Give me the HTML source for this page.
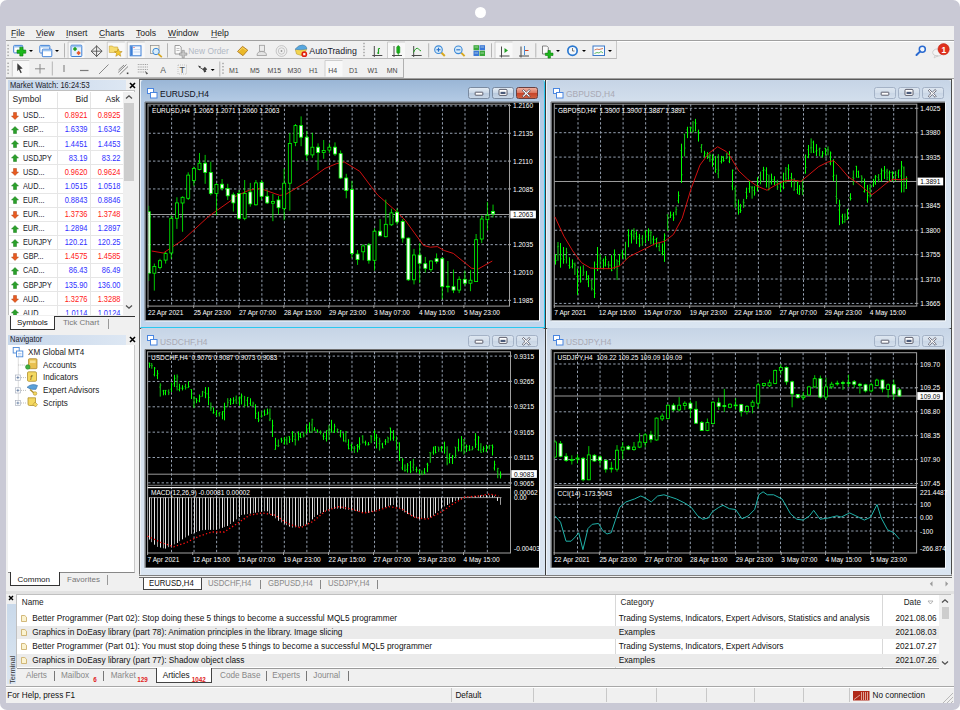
<!DOCTYPE html><html><head><meta charset="utf-8"><style>html,body{margin:0;padding:0;}body{width:960px;height:710px;position:relative;overflow:hidden;background:#fff;font-family:"Liberation Sans", sans-serif;}svg text{font-family:"Liberation Sans",sans-serif;}</style></head><body><div style="position:absolute;left:0;top:0;width:960px;height:710px;border-radius:7px;background:#c9c9d5;"></div><div style="position:absolute;left:474.9px;top:7.1px;width:11.3px;height:11.3px;border-radius:6px;background:#fff;"></div><div style="position:absolute;left:6px;top:26px;width:948px;height:677px;background:#f0f0f0;"></div><div style="position:absolute;left:11px;top:27.5px;font-size:8.6px;line-height:10.32px;color:#1a1a1a;white-space:nowrap;"><span style="text-decoration:underline;text-decoration-color:#888">F</span>ile</div><div style="position:absolute;left:36px;top:27.5px;font-size:8.6px;line-height:10.32px;color:#1a1a1a;white-space:nowrap;"><span style="text-decoration:underline;text-decoration-color:#888">V</span>iew</div><div style="position:absolute;left:66px;top:27.5px;font-size:8.6px;line-height:10.32px;color:#1a1a1a;white-space:nowrap;"><span style="text-decoration:underline;text-decoration-color:#888">I</span>nsert</div><div style="position:absolute;left:99px;top:27.5px;font-size:8.6px;line-height:10.32px;color:#1a1a1a;white-space:nowrap;"><span style="text-decoration:underline;text-decoration-color:#888">C</span>harts</div><div style="position:absolute;left:136px;top:27.5px;font-size:8.6px;line-height:10.32px;color:#1a1a1a;white-space:nowrap;"><span style="text-decoration:underline;text-decoration-color:#888">T</span>ools</div><div style="position:absolute;left:168px;top:27.5px;font-size:8.6px;line-height:10.32px;color:#1a1a1a;white-space:nowrap;"><span style="text-decoration:underline;text-decoration-color:#888">W</span>indow</div><div style="position:absolute;left:211px;top:27.5px;font-size:8.6px;line-height:10.32px;color:#1a1a1a;white-space:nowrap;"><span style="text-decoration:underline;text-decoration-color:#888">H</span>elp</div><div style="position:absolute;left:6px;top:39.5px;width:948px;height:1px;background:#a0a0a0;"></div><div style="position:absolute;left:6px;top:40.5px;width:948px;height:1px;background:#fff;"></div><div style="position:absolute;left:6px;top:41px;width:611px;height:17.5px;background:#f0f0f0;border-bottom:1px solid #b8b8b8;border-right:1px solid #c8c8c8;box-sizing:border-box;"></div><div style="position:absolute;left:6px;top:59px;width:398px;height:18.5px;background:#f0f0f0;border-bottom:1px solid #b8b8b8;border-right:1px solid #b0b0b0;box-sizing:border-box;"></div><div style="position:absolute;left:6px;top:77.5px;width:948px;height:1px;background:#a0a0a0;"></div><div style="position:absolute;left:8px;top:80px;width:118px;height:10.5px;background:linear-gradient(to right,#c6d6ea,#dde7f3);"></div><div style="position:absolute;left:10px;top:79.6px;font-size:8.4px;line-height:10.08px;color:#1a1a2a;white-space:nowrap;transform:scaleX(0.9);transform-origin:0 0;">Market Watch: 16:24:53</div><svg style="position:absolute;left:128.5px;top:82.3px" width="7" height="7" viewBox="0 0 7 7"><path d="M1 1L6 6M6 1L1 6" stroke="#000" stroke-width="1.6"/></svg><div style="position:absolute;left:8px;top:90px;width:127px;height:226px;background:#fff;border:1px solid #c0c0c0;box-sizing:border-box;"></div><div style="position:absolute;left:9px;top:90.5px;width:114px;height:18.3px;background:#fff;border-bottom:1px solid #dcdcdc;box-sizing:border-box;"></div><div style="position:absolute;left:57px;top:92px;width:1px;height:16px;background:#e4e4e4;"></div><div style="position:absolute;left:90px;top:92px;width:1px;height:16px;background:#e4e4e4;"></div><div style="position:absolute;left:12.5px;top:94px;font-size:8.6px;line-height:10.32px;color:#222;white-space:nowrap;">Symbol</div><div style="position:absolute;left:75.5px;top:94px;font-size:8.6px;line-height:10.32px;color:#222;white-space:nowrap;">Bid</div><div style="position:absolute;left:105.5px;top:94px;font-size:8.6px;line-height:10.32px;color:#222;white-space:nowrap;">Ask</div><div style="position:absolute;left:123px;top:92px;width:12px;height:224px;background:#f0f0f0;"></div><div style="position:absolute;left:124px;top:103px;width:10px;height:78px;background:#cdcdcd;"></div><svg style="position:absolute;left:124px;top:94px" width="10" height="6" viewBox="0 0 10 6"><path d="M2 4.5L5 1.8L8 4.5" fill="none" stroke="#505050" stroke-width="1.3"/></svg><svg style="position:absolute;left:124px;top:304px" width="10" height="6" viewBox="0 0 10 6"><path d="M2 1.5L5 4.2L8 1.5" fill="none" stroke="#505050" stroke-width="1.3"/></svg><div style="position:absolute;left:9px;top:122px;width:114px;height:1px;background:#e6e6e6;"></div><div style="position:absolute;left:57px;top:108.8px;width:1px;height:14px;background:#e6e6e6;"></div><div style="position:absolute;left:90px;top:108.8px;width:1px;height:14px;background:#e6e6e6;"></div><svg style="position:absolute;left:11px;top:111.8px" width="8" height="8" viewBox="0 0 8 8"><path d="M4 7.5 L7.5 4 L5.5 4 L5.5 0.5 L2.5 0.5 L2.5 4 L0.5 4Z" fill="#e85a20" stroke="#b04010" stroke-width="0.5"/></svg><div style="position:absolute;left:22.8px;top:110.3px;font-size:8.8px;line-height:10.56px;color:#1a1a2a;white-space:nowrap;transform:scaleX(0.83);transform-origin:0 0;">USD...</div><div style="position:absolute;left:54.3px;top:110.3px;font-size:8.8px;line-height:10.56px;color:#ff2020;white-space:nowrap;"><div style="width:33.5px;text-align:right;transform:scaleX(0.85);transform-origin:100% 0;">0.8921</div></div><div style="position:absolute;left:87.3px;top:110.3px;font-size:8.8px;line-height:10.56px;color:#ff2020;white-space:nowrap;"><div style="width:33.5px;text-align:right;transform:scaleX(0.85);transform-origin:100% 0;">0.8925</div></div><div style="position:absolute;left:9px;top:136.1px;width:114px;height:1px;background:#e6e6e6;"></div><div style="position:absolute;left:57px;top:122.9px;width:1px;height:14px;background:#e6e6e6;"></div><div style="position:absolute;left:90px;top:122.9px;width:1px;height:14px;background:#e6e6e6;"></div><svg style="position:absolute;left:11px;top:125.9px" width="8" height="8" viewBox="0 0 8 8"><path d="M4 0.5 L7.5 4 L5.5 4 L5.5 7.5 L2.5 7.5 L2.5 4 L0.5 4Z" fill="#2aa02a" stroke="#1a7a1a" stroke-width="0.5"/></svg><div style="position:absolute;left:22.8px;top:124.4px;font-size:8.8px;line-height:10.56px;color:#1a1a2a;white-space:nowrap;transform:scaleX(0.83);transform-origin:0 0;">GBP...</div><div style="position:absolute;left:54.3px;top:124.4px;font-size:8.8px;line-height:10.56px;color:#3030ff;white-space:nowrap;"><div style="width:33.5px;text-align:right;transform:scaleX(0.85);transform-origin:100% 0;">1.6339</div></div><div style="position:absolute;left:87.3px;top:124.4px;font-size:8.8px;line-height:10.56px;color:#3030ff;white-space:nowrap;"><div style="width:33.5px;text-align:right;transform:scaleX(0.85);transform-origin:100% 0;">1.6342</div></div><div style="position:absolute;left:9px;top:150.2px;width:114px;height:1px;background:#e6e6e6;"></div><div style="position:absolute;left:57px;top:137px;width:1px;height:14px;background:#e6e6e6;"></div><div style="position:absolute;left:90px;top:137px;width:1px;height:14px;background:#e6e6e6;"></div><svg style="position:absolute;left:11px;top:140px" width="8" height="8" viewBox="0 0 8 8"><path d="M4 0.5 L7.5 4 L5.5 4 L5.5 7.5 L2.5 7.5 L2.5 4 L0.5 4Z" fill="#2aa02a" stroke="#1a7a1a" stroke-width="0.5"/></svg><div style="position:absolute;left:22.8px;top:138.5px;font-size:8.8px;line-height:10.56px;color:#1a1a2a;white-space:nowrap;transform:scaleX(0.83);transform-origin:0 0;">EUR...</div><div style="position:absolute;left:54.3px;top:138.5px;font-size:8.8px;line-height:10.56px;color:#3030ff;white-space:nowrap;"><div style="width:33.5px;text-align:right;transform:scaleX(0.85);transform-origin:100% 0;">1.4451</div></div><div style="position:absolute;left:87.3px;top:138.5px;font-size:8.8px;line-height:10.56px;color:#3030ff;white-space:nowrap;"><div style="width:33.5px;text-align:right;transform:scaleX(0.85);transform-origin:100% 0;">1.4453</div></div><div style="position:absolute;left:9px;top:164.3px;width:114px;height:1px;background:#e6e6e6;"></div><div style="position:absolute;left:57px;top:151.1px;width:1px;height:14px;background:#e6e6e6;"></div><div style="position:absolute;left:90px;top:151.1px;width:1px;height:14px;background:#e6e6e6;"></div><svg style="position:absolute;left:11px;top:154.1px" width="8" height="8" viewBox="0 0 8 8"><path d="M4 0.5 L7.5 4 L5.5 4 L5.5 7.5 L2.5 7.5 L2.5 4 L0.5 4Z" fill="#2aa02a" stroke="#1a7a1a" stroke-width="0.5"/></svg><div style="position:absolute;left:22.8px;top:152.6px;font-size:8.8px;line-height:10.56px;color:#1a1a2a;white-space:nowrap;transform:scaleX(0.83);transform-origin:0 0;">USDJPY</div><div style="position:absolute;left:54.3px;top:152.6px;font-size:8.8px;line-height:10.56px;color:#3030ff;white-space:nowrap;"><div style="width:33.5px;text-align:right;transform:scaleX(0.85);transform-origin:100% 0;">83.19</div></div><div style="position:absolute;left:87.3px;top:152.6px;font-size:8.8px;line-height:10.56px;color:#3030ff;white-space:nowrap;"><div style="width:33.5px;text-align:right;transform:scaleX(0.85);transform-origin:100% 0;">83.22</div></div><div style="position:absolute;left:9px;top:178.4px;width:114px;height:1px;background:#e6e6e6;"></div><div style="position:absolute;left:57px;top:165.2px;width:1px;height:14px;background:#e6e6e6;"></div><div style="position:absolute;left:90px;top:165.2px;width:1px;height:14px;background:#e6e6e6;"></div><svg style="position:absolute;left:11px;top:168.2px" width="8" height="8" viewBox="0 0 8 8"><path d="M4 7.5 L7.5 4 L5.5 4 L5.5 0.5 L2.5 0.5 L2.5 4 L0.5 4Z" fill="#e85a20" stroke="#b04010" stroke-width="0.5"/></svg><div style="position:absolute;left:22.8px;top:166.7px;font-size:8.8px;line-height:10.56px;color:#1a1a2a;white-space:nowrap;transform:scaleX(0.83);transform-origin:0 0;">USD...</div><div style="position:absolute;left:54.3px;top:166.7px;font-size:8.8px;line-height:10.56px;color:#ff2020;white-space:nowrap;"><div style="width:33.5px;text-align:right;transform:scaleX(0.85);transform-origin:100% 0;">0.9620</div></div><div style="position:absolute;left:87.3px;top:166.7px;font-size:8.8px;line-height:10.56px;color:#ff2020;white-space:nowrap;"><div style="width:33.5px;text-align:right;transform:scaleX(0.85);transform-origin:100% 0;">0.9624</div></div><div style="position:absolute;left:9px;top:192.5px;width:114px;height:1px;background:#e6e6e6;"></div><div style="position:absolute;left:57px;top:179.3px;width:1px;height:14px;background:#e6e6e6;"></div><div style="position:absolute;left:90px;top:179.3px;width:1px;height:14px;background:#e6e6e6;"></div><svg style="position:absolute;left:11px;top:182.3px" width="8" height="8" viewBox="0 0 8 8"><path d="M4 0.5 L7.5 4 L5.5 4 L5.5 7.5 L2.5 7.5 L2.5 4 L0.5 4Z" fill="#2aa02a" stroke="#1a7a1a" stroke-width="0.5"/></svg><div style="position:absolute;left:22.8px;top:180.8px;font-size:8.8px;line-height:10.56px;color:#1a1a2a;white-space:nowrap;transform:scaleX(0.83);transform-origin:0 0;">AUD...</div><div style="position:absolute;left:54.3px;top:180.8px;font-size:8.8px;line-height:10.56px;color:#3030ff;white-space:nowrap;"><div style="width:33.5px;text-align:right;transform:scaleX(0.85);transform-origin:100% 0;">1.0515</div></div><div style="position:absolute;left:87.3px;top:180.8px;font-size:8.8px;line-height:10.56px;color:#3030ff;white-space:nowrap;"><div style="width:33.5px;text-align:right;transform:scaleX(0.85);transform-origin:100% 0;">1.0518</div></div><div style="position:absolute;left:9px;top:206.6px;width:114px;height:1px;background:#e6e6e6;"></div><div style="position:absolute;left:57px;top:193.4px;width:1px;height:14px;background:#e6e6e6;"></div><div style="position:absolute;left:90px;top:193.4px;width:1px;height:14px;background:#e6e6e6;"></div><svg style="position:absolute;left:11px;top:196.4px" width="8" height="8" viewBox="0 0 8 8"><path d="M4 0.5 L7.5 4 L5.5 4 L5.5 7.5 L2.5 7.5 L2.5 4 L0.5 4Z" fill="#2aa02a" stroke="#1a7a1a" stroke-width="0.5"/></svg><div style="position:absolute;left:22.8px;top:194.9px;font-size:8.8px;line-height:10.56px;color:#1a1a2a;white-space:nowrap;transform:scaleX(0.83);transform-origin:0 0;">EUR...</div><div style="position:absolute;left:54.3px;top:194.9px;font-size:8.8px;line-height:10.56px;color:#3030ff;white-space:nowrap;"><div style="width:33.5px;text-align:right;transform:scaleX(0.85);transform-origin:100% 0;">0.8843</div></div><div style="position:absolute;left:87.3px;top:194.9px;font-size:8.8px;line-height:10.56px;color:#3030ff;white-space:nowrap;"><div style="width:33.5px;text-align:right;transform:scaleX(0.85);transform-origin:100% 0;">0.8846</div></div><div style="position:absolute;left:9px;top:220.7px;width:114px;height:1px;background:#e6e6e6;"></div><div style="position:absolute;left:57px;top:207.5px;width:1px;height:14px;background:#e6e6e6;"></div><div style="position:absolute;left:90px;top:207.5px;width:1px;height:14px;background:#e6e6e6;"></div><svg style="position:absolute;left:11px;top:210.5px" width="8" height="8" viewBox="0 0 8 8"><path d="M4 7.5 L7.5 4 L5.5 4 L5.5 0.5 L2.5 0.5 L2.5 4 L0.5 4Z" fill="#e85a20" stroke="#b04010" stroke-width="0.5"/></svg><div style="position:absolute;left:22.8px;top:209px;font-size:8.8px;line-height:10.56px;color:#1a1a2a;white-space:nowrap;transform:scaleX(0.83);transform-origin:0 0;">EUR...</div><div style="position:absolute;left:54.3px;top:209px;font-size:8.8px;line-height:10.56px;color:#ff2020;white-space:nowrap;"><div style="width:33.5px;text-align:right;transform:scaleX(0.85);transform-origin:100% 0;">1.3736</div></div><div style="position:absolute;left:87.3px;top:209px;font-size:8.8px;line-height:10.56px;color:#ff2020;white-space:nowrap;"><div style="width:33.5px;text-align:right;transform:scaleX(0.85);transform-origin:100% 0;">1.3748</div></div><div style="position:absolute;left:9px;top:234.8px;width:114px;height:1px;background:#e6e6e6;"></div><div style="position:absolute;left:57px;top:221.6px;width:1px;height:14px;background:#e6e6e6;"></div><div style="position:absolute;left:90px;top:221.6px;width:1px;height:14px;background:#e6e6e6;"></div><svg style="position:absolute;left:11px;top:224.6px" width="8" height="8" viewBox="0 0 8 8"><path d="M4 0.5 L7.5 4 L5.5 4 L5.5 7.5 L2.5 7.5 L2.5 4 L0.5 4Z" fill="#2aa02a" stroke="#1a7a1a" stroke-width="0.5"/></svg><div style="position:absolute;left:22.8px;top:223.1px;font-size:8.8px;line-height:10.56px;color:#1a1a2a;white-space:nowrap;transform:scaleX(0.83);transform-origin:0 0;">EUR...</div><div style="position:absolute;left:54.3px;top:223.1px;font-size:8.8px;line-height:10.56px;color:#3030ff;white-space:nowrap;"><div style="width:33.5px;text-align:right;transform:scaleX(0.85);transform-origin:100% 0;">1.2894</div></div><div style="position:absolute;left:87.3px;top:223.1px;font-size:8.8px;line-height:10.56px;color:#3030ff;white-space:nowrap;"><div style="width:33.5px;text-align:right;transform:scaleX(0.85);transform-origin:100% 0;">1.2897</div></div><div style="position:absolute;left:9px;top:248.9px;width:114px;height:1px;background:#e6e6e6;"></div><div style="position:absolute;left:57px;top:235.7px;width:1px;height:14px;background:#e6e6e6;"></div><div style="position:absolute;left:90px;top:235.7px;width:1px;height:14px;background:#e6e6e6;"></div><svg style="position:absolute;left:11px;top:238.7px" width="8" height="8" viewBox="0 0 8 8"><path d="M4 0.5 L7.5 4 L5.5 4 L5.5 7.5 L2.5 7.5 L2.5 4 L0.5 4Z" fill="#2aa02a" stroke="#1a7a1a" stroke-width="0.5"/></svg><div style="position:absolute;left:22.8px;top:237.2px;font-size:8.8px;line-height:10.56px;color:#1a1a2a;white-space:nowrap;transform:scaleX(0.83);transform-origin:0 0;">EURJPY</div><div style="position:absolute;left:54.3px;top:237.2px;font-size:8.8px;line-height:10.56px;color:#3030ff;white-space:nowrap;"><div style="width:33.5px;text-align:right;transform:scaleX(0.85);transform-origin:100% 0;">120.21</div></div><div style="position:absolute;left:87.3px;top:237.2px;font-size:8.8px;line-height:10.56px;color:#3030ff;white-space:nowrap;"><div style="width:33.5px;text-align:right;transform:scaleX(0.85);transform-origin:100% 0;">120.25</div></div><div style="position:absolute;left:9px;top:263px;width:114px;height:1px;background:#e6e6e6;"></div><div style="position:absolute;left:57px;top:249.8px;width:1px;height:14px;background:#e6e6e6;"></div><div style="position:absolute;left:90px;top:249.8px;width:1px;height:14px;background:#e6e6e6;"></div><svg style="position:absolute;left:11px;top:252.8px" width="8" height="8" viewBox="0 0 8 8"><path d="M4 7.5 L7.5 4 L5.5 4 L5.5 0.5 L2.5 0.5 L2.5 4 L0.5 4Z" fill="#e85a20" stroke="#b04010" stroke-width="0.5"/></svg><div style="position:absolute;left:22.8px;top:251.3px;font-size:8.8px;line-height:10.56px;color:#1a1a2a;white-space:nowrap;transform:scaleX(0.83);transform-origin:0 0;">GBP...</div><div style="position:absolute;left:54.3px;top:251.3px;font-size:8.8px;line-height:10.56px;color:#ff2020;white-space:nowrap;"><div style="width:33.5px;text-align:right;transform:scaleX(0.85);transform-origin:100% 0;">1.4575</div></div><div style="position:absolute;left:87.3px;top:251.3px;font-size:8.8px;line-height:10.56px;color:#ff2020;white-space:nowrap;"><div style="width:33.5px;text-align:right;transform:scaleX(0.85);transform-origin:100% 0;">1.4585</div></div><div style="position:absolute;left:9px;top:277.1px;width:114px;height:1px;background:#e6e6e6;"></div><div style="position:absolute;left:57px;top:263.9px;width:1px;height:14px;background:#e6e6e6;"></div><div style="position:absolute;left:90px;top:263.9px;width:1px;height:14px;background:#e6e6e6;"></div><svg style="position:absolute;left:11px;top:266.9px" width="8" height="8" viewBox="0 0 8 8"><path d="M4 0.5 L7.5 4 L5.5 4 L5.5 7.5 L2.5 7.5 L2.5 4 L0.5 4Z" fill="#2aa02a" stroke="#1a7a1a" stroke-width="0.5"/></svg><div style="position:absolute;left:22.8px;top:265.4px;font-size:8.8px;line-height:10.56px;color:#1a1a2a;white-space:nowrap;transform:scaleX(0.83);transform-origin:0 0;">CAD...</div><div style="position:absolute;left:54.3px;top:265.4px;font-size:8.8px;line-height:10.56px;color:#3030ff;white-space:nowrap;"><div style="width:33.5px;text-align:right;transform:scaleX(0.85);transform-origin:100% 0;">86.43</div></div><div style="position:absolute;left:87.3px;top:265.4px;font-size:8.8px;line-height:10.56px;color:#3030ff;white-space:nowrap;"><div style="width:33.5px;text-align:right;transform:scaleX(0.85);transform-origin:100% 0;">86.49</div></div><div style="position:absolute;left:9px;top:291.2px;width:114px;height:1px;background:#e6e6e6;"></div><div style="position:absolute;left:57px;top:278px;width:1px;height:14px;background:#e6e6e6;"></div><div style="position:absolute;left:90px;top:278px;width:1px;height:14px;background:#e6e6e6;"></div><svg style="position:absolute;left:11px;top:281px" width="8" height="8" viewBox="0 0 8 8"><path d="M4 0.5 L7.5 4 L5.5 4 L5.5 7.5 L2.5 7.5 L2.5 4 L0.5 4Z" fill="#2aa02a" stroke="#1a7a1a" stroke-width="0.5"/></svg><div style="position:absolute;left:22.8px;top:279.5px;font-size:8.8px;line-height:10.56px;color:#1a1a2a;white-space:nowrap;transform:scaleX(0.83);transform-origin:0 0;">GBPJPY</div><div style="position:absolute;left:54.3px;top:279.5px;font-size:8.8px;line-height:10.56px;color:#3030ff;white-space:nowrap;"><div style="width:33.5px;text-align:right;transform:scaleX(0.85);transform-origin:100% 0;">135.90</div></div><div style="position:absolute;left:87.3px;top:279.5px;font-size:8.8px;line-height:10.56px;color:#3030ff;white-space:nowrap;"><div style="width:33.5px;text-align:right;transform:scaleX(0.85);transform-origin:100% 0;">136.00</div></div><div style="position:absolute;left:9px;top:305.3px;width:114px;height:1px;background:#e6e6e6;"></div><div style="position:absolute;left:57px;top:292.1px;width:1px;height:14px;background:#e6e6e6;"></div><div style="position:absolute;left:90px;top:292.1px;width:1px;height:14px;background:#e6e6e6;"></div><svg style="position:absolute;left:11px;top:295.1px" width="8" height="8" viewBox="0 0 8 8"><path d="M4 7.5 L7.5 4 L5.5 4 L5.5 0.5 L2.5 0.5 L2.5 4 L0.5 4Z" fill="#e85a20" stroke="#b04010" stroke-width="0.5"/></svg><div style="position:absolute;left:22.8px;top:293.6px;font-size:8.8px;line-height:10.56px;color:#1a1a2a;white-space:nowrap;transform:scaleX(0.83);transform-origin:0 0;">AUD...</div><div style="position:absolute;left:54.3px;top:293.6px;font-size:8.8px;line-height:10.56px;color:#ff2020;white-space:nowrap;"><div style="width:33.5px;text-align:right;transform:scaleX(0.85);transform-origin:100% 0;">1.3276</div></div><div style="position:absolute;left:87.3px;top:293.6px;font-size:8.8px;line-height:10.56px;color:#ff2020;white-space:nowrap;"><div style="width:33.5px;text-align:right;transform:scaleX(0.85);transform-origin:100% 0;">1.3288</div></div><div style="position:absolute;left:9px;top:319.4px;width:114px;height:1px;background:#e6e6e6;"></div><div style="position:absolute;left:57px;top:306.2px;width:1px;height:14px;background:#e6e6e6;"></div><div style="position:absolute;left:90px;top:306.2px;width:1px;height:14px;background:#e6e6e6;"></div><svg style="position:absolute;left:11px;top:309.2px" width="8" height="8" viewBox="0 0 8 8"><path d="M4 0.5 L7.5 4 L5.5 4 L5.5 7.5 L2.5 7.5 L2.5 4 L0.5 4Z" fill="#2aa02a" stroke="#1a7a1a" stroke-width="0.5"/></svg><div style="position:absolute;left:22.8px;top:307.7px;font-size:8.8px;line-height:10.56px;color:#1a1a2a;white-space:nowrap;transform:scaleX(0.83);transform-origin:0 0;">AUD...</div><div style="position:absolute;left:54.3px;top:307.7px;font-size:8.8px;line-height:10.56px;color:#3030ff;white-space:nowrap;"><div style="width:33.5px;text-align:right;transform:scaleX(0.85);transform-origin:100% 0;">1.0114</div></div><div style="position:absolute;left:87.3px;top:307.7px;font-size:8.8px;line-height:10.56px;color:#3030ff;white-space:nowrap;"><div style="width:33.5px;text-align:right;transform:scaleX(0.85);transform-origin:100% 0;">1.0124</div></div><div style="position:absolute;left:8px;top:315px;width:127px;height:15px;background:#f0f0f0;"></div><div style="position:absolute;left:10px;top:315.5px;width:45px;height:14px;background:#fff;border:1px solid #333;border-top:none;box-sizing:border-box;"></div><div style="position:absolute;left:55px;top:315.5px;width:80px;height:1px;background:#333;"></div><div style="position:absolute;left:17px;top:318px;font-size:8px;line-height:9.6px;color:#111;white-space:nowrap;">Symbols</div><div style="position:absolute;left:63px;top:318px;font-size:8px;line-height:9.6px;color:#777;white-space:nowrap;">Tick Chart</div><div style="position:absolute;left:108px;top:319px;width:1px;height:10px;background:#999;"></div><div style="position:absolute;left:8px;top:335px;width:118px;height:9.5px;background:linear-gradient(to right,#c6d6ea,#dde7f3);"></div><div style="position:absolute;left:10px;top:333.8px;font-size:8.4px;line-height:10.08px;color:#1a1a2a;white-space:nowrap;transform:scaleX(0.9);transform-origin:0 0;">Navigator</div><svg style="position:absolute;left:128.5px;top:336px" width="7" height="7" viewBox="0 0 7 7"><path d="M1 1L6 6M6 1L1 6" stroke="#000" stroke-width="1.6"/></svg><div style="position:absolute;left:8px;top:344.5px;width:127px;height:228px;background:#fff;border-right:1px solid #c8c8c8;border-bottom:1px solid #888;box-sizing:border-box;"></div><div style="position:absolute;left:27.5px;top:346.8px;font-size:8.8px;line-height:10.56px;color:#222;white-space:nowrap;transform:scaleX(0.92);transform-origin:0 0;">XM Global MT4</div><div style="position:absolute;left:42.5px;top:359.6px;font-size:8.8px;line-height:10.56px;color:#222;white-space:nowrap;transform:scaleX(0.92);transform-origin:0 0;">Accounts</div><div style="position:absolute;left:42.5px;top:372.3px;font-size:8.8px;line-height:10.56px;color:#222;white-space:nowrap;transform:scaleX(0.92);transform-origin:0 0;">Indicators</div><div style="position:absolute;left:42.5px;top:385.1px;font-size:8.8px;line-height:10.56px;color:#222;white-space:nowrap;transform:scaleX(0.92);transform-origin:0 0;">Expert Advisors</div><div style="position:absolute;left:42.5px;top:397.8px;font-size:8.8px;line-height:10.56px;color:#222;white-space:nowrap;transform:scaleX(0.92);transform-origin:0 0;">Scripts</div><div style="position:absolute;left:8px;top:572.5px;width:127px;height:14px;background:#f0f0f0;"></div><div style="position:absolute;left:10px;top:572px;width:50px;height:14px;background:#fff;border:1px solid #333;border-top:none;box-sizing:border-box;"></div><div style="position:absolute;left:17.5px;top:574.5px;font-size:8px;line-height:9.6px;color:#222;white-space:nowrap;">Common</div><div style="position:absolute;left:67px;top:574.5px;font-size:8px;line-height:9.6px;color:#777;white-space:nowrap;">Favorites</div><div style="position:absolute;left:107px;top:575px;width:1px;height:10px;background:#999;"></div><div style="position:absolute;left:139px;top:78.5px;width:1px;height:497px;background:#6a6a6a;"></div><div style="position:absolute;left:139px;top:78.8px;width:813px;height:1.2px;background:#5a5a5a;"></div><div style="position:absolute;left:951px;top:79px;width:1.2px;height:496px;background:#4a4a4a;"></div><div style="position:absolute;left:952.2px;top:79px;width:1.8px;height:496px;background:#f4f4f4;"></div><div style="position:absolute;left:139px;top:574px;width:813px;height:1.6px;background:linear-gradient(#b0b0b0,#707070);"></div><div style="position:absolute;left:545.2px;top:80px;width:1px;height:495px;background:#3a3a3a;"></div><div style="position:absolute;left:140px;top:327.5px;width:812px;height:1px;background:#3a3a3a;"></div><div style="position:absolute;left:140px;top:80px;width:405.2px;height:247.5px;background:linear-gradient(#9ab6d6 0px,#b2c9e3 20px,#c0d5ec 100%);border-right:1.2px solid #2ac8f0;border-bottom:1.4px solid #2ac8f0;border-left:1px solid #e8f0f8;box-sizing:border-box;border-radius:3px 3px 0 0;"></div><div style="position:absolute;left:160px;top:89px;font-size:9.2px;line-height:11.04px;color:#101020;white-space:nowrap;transform:scaleX(0.92);transform-origin:0 0;">EURUSD,H4</div><svg style="position:absolute;left:147px;top:87.5px" width="11" height="11" viewBox="0 0 11 11"><rect x="0.5" y="0.5" width="6" height="5" fill="#fff" stroke="#4a86e0"/><rect x="3.5" y="4.5" width="6.5" height="5.5" fill="#fff" stroke="#4a86e0"/></svg><div style="position:absolute;left:467.7px;top:87.4px;width:22.8px;height:12px;background:linear-gradient(#e4ecf4,#ccd9e8 45%,#b9cade 55%,#c8d6e6);border:1px solid #7a8aa0;border-radius:2.5px;box-sizing:border-box;"></div><div style="position:absolute;left:491.7px;top:87.4px;width:22.8px;height:12px;background:linear-gradient(#e4ecf4,#ccd9e8 45%,#b9cade 55%,#c8d6e6);border:1px solid #7a8aa0;border-radius:2.5px;box-sizing:border-box;"></div><div style="position:absolute;left:515.7px;top:87.4px;width:22.8px;height:12px;background:linear-gradient(#f0b0a0,#dc7a64 45%,#c8452a 55%,#d06040);border:1px solid #6a4040;border-radius:2.5px;box-sizing:border-box;"></div><svg style="position:absolute;left:467.7px;top:87.4px" width="72" height="12" viewBox="0 0 72 12"><rect x="7.2" y="5.2" width="7.6" height="3" rx="0.4" fill="#fff" stroke="#3a3a4a" stroke-width="0.8"/><rect x="31" y="2.4" width="8" height="6" rx="1" fill="#fff" stroke="#3a3a4a" stroke-width="0.8"/><rect x="32.5" y="4.8" width="5" height="2.2" fill="#4a5a7a"/><path d="M55.5 2.5L58.3 5.2L61.1 2.5L62.3 3.7L59.5 6.4L62.3 9.1L61.1 10.3L58.3 7.6L55.5 10.3L54.3 9.1L57.1 6.4L54.3 3.7Z" fill="#fff" stroke="#3a3a4a" stroke-width="0.7"/></svg><div style="position:absolute;left:546.2px;top:80px;width:404.8px;height:247.5px;background:linear-gradient(#c6d4e6 0px,#d2deec 20px,#dae5f1 100%);border-left:1px solid #eef3f8;box-sizing:border-box;border-radius:3px 3px 0 0;"></div><div style="position:absolute;left:566.2px;top:89px;font-size:9.2px;line-height:11.04px;color:#a9a9b4;white-space:nowrap;transform:scaleX(0.92);transform-origin:0 0;">GBPUSD,H4</div><svg style="position:absolute;left:553.2px;top:87.5px" width="11" height="11" viewBox="0 0 11 11"><rect x="0.5" y="0.5" width="6" height="5" fill="#fff" stroke="#4a86e0"/><rect x="3.5" y="4.5" width="6.5" height="5.5" fill="#fff" stroke="#4a86e0"/></svg><div style="position:absolute;left:873.5px;top:87.4px;width:22.8px;height:12px;background:linear-gradient(#dde6f0,#d2ddea 50%,#cad7e6 55%,#d4dfec);border:1px solid #a4b2c6;border-radius:2.5px;box-sizing:border-box;"></div><div style="position:absolute;left:897.5px;top:87.4px;width:22.8px;height:12px;background:linear-gradient(#dde6f0,#d2ddea 50%,#cad7e6 55%,#d4dfec);border:1px solid #a4b2c6;border-radius:2.5px;box-sizing:border-box;"></div><div style="position:absolute;left:921.5px;top:87.4px;width:22.8px;height:12px;background:linear-gradient(#dde6f0,#d2ddea 50%,#cad7e6 55%,#d4dfec);border:1px solid #a4b2c6;border-radius:2.5px;box-sizing:border-box;"></div><svg style="position:absolute;left:873.5px;top:87.4px" width="72" height="12" viewBox="0 0 72 12"><rect x="7.2" y="5.2" width="7.6" height="3" rx="0.4" fill="#fff" stroke="#3a3a4a" stroke-width="0.8"/><rect x="31" y="2.4" width="8" height="6" rx="1" fill="#fff" stroke="#3a3a4a" stroke-width="0.8"/><rect x="32.5" y="4.8" width="5" height="2.2" fill="#4a5a7a"/><path d="M55.5 2.5L58.3 5.2L61.1 2.5L62.3 3.7L59.5 6.4L62.3 9.1L61.1 10.3L58.3 7.6L55.5 10.3L54.3 9.1L57.1 6.4L54.3 3.7Z" fill="#fff" stroke="#3a3a4a" stroke-width="0.7"/></svg><div style="position:absolute;left:140px;top:327.6px;width:405.2px;height:247px;background:linear-gradient(#c6d4e6 0px,#d2deec 20px,#dae5f1 100%);border-left:1px solid #eef3f8;box-sizing:border-box;border-radius:3px 3px 0 0;"></div><div style="position:absolute;left:160px;top:336.6px;font-size:9.2px;line-height:11.04px;color:#a9a9b4;white-space:nowrap;transform:scaleX(0.92);transform-origin:0 0;">USDCHF,H4</div><svg style="position:absolute;left:147px;top:335.1px" width="11" height="11" viewBox="0 0 11 11"><rect x="0.5" y="0.5" width="6" height="5" fill="#fff" stroke="#4a86e0"/><rect x="3.5" y="4.5" width="6.5" height="5.5" fill="#fff" stroke="#4a86e0"/></svg><div style="position:absolute;left:467.7px;top:335px;width:22.8px;height:12px;background:linear-gradient(#dde6f0,#d2ddea 50%,#cad7e6 55%,#d4dfec);border:1px solid #a4b2c6;border-radius:2.5px;box-sizing:border-box;"></div><div style="position:absolute;left:491.7px;top:335px;width:22.8px;height:12px;background:linear-gradient(#dde6f0,#d2ddea 50%,#cad7e6 55%,#d4dfec);border:1px solid #a4b2c6;border-radius:2.5px;box-sizing:border-box;"></div><div style="position:absolute;left:515.7px;top:335px;width:22.8px;height:12px;background:linear-gradient(#dde6f0,#d2ddea 50%,#cad7e6 55%,#d4dfec);border:1px solid #a4b2c6;border-radius:2.5px;box-sizing:border-box;"></div><svg style="position:absolute;left:467.7px;top:335px" width="72" height="12" viewBox="0 0 72 12"><rect x="7.2" y="5.2" width="7.6" height="3" rx="0.4" fill="#fff" stroke="#3a3a4a" stroke-width="0.8"/><rect x="31" y="2.4" width="8" height="6" rx="1" fill="#fff" stroke="#3a3a4a" stroke-width="0.8"/><rect x="32.5" y="4.8" width="5" height="2.2" fill="#4a5a7a"/><path d="M55.5 2.5L58.3 5.2L61.1 2.5L62.3 3.7L59.5 6.4L62.3 9.1L61.1 10.3L58.3 7.6L55.5 10.3L54.3 9.1L57.1 6.4L54.3 3.7Z" fill="#fff" stroke="#3a3a4a" stroke-width="0.7"/></svg><div style="position:absolute;left:546.2px;top:327.6px;width:404.8px;height:247px;background:linear-gradient(#c6d4e6 0px,#d2deec 20px,#dae5f1 100%);border-left:1px solid #eef3f8;box-sizing:border-box;border-radius:3px 3px 0 0;"></div><div style="position:absolute;left:566.2px;top:336.6px;font-size:9.2px;line-height:11.04px;color:#a9a9b4;white-space:nowrap;transform:scaleX(0.92);transform-origin:0 0;">USDJPY,H4</div><svg style="position:absolute;left:553.2px;top:335.1px" width="11" height="11" viewBox="0 0 11 11"><rect x="0.5" y="0.5" width="6" height="5" fill="#fff" stroke="#4a86e0"/><rect x="3.5" y="4.5" width="6.5" height="5.5" fill="#fff" stroke="#4a86e0"/></svg><div style="position:absolute;left:873.5px;top:335px;width:22.8px;height:12px;background:linear-gradient(#dde6f0,#d2ddea 50%,#cad7e6 55%,#d4dfec);border:1px solid #a4b2c6;border-radius:2.5px;box-sizing:border-box;"></div><div style="position:absolute;left:897.5px;top:335px;width:22.8px;height:12px;background:linear-gradient(#dde6f0,#d2ddea 50%,#cad7e6 55%,#d4dfec);border:1px solid #a4b2c6;border-radius:2.5px;box-sizing:border-box;"></div><div style="position:absolute;left:921.5px;top:335px;width:22.8px;height:12px;background:linear-gradient(#dde6f0,#d2ddea 50%,#cad7e6 55%,#d4dfec);border:1px solid #a4b2c6;border-radius:2.5px;box-sizing:border-box;"></div><svg style="position:absolute;left:873.5px;top:335px" width="72" height="12" viewBox="0 0 72 12"><rect x="7.2" y="5.2" width="7.6" height="3" rx="0.4" fill="#fff" stroke="#3a3a4a" stroke-width="0.8"/><rect x="31" y="2.4" width="8" height="6" rx="1" fill="#fff" stroke="#3a3a4a" stroke-width="0.8"/><rect x="32.5" y="4.8" width="5" height="2.2" fill="#4a5a7a"/><path d="M55.5 2.5L58.3 5.2L61.1 2.5L62.3 3.7L59.5 6.4L62.3 9.1L61.1 10.3L58.3 7.6L55.5 10.3L54.3 9.1L57.1 6.4L54.3 3.7Z" fill="#fff" stroke="#3a3a4a" stroke-width="0.7"/></svg><svg style="position:absolute;left:0;top:0" width="960" height="80" viewBox="0 0 960 80"><rect x="7.3" y="44.7" width="1.6" height="1.4" fill="#a8a8a8"/><rect x="7.3" y="48.05" width="1.6" height="1.4" fill="#a8a8a8"/><rect x="7.3" y="51.4" width="1.6" height="1.4" fill="#a8a8a8"/><rect x="7.3" y="54.75" width="1.6" height="1.4" fill="#a8a8a8"/><rect x="13.7" y="45.4" width="9" height="7.5" fill="#fff" stroke="#3d7fd6" stroke-width="1" rx="0.8"/><rect x="14.2" y="45.9" width="8" height="1.6" fill="#9cc4f0"/><path d="M19.8 47.2H23V50H25.8V53.2H23V56H19.8V53.2H17V50H19.8Z" fill="#1cb81c" stroke="#0a7a0a" stroke-width="0.6"/><path d="M29 50 H33 L31 52Z" fill="#000"/><rect x="39.8" y="45.4" width="10" height="7.6" fill="#fff" stroke="#3d7fd6" stroke-width="1" rx="0.8"/><rect x="40.3" y="45.9" width="9" height="1.6" fill="#9cc4f0"/><rect x="42.3" y="49.2" width="9.5" height="7.5" fill="#fff" stroke="#3d7fd6" stroke-width="1" rx="0.8"/><rect x="42.8" y="49.7" width="8.5" height="1.6" fill="#9cc4f0"/><path d="M55 50 H59 L57 52Z" fill="#000"/><line x1="64.5" y1="43.3" x2="64.5" y2="57.5" stroke="#b4b4b4" stroke-width="1"/><rect x="68.1" y="42" width="16.4" height="16" fill="#f8f8f8"/><path d="M68.1 58 V42 H84.5" fill="none" stroke="#c4c4c4" stroke-width="0.8"/><rect x="71" y="45.2" width="10.8" height="11.3" fill="#e8f2fc" stroke="#3d7fd6" stroke-width="1" rx="0.8"/><rect x="71.5" y="45.7" width="9.8" height="1.6" fill="#9cc4f0"/><path d="M75 46.8 L77.2 49 L75 51.2 L72.8 49Z" fill="#22a022"/><path d="M78.6 50.8 L80.8 53 L78.6 55.2 L76.4 53Z" fill="#e85a2a"/><path d="M96.6 46 L102 51.2 L96.6 56.4 L91.2 51.2Z" fill="none" stroke="#555" stroke-width="1"/><path d="M96.6 45.5V57M91 51.2H102.3" stroke="#555" stroke-width="0.9"/><rect x="107.3" y="42" width="17.5" height="16" fill="#f8f8f8"/><path d="M107.3 58 V42 H124.8" fill="none" stroke="#c4c4c4" stroke-width="0.8"/><path d="M109.3 46 H112.5 L113.5 47 H117.7 V52.5 H109.3Z" fill="#f6dc70" stroke="#c8a030" stroke-width="0.6"/><path d="M118.3 48.8 L119.4 51.4 L122.2 51.6 L120 53.4 L120.8 56.3 L118.3 54.7 L115.8 56.3 L116.6 53.4 L114.4 51.6 L117.2 51.4Z" fill="#f2c830" stroke="#b08010" stroke-width="0.5"/><rect x="127.3" y="42" width="17.5" height="16" fill="#f8f8f8"/><path d="M127.3 58 V42 H144.8" fill="none" stroke="#c4c4c4" stroke-width="0.8"/><rect x="130.2" y="45.8" width="10.8" height="10" fill="#f4f8ff" stroke="#3d7fd6" stroke-width="1"/><rect x="130.5" y="46.2" width="2.2" height="9.3" fill="#3d7fd6"/><path d="M133.5 49.5H140.5M133.5 52H140.5" stroke="#a8c8ec" stroke-width="0.6"/><rect x="133.5" y="47" width="1" height="1" fill="#e04040"/><rect x="150.5" y="45.5" width="8.5" height="8" fill="#f8f4e8" stroke="#888" stroke-width="0.7"/><circle cx="156" cy="51.5" r="3.2" fill="#d8ecfa" stroke="#3d8ad8" stroke-width="1"/><path d="M158.2 53.8 L161.8 57.2" stroke="#d8a820" stroke-width="1.6"/><line x1="167.5" y1="43.3" x2="167.5" y2="57.5" stroke="#b4b4b4" stroke-width="1"/><path d="M175 45.5H179.6L181.2 47.1V54H175Z" fill="#fafafa" stroke="#888" stroke-width="0.8"/><path d="M176.5 48.5H179.5M176.5 50.5H179.5" stroke="#999" stroke-width="0.6"/><path d="M182.1 50.4H184.3V53H186.9V55.2H184.3V57.8H182.1V55.2H179.5V53H182.1Z" fill="#c8c8c8" stroke="#8a8a8a" stroke-width="0.6"/><text x="188.3" y="53.8" fill="#b0b8c4" font-size="8.4">New Order</text><path d="M237.5 51.5 L242.5 46.3 L247.8 50.2 L243 55.7Z" fill="#eab828" stroke="#a8701a" stroke-width="0.8"/><path d="M238.5 51.5 L242.6 47.8 L246.3 50.4" fill="none" stroke="#ffe890" stroke-width="0.6"/><path d="M257 55.5 Q257 51.5 261.5 51.5 Q266.5 51.5 266.5 55.5Z" fill="#e4e4e4" stroke="#9c9c9c" stroke-width="0.8"/><rect x="259.5" y="45.3" width="5" height="6" fill="#ececec" stroke="#9c9c9c" stroke-width="0.8"/><circle cx="281.5" cy="51" r="5.4" fill="#efefef" stroke="#c0c0c0" stroke-width="0.9"/><circle cx="281.5" cy="51" r="3.2" fill="none" stroke="#bdbdbd" stroke-width="0.8"/><circle cx="281.5" cy="51" r="0.9" fill="#999"/><path d="M295.3 49.5 Q298.5 45 302.5 45.2 Q306.5 45.6 306.7 49.2 L303 56 L296.5 54Z" fill="#f2d450" stroke="#b09020" stroke-width="0.5"/><path d="M295 49.3 Q298.8 44.8 302.6 45 Q306.8 45.4 306.8 49 Q301 50.5 295 49.3Z" fill="#58a8e0" stroke="#3a78b8" stroke-width="0.5"/><circle cx="304.3" cy="54.2" r="2.9" fill="#e02010"/><rect x="303.2" y="53.1" width="2.2" height="2.2" fill="#fff"/><text x="309.3" y="54" fill="#1a1a2a" font-size="8.8">AutoTrading</text><rect x="363.2" y="42.8" width="1.6" height="1.4" fill="#a8a8a8"/><rect x="363.2" y="45.8" width="1.6" height="1.4" fill="#a8a8a8"/><rect x="363.2" y="48.8" width="1.6" height="1.4" fill="#a8a8a8"/><rect x="363.2" y="51.8" width="1.6" height="1.4" fill="#a8a8a8"/><rect x="363.2" y="54.8" width="1.6" height="1.4" fill="#a8a8a8"/><path d="M374.3 46V57M372.3 55.5H382.3" stroke="#4a4a4a" stroke-width="1" fill="none"/><path d="M378.5 48.5V54M377 53H378.5M378.5 48.5H380" stroke="#22a022" stroke-width="1.2"/><rect x="387.5" y="42" width="17.5" height="16" fill="#f8f8f8"/><path d="M387.5 58 V42 H405" fill="none" stroke="#c4c4c4" stroke-width="0.8"/><path d="M394 46V57M392 55.5H402" stroke="#4a4a4a" stroke-width="1" fill="none"/><rect x="396.8" y="46.3" width="3" height="7" rx="1" fill="#22c022" stroke="#0a8a0a" stroke-width="0.6"/><path d="M398.3 45V56" stroke="#0a8a0a" stroke-width="0.6"/><path d="M413.7 46V57M411.7 55.5H421.7" stroke="#4a4a4a" stroke-width="1" fill="none"/><path d="M413.5 52.5 Q416 46.5 418.5 49 Q420 50.5 421 51" stroke="#22a022" stroke-width="1" fill="none"/><line x1="428.7" y1="43.3" x2="428.7" y2="57.5" stroke="#b4b4b4" stroke-width="1"/><path d="M441.3 52.5 L444.8 56" stroke="#d8a820" stroke-width="2"/><circle cx="438.5" cy="49.7" r="3.8" fill="#d6eaf8" stroke="#3d8ad8" stroke-width="1.1"/><path d="M436.5 49.7H440.5" stroke="#2a70c8" stroke-width="1.1"/><path d="M438.5 47.7V51.7" stroke="#2a70c8" stroke-width="1.1"/><path d="M461.1 52.6 L464.6 56.1" stroke="#d8a820" stroke-width="2"/><circle cx="458.3" cy="49.8" r="3.8" fill="#d6eaf8" stroke="#3d8ad8" stroke-width="1.1"/><path d="M456.3 49.8H460.3" stroke="#2a70c8" stroke-width="1.1"/><rect x="473.5" y="45.2" width="5.5" height="5" fill="#3aa83a"/><rect x="479.5" y="45.2" width="5.5" height="5" fill="#3a78d8"/><rect x="473.5" y="50.7" width="5.5" height="5.3" fill="#3a78d8"/><rect x="479.5" y="50.7" width="5.5" height="5.3" fill="#3aa83a"/><path d="M474.5 47H478M480.5 47H484M474.5 53H478M480.5 53H484" stroke="#e8f4e8" stroke-width="0.6"/><line x1="491.5" y1="43.3" x2="491.5" y2="57.5" stroke="#b4b4b4" stroke-width="1"/><rect x="495" y="42" width="17.5" height="16" fill="#f8f8f8"/><path d="M495 58 V42 H512.5" fill="none" stroke="#c4c4c4" stroke-width="0.8"/><path d="M501.5 46.5V57.5M499.5 56H509.5" stroke="#4a4a4a" stroke-width="1" fill="none"/><path d="M504.5 48 L508 50.5 L504.5 53Z" fill="#22a022"/><path d="M521 46.5V57.5M519 56H529" stroke="#4a4a4a" stroke-width="1" fill="none"/><path d="M524.5 46V55" stroke="#4a90d8" stroke-width="1"/><path d="M525 50.5 L528.5 50.5" stroke="#d04020" stroke-width="1"/><line x1="535.8" y1="43.3" x2="535.8" y2="57.5" stroke="#b4b4b4" stroke-width="1"/><path d="M542.5 46H546.8L548.3 47.5V54H542.5Z" fill="#fafafa" stroke="#666" stroke-width="0.8"/><path d="M548 50.5H550.4V53.1H553V55.5H550.4V58.1H548V55.5H545.4V53.1H548Z" fill="#1cb81c" stroke="#0a7a0a" stroke-width="0.6"/><path d="M556 50 H560 L558 52Z" fill="#000"/><circle cx="572.5" cy="50.7" r="5.5" fill="#2a78d0"/><circle cx="572.5" cy="50.7" r="3.8" fill="#f4f8fc"/><path d="M572.5 48V51H574.5" stroke="#555" stroke-width="0.8" fill="none"/><path d="M582 50 H586 L584 52Z" fill="#000"/><rect x="593" y="46" width="11.5" height="9.5" fill="#f8fbff" stroke="#3a78c8" stroke-width="1"/><path d="M594.5 50L597 49L599 49.5L603 48.5" stroke="#c04010" stroke-width="0.7" fill="none"/><path d="M594.5 53.5L597 52.5L599 53L601 51.5L603 53" stroke="#22a022" stroke-width="0.7" fill="none"/><path d="M608 50 H612 L610 52Z" fill="#000"/><rect x="7.3" y="62.6" width="1.6" height="1.4" fill="#a8a8a8"/><rect x="7.3" y="65.95" width="1.6" height="1.4" fill="#a8a8a8"/><rect x="7.3" y="69.3" width="1.6" height="1.4" fill="#a8a8a8"/><rect x="7.3" y="72.65" width="1.6" height="1.4" fill="#a8a8a8"/><rect x="12.3" y="60.5" width="17" height="16" fill="#f8f8f8"/><path d="M12.3 76.5 V60.5 H29.3" fill="none" stroke="#c4c4c4" stroke-width="0.8"/><path d="M17.3 63.3 L22.7 68.6 L20 68.9 L21.8 72.5 L20.6 73.2 L18.8 69.6 L17.3 71.3Z" fill="#3a3a3a"/><path d="M40 64V73.5M35 68.8H45" stroke="#8a8a8a" stroke-width="1"/><line x1="52.3" y1="61.5" x2="52.3" y2="75.5" stroke="#b4b4b4" stroke-width="1"/><path d="M64 65V72" stroke="#8a8a8a" stroke-width="1.2"/><path d="M80 70.5H88.5" stroke="#7a7a7a" stroke-width="1.2"/><path d="M99 74L108.5 64.5" stroke="#8a8a8a" stroke-width="1"/><path d="M118.2 72.5L126.5 64.5M119.7 74.5L128 66.5M118.5 70L124 65" stroke="#6a6a6a" stroke-width="0.8"/><rect x="126.8" y="72.5" width="1.6" height="1.6" fill="#444"/><path d="M137.8 64.5H148.5M137.8 67H148.5M137.8 69.5H148.5M137.8 72H146" stroke="#7a7a7a" stroke-width="0.7" stroke-dasharray="1 0.8"/><path d="M145.5 71.5L147.8 73.5L146 74" stroke="#555" stroke-width="0.6" fill="#555"/><text x="160.2" y="72.8" fill="#5a5a5a" font-size="8.6">A</text><rect x="178" y="65" width="8.5" height="9" fill="none" stroke="#9a9a9a" stroke-width="0.5" stroke-dasharray="1 1"/><text x="179.6" y="72.8" fill="#4a4a4a" font-size="8.8" font-family="Liberation Serif">T</text><path d="M198 65.5L201 66.5L199.5 68ZM203.5 69.5L206.5 71.5L204 72.5Z" fill="#333"/><path d="M200 67.5L205.5 71" stroke="#444" stroke-width="0.9"/><path d="M204.8 66.8 L207.2 69.2 L204.8 71.6 L202.4 69.2Z" fill="#444"/><path d="M210.7 68.9 H214.7 L212.7 70.9Z" fill="#000"/><line x1="219.8" y1="61.5" x2="219.8" y2="76.5" stroke="#b4b4b4" stroke-width="1"/><rect x="222.2" y="62.8" width="1.6" height="1.4" fill="#a8a8a8"/><rect x="222.2" y="66" width="1.6" height="1.4" fill="#a8a8a8"/><rect x="222.2" y="69.2" width="1.6" height="1.4" fill="#a8a8a8"/><rect x="222.2" y="72.4" width="1.6" height="1.4" fill="#a8a8a8"/><text x="229" y="73.2" fill="#4a4a4a" font-size="7" >M1</text><text x="250" y="73.2" fill="#4a4a4a" font-size="7" >M5</text><text x="267.5" y="73.2" fill="#4a4a4a" font-size="7" >M15</text><text x="287.5" y="73.2" fill="#4a4a4a" font-size="7" >M30</text><text x="309" y="73.2" fill="#4a4a4a" font-size="7" >H1</text><rect x="325" y="60.5" width="17.5" height="16" fill="#f8f8f8"/><path d="M325 76.5 V60.5 H342.5" fill="none" stroke="#c4c4c4" stroke-width="0.8"/><text x="328.2" y="73.2" fill="#4a4a4a" font-size="7" >H4</text><text x="349" y="73.2" fill="#4a4a4a" font-size="7" >D1</text><text x="367.5" y="73.2" fill="#4a4a4a" font-size="7" >W1</text><text x="386.7" y="73.2" fill="#4a4a4a" font-size="7" >MN</text><circle cx="922.3" cy="49.3" r="3" fill="#f4f8fc" stroke="#2a6ad0" stroke-width="1.5"/><path d="M920.2 51.4L916.5 55" stroke="#2a6ad0" stroke-width="2" stroke-linecap="round"/><ellipse cx="937.5" cy="52.5" rx="4.8" ry="3.6" fill="#f4f4f4" stroke="#c4c4c4" stroke-width="0.8"/><path d="M935 55.5L934 58L938 55.8Z" fill="#e8e8e8" stroke="#c4c4c4" stroke-width="0.6"/><circle cx="943.6" cy="49.2" r="5.6" fill="#e0301c" stroke="#c02010" stroke-width="0.6"/><text x="941.6" y="52.5" fill="#fff" font-size="8.5" font-weight="bold">1</text></svg><svg style="position:absolute;left:0;top:0" width="140" height="420" viewBox="0 0 140 420"><path d="M18.3 357.5V403M18.3 365H25M21 377.6H26M21 390.4H26M21 403H26" stroke="#a0a0a0" stroke-width="0.7" stroke-dasharray="1 1" fill="none"/><rect x="15.3" y="375" width="5.2" height="5.2" fill="#fff" stroke="#a0a8b8" stroke-width="0.6"/><path d="M16.4 377.6H19.4M17.9 376.1V379.1" stroke="#3a5a8a" stroke-width="0.6"/><rect x="15.3" y="387.8" width="5.2" height="5.2" fill="#fff" stroke="#a0a8b8" stroke-width="0.6"/><path d="M16.4 390.4H19.4M17.9 388.9V391.9" stroke="#3a5a8a" stroke-width="0.6"/><rect x="15.3" y="400.4" width="5.2" height="5.2" fill="#fff" stroke="#a0a8b8" stroke-width="0.6"/><path d="M16.4 403H19.4M17.9 401.5V404.5" stroke="#3a5a8a" stroke-width="0.6"/><rect x="13.2" y="347.5" width="6" height="5.5" fill="#fff" stroke="#4a88d8" stroke-width="0.9"/><rect x="16.5" y="351" width="6.3" height="5.8" fill="#fff" stroke="#4a88d8" stroke-width="0.9"/><path d="M18 353.5H21.5M18 355H21.5" stroke="#8ab4e8" stroke-width="0.6"/><rect x="28.5" y="358.7" width="8.5" height="10" rx="1" fill="#e8c050" stroke="#a88020" stroke-width="0.7"/><path d="M30 360.5H35.5V363H30Z" fill="#f8e090"/><circle cx="27.8" cy="367" r="2.3" fill="#40b040" stroke="#207a20" stroke-width="0.5"/><rect x="27.5" y="371.8" width="9" height="9.5" rx="1.2" fill="#f4d860" stroke="#b09030" stroke-width="0.8"/><text x="30" y="379.6" fill="#7a5a10" font-size="7.5" font-style="italic" font-family="Liberation Serif">f</text><path d="M27 387.3 Q31.5 383 37.5 385.5 L36 389.3 Q31 390.3 27 387.3Z" fill="#5aa0d8" stroke="#3a70a8" stroke-width="0.6"/><path d="M30 389.5 L34 393" stroke="#b09030" stroke-width="1.6"/><circle cx="35" cy="393.5" r="1.8" fill="#f4d860" stroke="#b09030" stroke-width="0.6"/><path d="M28 397.8H35.5V405.5H29.5Q28 405.5 28 404Z" fill="#f4d860" stroke="#b09030" stroke-width="0.8"/><path d="M33 404.5L35.5 407L37.5 404.5L35 402Z" fill="#f4d860" stroke="#b09030" stroke-width="0.6"/></svg><svg style="position:absolute;left:0;top:0" width="960" height="710" viewBox="0 0 960 710"><defs><clipPath id="c1"><rect x="148.5" y="104" width="361" height="202"/></clipPath><clipPath id="c3"><rect x="148" y="351" width="362" height="202"/></clipPath><clipPath id="c4"><rect x="554.7" y="352" width="362" height="201"/></clipPath></defs><rect x="145.5" y="102.5" width="393.5" height="218" fill="#000"/><path d="M145 320.5V102H539" fill="none" stroke="#707070" stroke-width="1"/><path d="M145.5 321H539.5V102.5" fill="none" stroke="#f4f8fc" stroke-width="1"/><line x1="171.6" y1="104.2" x2="171.6" y2="306.1" stroke="#95a0b0" stroke-width="1" stroke-dasharray="2.4 2.1"/><line x1="194.17" y1="104.2" x2="194.17" y2="306.1" stroke="#95a0b0" stroke-width="1" stroke-dasharray="2.4 2.1"/><line x1="216.74" y1="104.2" x2="216.74" y2="306.1" stroke="#95a0b0" stroke-width="1" stroke-dasharray="2.4 2.1"/><line x1="239.31" y1="104.2" x2="239.31" y2="306.1" stroke="#95a0b0" stroke-width="1" stroke-dasharray="2.4 2.1"/><line x1="261.88" y1="104.2" x2="261.88" y2="306.1" stroke="#95a0b0" stroke-width="1" stroke-dasharray="2.4 2.1"/><line x1="284.45" y1="104.2" x2="284.45" y2="306.1" stroke="#95a0b0" stroke-width="1" stroke-dasharray="2.4 2.1"/><line x1="307.02" y1="104.2" x2="307.02" y2="306.1" stroke="#95a0b0" stroke-width="1" stroke-dasharray="2.4 2.1"/><line x1="329.59" y1="104.2" x2="329.59" y2="306.1" stroke="#95a0b0" stroke-width="1" stroke-dasharray="2.4 2.1"/><line x1="352.16" y1="104.2" x2="352.16" y2="306.1" stroke="#95a0b0" stroke-width="1" stroke-dasharray="2.4 2.1"/><line x1="374.73" y1="104.2" x2="374.73" y2="306.1" stroke="#95a0b0" stroke-width="1" stroke-dasharray="2.4 2.1"/><line x1="397.3" y1="104.2" x2="397.3" y2="306.1" stroke="#95a0b0" stroke-width="1" stroke-dasharray="2.4 2.1"/><line x1="419.87" y1="104.2" x2="419.87" y2="306.1" stroke="#95a0b0" stroke-width="1" stroke-dasharray="2.4 2.1"/><line x1="442.44" y1="104.2" x2="442.44" y2="306.1" stroke="#95a0b0" stroke-width="1" stroke-dasharray="2.4 2.1"/><line x1="465.01" y1="104.2" x2="465.01" y2="306.1" stroke="#95a0b0" stroke-width="1" stroke-dasharray="2.4 2.1"/><line x1="487.58" y1="104.2" x2="487.58" y2="306.1" stroke="#95a0b0" stroke-width="1" stroke-dasharray="2.4 2.1"/><line x1="148.5" y1="105.9" x2="509.5" y2="105.9" stroke="#95a0b0" stroke-width="1" stroke-dasharray="2.4 2.1"/><line x1="148.5" y1="133.25" x2="509.5" y2="133.25" stroke="#95a0b0" stroke-width="1" stroke-dasharray="2.4 2.1"/><line x1="148.5" y1="161.1" x2="509.5" y2="161.1" stroke="#95a0b0" stroke-width="1" stroke-dasharray="2.4 2.1"/><line x1="148.5" y1="188.95" x2="509.5" y2="188.95" stroke="#95a0b0" stroke-width="1" stroke-dasharray="2.4 2.1"/><line x1="148.5" y1="216.8" x2="509.5" y2="216.8" stroke="#95a0b0" stroke-width="1" stroke-dasharray="2.4 2.1"/><line x1="148.5" y1="244.65" x2="509.5" y2="244.65" stroke="#95a0b0" stroke-width="1" stroke-dasharray="2.4 2.1"/><line x1="148.5" y1="272.5" x2="509.5" y2="272.5" stroke="#95a0b0" stroke-width="1" stroke-dasharray="2.4 2.1"/><line x1="148.5" y1="300.35" x2="509.5" y2="300.35" stroke="#95a0b0" stroke-width="1" stroke-dasharray="2.4 2.1"/><rect x="148" y="104.2" width="361.5" height="201.9" fill="none" stroke="#a0a0a0" stroke-width="1"/><line x1="148" y1="214.5" x2="509.5" y2="214.5" stroke="#9a9a9a" stroke-width="1"/><polyline points="151.7,251 163.3,253 183.5,239.5 208.6,216.4 231.7,200 233.6,197.3 249,190.2 260.6,188.6 279.9,195.4 285.7,194.4 305,182.9 325,168.4 336.6,163.6 344.3,162 359.7,171.3 371.2,186.7 377.7,195 396,211 405.2,220.2 423.5,245.4 430.4,247.2 437.3,246.6 444.2,250.5 453.3,253.4 471.7,268.3 478.5,268.8 492.3,261" fill="none" stroke="#d01010" stroke-width="1"/><g clip-path="url(#c1)"><line x1="148.7" y1="205.8" x2="148.7" y2="281" stroke="#00ff00" stroke-width="0.8"/><rect x="147.2" y="211.6" width="3" height="61.6" fill="#fff" stroke="#00ff00" stroke-width="0.8"/><line x1="154.34" y1="263.6" x2="154.34" y2="290.6" stroke="#00ff00" stroke-width="0.8"/><rect x="152.84" y="266.5" width="3" height="6.7" fill="#000" stroke="#00ff00" stroke-width="0.8"/><line x1="159.99" y1="258.8" x2="159.99" y2="269.4" stroke="#00ff00" stroke-width="0.8"/><rect x="158.49" y="260.7" width="3" height="6.7" fill="#000" stroke="#00ff00" stroke-width="0.8"/><line x1="165.63" y1="252" x2="165.63" y2="263.6" stroke="#00ff00" stroke-width="0.8"/><rect x="164.13" y="253.6" width="3" height="6.5" fill="#000" stroke="#00ff00" stroke-width="0.8"/><line x1="171.28" y1="215.4" x2="171.28" y2="258.8" stroke="#00ff00" stroke-width="0.8"/><rect x="169.78" y="218.3" width="3" height="34.7" fill="#000" stroke="#00ff00" stroke-width="0.8"/><line x1="176.92" y1="197.3" x2="176.92" y2="228.9" stroke="#00ff00" stroke-width="0.8"/><rect x="175.42" y="202.9" width="3" height="15.4" fill="#000" stroke="#00ff00" stroke-width="0.8"/><line x1="182.57" y1="196.3" x2="182.57" y2="231.8" stroke="#00ff00" stroke-width="0.8"/><rect x="181.07" y="197.3" width="3" height="5.7" fill="#000" stroke="#00ff00" stroke-width="0.8"/><line x1="188.21" y1="172.3" x2="188.21" y2="200" stroke="#00ff00" stroke-width="0.8"/><rect x="186.71" y="175.1" width="3" height="23.2" fill="#000" stroke="#00ff00" stroke-width="0.8"/><line x1="193.86" y1="166.5" x2="193.86" y2="185.7" stroke="#00ff00" stroke-width="0.8"/><rect x="192.36" y="168.4" width="3" height="12.1" fill="#000" stroke="#00ff00" stroke-width="0.8"/><line x1="199.5" y1="153" x2="199.5" y2="170.3" stroke="#00ff00" stroke-width="0.8"/><rect x="198" y="163.2" width="3" height="6.2" fill="#000" stroke="#00ff00" stroke-width="0.8"/><line x1="205.15" y1="154.9" x2="205.15" y2="183.8" stroke="#00ff00" stroke-width="0.8"/><rect x="203.65" y="163.2" width="3" height="9.2" fill="#fff" stroke="#00ff00" stroke-width="0.8"/><line x1="210.79" y1="161.7" x2="210.79" y2="195.4" stroke="#00ff00" stroke-width="0.8"/><rect x="209.29" y="172.4" width="3" height="21" fill="#fff" stroke="#00ff00" stroke-width="0.8"/><line x1="216.44" y1="182.9" x2="216.44" y2="215.4" stroke="#00ff00" stroke-width="0.8"/><rect x="214.94" y="184.4" width="3" height="9" fill="#000" stroke="#00ff00" stroke-width="0.8"/><line x1="222.08" y1="179" x2="222.08" y2="190.6" stroke="#00ff00" stroke-width="0.8"/><rect x="220.58" y="184.2" width="3" height="4" fill="#fff" stroke="#00ff00" stroke-width="0.8"/><line x1="227.73" y1="183.8" x2="227.73" y2="200" stroke="#00ff00" stroke-width="0.8"/><rect x="226.23" y="188.6" width="3" height="7.2" fill="#fff" stroke="#00ff00" stroke-width="0.8"/><line x1="233.38" y1="192.5" x2="233.38" y2="211.6" stroke="#00ff00" stroke-width="0.8"/><rect x="231.88" y="194.8" width="3" height="8.1" fill="#fff" stroke="#00ff00" stroke-width="0.8"/><line x1="239.02" y1="190" x2="239.02" y2="219.5" stroke="#00ff00" stroke-width="0.8"/><rect x="237.52" y="193.5" width="3" height="24.8" fill="#fff" stroke="#00ff00" stroke-width="0.8"/><line x1="244.66" y1="180" x2="244.66" y2="220.2" stroke="#00ff00" stroke-width="0.8"/><rect x="243.16" y="193.4" width="3" height="24.9" fill="#000" stroke="#00ff00" stroke-width="0.8"/><line x1="250.31" y1="182.9" x2="250.31" y2="206.7" stroke="#00ff00" stroke-width="0.8"/><rect x="248.81" y="192" width="3" height="11.9" fill="#fff" stroke="#00ff00" stroke-width="0.8"/><line x1="255.95" y1="180" x2="255.95" y2="205.5" stroke="#00ff00" stroke-width="0.8"/><rect x="254.45" y="182.9" width="3" height="21.9" fill="#000" stroke="#00ff00" stroke-width="0.8"/><line x1="261.6" y1="180" x2="261.6" y2="200" stroke="#00ff00" stroke-width="0.8"/><rect x="260.1" y="182.5" width="3" height="13.8" fill="#fff" stroke="#00ff00" stroke-width="0.8"/><line x1="267.25" y1="190.6" x2="267.25" y2="204" stroke="#00ff00" stroke-width="0.8"/><rect x="265.75" y="196.3" width="3" height="6.6" fill="#fff" stroke="#00ff00" stroke-width="0.8"/><line x1="272.89" y1="194" x2="272.89" y2="221.2" stroke="#00ff00" stroke-width="0.8"/><rect x="271.39" y="201.5" width="3" height="1.7" fill="#000" stroke="#00ff00" stroke-width="0.8"/><line x1="278.53" y1="196" x2="278.53" y2="214.5" stroke="#00ff00" stroke-width="0.8"/><rect x="277.03" y="200" width="3" height="7.7" fill="#fff" stroke="#00ff00" stroke-width="0.8"/><line x1="284.18" y1="168.4" x2="284.18" y2="220.2" stroke="#00ff00" stroke-width="0.8"/><rect x="282.68" y="183.2" width="3" height="25.5" fill="#000" stroke="#00ff00" stroke-width="0.8"/><line x1="289.82" y1="133" x2="289.82" y2="210.6" stroke="#00ff00" stroke-width="0.8"/><rect x="288.32" y="143.4" width="3" height="39.8" fill="#000" stroke="#00ff00" stroke-width="0.8"/><line x1="295.47" y1="124" x2="295.47" y2="146.2" stroke="#00ff00" stroke-width="0.8"/><rect x="293.97" y="125.6" width="3" height="16.8" fill="#000" stroke="#00ff00" stroke-width="0.8"/><line x1="301.12" y1="116.4" x2="301.12" y2="146.2" stroke="#00ff00" stroke-width="0.8"/><rect x="299.62" y="125.6" width="3" height="11.6" fill="#fff" stroke="#00ff00" stroke-width="0.8"/><line x1="306.76" y1="130.8" x2="306.76" y2="160.7" stroke="#00ff00" stroke-width="0.8"/><rect x="305.26" y="137.2" width="3" height="17.7" fill="#fff" stroke="#00ff00" stroke-width="0.8"/><line x1="312.4" y1="132.8" x2="312.4" y2="157.8" stroke="#00ff00" stroke-width="0.8"/><rect x="310.9" y="147.2" width="3" height="7.7" fill="#000" stroke="#00ff00" stroke-width="0.8"/><line x1="318.05" y1="143.4" x2="318.05" y2="170.3" stroke="#00ff00" stroke-width="0.8"/><rect x="316.55" y="147.2" width="3" height="5.4" fill="#fff" stroke="#00ff00" stroke-width="0.8"/><line x1="323.69" y1="140" x2="323.69" y2="158.8" stroke="#00ff00" stroke-width="0.8"/><rect x="322.19" y="150.5" width="3" height="1.9" fill="#000" stroke="#00ff00" stroke-width="0.8"/><line x1="329.34" y1="143.4" x2="329.34" y2="153" stroke="#00ff00" stroke-width="0.8"/><rect x="327.84" y="147.2" width="3" height="2.9" fill="#000" stroke="#00ff00" stroke-width="0.8"/><line x1="334.99" y1="142.4" x2="334.99" y2="155.9" stroke="#00ff00" stroke-width="0.8"/><rect x="333.49" y="147.2" width="3" height="6.8" fill="#fff" stroke="#00ff00" stroke-width="0.8"/><line x1="340.63" y1="150.5" x2="340.63" y2="179" stroke="#00ff00" stroke-width="0.8"/><rect x="339.13" y="153.6" width="3" height="24.4" fill="#fff" stroke="#00ff00" stroke-width="0.8"/><line x1="346.27" y1="173.8" x2="346.27" y2="198.3" stroke="#00ff00" stroke-width="0.8"/><rect x="344.77" y="178" width="3" height="12.6" fill="#fff" stroke="#00ff00" stroke-width="0.8"/><line x1="351.92" y1="180.9" x2="351.92" y2="258" stroke="#00ff00" stroke-width="0.8"/><rect x="350.42" y="189.6" width="3" height="63.8" fill="#fff" stroke="#00ff00" stroke-width="0.8"/><line x1="357.56" y1="250" x2="357.56" y2="264.9" stroke="#00ff00" stroke-width="0.8"/><rect x="356.06" y="254.1" width="3" height="5.5" fill="#fff" stroke="#00ff00" stroke-width="0.8"/><line x1="363.21" y1="244.3" x2="363.21" y2="260.3" stroke="#00ff00" stroke-width="0.8"/><rect x="361.71" y="245.9" width="3" height="5.9" fill="#000" stroke="#00ff00" stroke-width="0.8"/><line x1="368.85" y1="243.1" x2="368.85" y2="263.7" stroke="#00ff00" stroke-width="0.8"/><rect x="367.35" y="245" width="3" height="15.3" fill="#fff" stroke="#00ff00" stroke-width="0.8"/><line x1="374.5" y1="228.2" x2="374.5" y2="270.6" stroke="#00ff00" stroke-width="0.8"/><rect x="373" y="231.2" width="3" height="29.1" fill="#000" stroke="#00ff00" stroke-width="0.8"/><line x1="380.14" y1="219" x2="380.14" y2="236.2" stroke="#00ff00" stroke-width="0.8"/><rect x="378.64" y="231.2" width="3" height="4.6" fill="#fff" stroke="#00ff00" stroke-width="0.8"/><line x1="385.79" y1="199.6" x2="385.79" y2="237.4" stroke="#00ff00" stroke-width="0.8"/><rect x="384.29" y="224.3" width="3" height="12.4" fill="#000" stroke="#00ff00" stroke-width="0.8"/><line x1="391.43" y1="208.7" x2="391.43" y2="225.9" stroke="#00ff00" stroke-width="0.8"/><rect x="389.93" y="212.9" width="3" height="11.9" fill="#000" stroke="#00ff00" stroke-width="0.8"/><line x1="397.08" y1="208.7" x2="397.08" y2="224.8" stroke="#00ff00" stroke-width="0.8"/><rect x="395.58" y="212.2" width="3" height="9.8" fill="#fff" stroke="#00ff00" stroke-width="0.8"/><line x1="402.72" y1="219" x2="402.72" y2="242.7" stroke="#00ff00" stroke-width="0.8"/><rect x="401.22" y="221.4" width="3" height="16.7" fill="#fff" stroke="#00ff00" stroke-width="0.8"/><line x1="408.37" y1="237.4" x2="408.37" y2="280.9" stroke="#00ff00" stroke-width="0.8"/><rect x="406.87" y="238.1" width="3" height="41.7" fill="#fff" stroke="#00ff00" stroke-width="0.8"/><line x1="414.01" y1="248.9" x2="414.01" y2="284.4" stroke="#00ff00" stroke-width="0.8"/><rect x="412.51" y="255" width="3" height="24.8" fill="#000" stroke="#00ff00" stroke-width="0.8"/><line x1="419.66" y1="243.1" x2="419.66" y2="283.2" stroke="#00ff00" stroke-width="0.8"/><rect x="418.16" y="255" width="3" height="8.3" fill="#fff" stroke="#00ff00" stroke-width="0.8"/><line x1="425.3" y1="256.9" x2="425.3" y2="272.5" stroke="#00ff00" stroke-width="0.8"/><rect x="423.8" y="263.7" width="3" height="4.6" fill="#fff" stroke="#00ff00" stroke-width="0.8"/><line x1="430.95" y1="260.3" x2="430.95" y2="271.8" stroke="#00ff00" stroke-width="0.8"/><rect x="429.45" y="261" width="3" height="8.5" fill="#000" stroke="#00ff00" stroke-width="0.8"/><line x1="436.59" y1="253.4" x2="436.59" y2="263.7" stroke="#00ff00" stroke-width="0.8"/><rect x="435.09" y="258.7" width="3" height="2.8" fill="#fff" stroke="#00ff00" stroke-width="0.8"/><line x1="442.24" y1="256.9" x2="442.24" y2="299.3" stroke="#00ff00" stroke-width="0.8"/><rect x="440.74" y="258.7" width="3" height="28" fill="#fff" stroke="#00ff00" stroke-width="0.8"/><line x1="447.88" y1="261" x2="447.88" y2="292.4" stroke="#00ff00" stroke-width="0.8"/><rect x="446.38" y="286.2" width="3" height="0.8" fill="#000" stroke="#00ff00" stroke-width="0.8"/><line x1="453.53" y1="269.5" x2="453.53" y2="293.1" stroke="#00ff00" stroke-width="0.8"/><rect x="452.03" y="286.7" width="3" height="3.4" fill="#fff" stroke="#00ff00" stroke-width="0.8"/><line x1="459.17" y1="276.3" x2="459.17" y2="293.1" stroke="#00ff00" stroke-width="0.8"/><rect x="457.67" y="279.3" width="3" height="10.8" fill="#000" stroke="#00ff00" stroke-width="0.8"/><line x1="464.82" y1="270.6" x2="464.82" y2="285.5" stroke="#00ff00" stroke-width="0.8"/><rect x="463.32" y="279.3" width="3" height="3.9" fill="#fff" stroke="#00ff00" stroke-width="0.8"/><line x1="470.46" y1="270.2" x2="470.46" y2="291.2" stroke="#00ff00" stroke-width="0.8"/><rect x="468.96" y="280.2" width="3" height="3" fill="#000" stroke="#00ff00" stroke-width="0.8"/><line x1="476.11" y1="234" x2="476.11" y2="282" stroke="#00ff00" stroke-width="0.8"/><rect x="474.61" y="239.7" width="3" height="41.9" fill="#000" stroke="#00ff00" stroke-width="0.8"/><line x1="481.75" y1="215.6" x2="481.75" y2="243.1" stroke="#00ff00" stroke-width="0.8"/><rect x="480.25" y="219" width="3" height="20" fill="#000" stroke="#00ff00" stroke-width="0.8"/><line x1="487.4" y1="201.9" x2="487.4" y2="230.5" stroke="#00ff00" stroke-width="0.8"/><rect x="485.9" y="215.2" width="3" height="4.5" fill="#000" stroke="#00ff00" stroke-width="0.8"/><line x1="493.04" y1="204.6" x2="493.04" y2="217.5" stroke="#00ff00" stroke-width="0.8"/><rect x="491.54" y="211.5" width="3" height="2.3" fill="#fff" stroke="#00ff00" stroke-width="0.8"/></g><line x1="508" y1="105.4" x2="511" y2="105.4" stroke="#a0a0a0" stroke-width="1"/><text transform="translate(513 108) scale(0.9 1)" fill="#fff" font-size="7.3" text-anchor="start" >1.2160</text><line x1="508" y1="133.25" x2="511" y2="133.25" stroke="#a0a0a0" stroke-width="1"/><text transform="translate(513 135.85) scale(0.9 1)" fill="#fff" font-size="7.3" text-anchor="start" >1.2135</text><line x1="508" y1="161.1" x2="511" y2="161.1" stroke="#a0a0a0" stroke-width="1"/><text transform="translate(513 163.7) scale(0.9 1)" fill="#fff" font-size="7.3" text-anchor="start" >1.2110</text><line x1="508" y1="188.95" x2="511" y2="188.95" stroke="#a0a0a0" stroke-width="1"/><text transform="translate(513 191.55) scale(0.9 1)" fill="#fff" font-size="7.3" text-anchor="start" >1.2085</text><line x1="508" y1="244.65" x2="511" y2="244.65" stroke="#a0a0a0" stroke-width="1"/><text transform="translate(513 247.25) scale(0.9 1)" fill="#fff" font-size="7.3" text-anchor="start" >1.2035</text><line x1="508" y1="272.5" x2="511" y2="272.5" stroke="#a0a0a0" stroke-width="1"/><text transform="translate(513 275.1) scale(0.9 1)" fill="#fff" font-size="7.3" text-anchor="start" >1.2010</text><line x1="508" y1="300.35" x2="511" y2="300.35" stroke="#a0a0a0" stroke-width="1"/><text transform="translate(513 302.95) scale(0.9 1)" fill="#fff" font-size="7.3" text-anchor="start" >1.1985</text><rect x="510.3" y="210.6" width="25.6" height="7.8" fill="#fff"/><text transform="translate(513 217.1) scale(0.9 1)" fill="#000" font-size="7.3" text-anchor="start" >1.2063</text><line x1="148" y1="305.1" x2="148" y2="308.1" stroke="#a0a0a0" stroke-width="1"/><text transform="translate(148 314.7) scale(0.9 1)" fill="#fff" font-size="7.3" text-anchor="start" >22 Apr 2021</text><line x1="193.7" y1="305.1" x2="193.7" y2="308.1" stroke="#a0a0a0" stroke-width="1"/><text transform="translate(193.7 314.7) scale(0.9 1)" fill="#fff" font-size="7.3" text-anchor="start" >25 Apr 23:00</text><line x1="238.9" y1="305.1" x2="238.9" y2="308.1" stroke="#a0a0a0" stroke-width="1"/><text transform="translate(238.9 314.7) scale(0.9 1)" fill="#fff" font-size="7.3" text-anchor="start" >27 Apr 07:00</text><line x1="283.9" y1="305.1" x2="283.9" y2="308.1" stroke="#a0a0a0" stroke-width="1"/><text transform="translate(283.9 314.7) scale(0.9 1)" fill="#fff" font-size="7.3" text-anchor="start" >28 Apr 15:00</text><line x1="328.9" y1="305.1" x2="328.9" y2="308.1" stroke="#a0a0a0" stroke-width="1"/><text transform="translate(328.9 314.7) scale(0.9 1)" fill="#fff" font-size="7.3" text-anchor="start" >29 Apr 23:00</text><line x1="373.9" y1="305.1" x2="373.9" y2="308.1" stroke="#a0a0a0" stroke-width="1"/><text transform="translate(373.9 314.7) scale(0.9 1)" fill="#fff" font-size="7.3" text-anchor="start" >3 May 07:00</text><line x1="418.9" y1="305.1" x2="418.9" y2="308.1" stroke="#a0a0a0" stroke-width="1"/><text transform="translate(418.9 314.7) scale(0.9 1)" fill="#fff" font-size="7.3" text-anchor="start" >4 May 15:00</text><line x1="463.9" y1="305.1" x2="463.9" y2="308.1" stroke="#a0a0a0" stroke-width="1"/><text transform="translate(463.9 314.7) scale(0.9 1)" fill="#fff" font-size="7.3" text-anchor="start" >5 May 23:00</text><text transform="translate(152 113) scale(0.9 1)" fill="#fff" font-size="7.3" text-anchor="start" >EURUSD,H4&#160;&#160;1.2065 1.2071 1.2060 1.2063</text><rect x="551.5" y="102.5" width="393.5" height="218" fill="#000"/><path d="M551 320.5V102H945" fill="none" stroke="#707070" stroke-width="1"/><path d="M551.5 321H945.5V102.5" fill="none" stroke="#f4f8fc" stroke-width="1"/><line x1="578" y1="104.2" x2="578" y2="306.1" stroke="#95a0b0" stroke-width="1" stroke-dasharray="2.4 2.1"/><line x1="600.55" y1="104.2" x2="600.55" y2="306.1" stroke="#95a0b0" stroke-width="1" stroke-dasharray="2.4 2.1"/><line x1="623.1" y1="104.2" x2="623.1" y2="306.1" stroke="#95a0b0" stroke-width="1" stroke-dasharray="2.4 2.1"/><line x1="645.65" y1="104.2" x2="645.65" y2="306.1" stroke="#95a0b0" stroke-width="1" stroke-dasharray="2.4 2.1"/><line x1="668.2" y1="104.2" x2="668.2" y2="306.1" stroke="#95a0b0" stroke-width="1" stroke-dasharray="2.4 2.1"/><line x1="690.75" y1="104.2" x2="690.75" y2="306.1" stroke="#95a0b0" stroke-width="1" stroke-dasharray="2.4 2.1"/><line x1="713.3" y1="104.2" x2="713.3" y2="306.1" stroke="#95a0b0" stroke-width="1" stroke-dasharray="2.4 2.1"/><line x1="735.85" y1="104.2" x2="735.85" y2="306.1" stroke="#95a0b0" stroke-width="1" stroke-dasharray="2.4 2.1"/><line x1="758.4" y1="104.2" x2="758.4" y2="306.1" stroke="#95a0b0" stroke-width="1" stroke-dasharray="2.4 2.1"/><line x1="780.95" y1="104.2" x2="780.95" y2="306.1" stroke="#95a0b0" stroke-width="1" stroke-dasharray="2.4 2.1"/><line x1="803.5" y1="104.2" x2="803.5" y2="306.1" stroke="#95a0b0" stroke-width="1" stroke-dasharray="2.4 2.1"/><line x1="826.05" y1="104.2" x2="826.05" y2="306.1" stroke="#95a0b0" stroke-width="1" stroke-dasharray="2.4 2.1"/><line x1="848.6" y1="104.2" x2="848.6" y2="306.1" stroke="#95a0b0" stroke-width="1" stroke-dasharray="2.4 2.1"/><line x1="871.15" y1="104.2" x2="871.15" y2="306.1" stroke="#95a0b0" stroke-width="1" stroke-dasharray="2.4 2.1"/><line x1="893.7" y1="104.2" x2="893.7" y2="306.1" stroke="#95a0b0" stroke-width="1" stroke-dasharray="2.4 2.1"/><line x1="554.8" y1="108.3" x2="916.8" y2="108.3" stroke="#95a0b0" stroke-width="1" stroke-dasharray="2.4 2.1"/><line x1="554.8" y1="132.69" x2="916.8" y2="132.69" stroke="#95a0b0" stroke-width="1" stroke-dasharray="2.4 2.1"/><line x1="554.8" y1="157.08" x2="916.8" y2="157.08" stroke="#95a0b0" stroke-width="1" stroke-dasharray="2.4 2.1"/><line x1="554.8" y1="181.47" x2="916.8" y2="181.47" stroke="#95a0b0" stroke-width="1" stroke-dasharray="2.4 2.1"/><line x1="554.8" y1="205.86" x2="916.8" y2="205.86" stroke="#95a0b0" stroke-width="1" stroke-dasharray="2.4 2.1"/><line x1="554.8" y1="230.25" x2="916.8" y2="230.25" stroke="#95a0b0" stroke-width="1" stroke-dasharray="2.4 2.1"/><line x1="554.8" y1="254.64" x2="916.8" y2="254.64" stroke="#95a0b0" stroke-width="1" stroke-dasharray="2.4 2.1"/><line x1="554.8" y1="279.03" x2="916.8" y2="279.03" stroke="#95a0b0" stroke-width="1" stroke-dasharray="2.4 2.1"/><line x1="554.8" y1="303.42" x2="916.8" y2="303.42" stroke="#95a0b0" stroke-width="1" stroke-dasharray="2.4 2.1"/><rect x="554.3" y="104.2" width="362.5" height="201.9" fill="none" stroke="#a0a0a0" stroke-width="1"/><line x1="554.3" y1="181.5" x2="916.8" y2="181.5" stroke="#9a9a9a" stroke-width="1"/><line x1="555.5" y1="254.05" x2="555.5" y2="264.58" stroke="#00ff00" stroke-width="1.0"/><line x1="554.4" y1="260.41" x2="555.5" y2="260.41" stroke="#00ff00" stroke-width="0.7"/><line x1="555.5" y1="260.64" x2="556.6" y2="260.64" stroke="#00ff00" stroke-width="0.7"/><line x1="558.01" y1="241.96" x2="558.01" y2="260.81" stroke="#10d010" stroke-width="1.0"/><line x1="556.91" y1="246.85" x2="558.01" y2="246.85" stroke="#10d010" stroke-width="0.7"/><line x1="558.01" y1="246.38" x2="559.11" y2="246.38" stroke="#10d010" stroke-width="0.7"/><line x1="560.5" y1="243.06" x2="560.5" y2="267.69" stroke="#00ff00" stroke-width="1.0"/><line x1="559.4" y1="254.79" x2="560.5" y2="254.79" stroke="#00ff00" stroke-width="0.7"/><line x1="560.5" y1="258.8" x2="561.6" y2="258.8" stroke="#00ff00" stroke-width="0.7"/><line x1="563.5" y1="247.01" x2="563.5" y2="263.74" stroke="#00ff00" stroke-width="1.0"/><line x1="562.4" y1="255.76" x2="563.5" y2="255.76" stroke="#00ff00" stroke-width="0.7"/><line x1="563.5" y1="259.41" x2="564.6" y2="259.41" stroke="#00ff00" stroke-width="0.7"/><line x1="566.45" y1="247.85" x2="566.45" y2="263.51" stroke="#10d010" stroke-width="1.0"/><line x1="565.35" y1="257.11" x2="566.45" y2="257.11" stroke="#10d010" stroke-width="0.7"/><line x1="566.45" y1="252.57" x2="567.55" y2="252.57" stroke="#10d010" stroke-width="0.7"/><line x1="569.5" y1="257.24" x2="569.5" y2="268.77" stroke="#00ff00" stroke-width="1.0"/><line x1="568.4" y1="265.53" x2="569.5" y2="265.53" stroke="#00ff00" stroke-width="0.7"/><line x1="569.5" y1="267.37" x2="570.6" y2="267.37" stroke="#00ff00" stroke-width="0.7"/><line x1="572.5" y1="259.4" x2="572.5" y2="268.42" stroke="#00ff00" stroke-width="1.0"/><line x1="571.4" y1="266.62" x2="572.5" y2="266.62" stroke="#00ff00" stroke-width="0.7"/><line x1="572.5" y1="263.41" x2="573.6" y2="263.41" stroke="#00ff00" stroke-width="0.7"/><line x1="574.89" y1="262.57" x2="574.89" y2="274.94" stroke="#10d010" stroke-width="1.0"/><line x1="573.79" y1="264.25" x2="574.89" y2="264.25" stroke="#10d010" stroke-width="0.7"/><line x1="574.89" y1="265.25" x2="575.99" y2="265.25" stroke="#10d010" stroke-width="0.7"/><line x1="577.5" y1="268.52" x2="577.5" y2="294.85" stroke="#00ff00" stroke-width="1.0"/><line x1="576.4" y1="276.45" x2="577.5" y2="276.45" stroke="#00ff00" stroke-width="0.7"/><line x1="577.5" y1="281.88" x2="578.6" y2="281.88" stroke="#00ff00" stroke-width="0.7"/><line x1="580.5" y1="266.39" x2="580.5" y2="282.66" stroke="#00ff00" stroke-width="1.0"/><line x1="579.4" y1="275.89" x2="580.5" y2="275.89" stroke="#00ff00" stroke-width="0.7"/><line x1="580.5" y1="281.1" x2="581.6" y2="281.1" stroke="#00ff00" stroke-width="0.7"/><line x1="583.33" y1="265.22" x2="583.33" y2="275.57" stroke="#10d010" stroke-width="1.0"/><line x1="582.23" y1="275.48" x2="583.33" y2="275.48" stroke="#10d010" stroke-width="0.7"/><line x1="583.33" y1="272.17" x2="584.43" y2="272.17" stroke="#10d010" stroke-width="0.7"/><line x1="586.5" y1="270.9" x2="586.5" y2="280.23" stroke="#00ff00" stroke-width="1.0"/><line x1="585.4" y1="279.34" x2="586.5" y2="279.34" stroke="#00ff00" stroke-width="0.7"/><line x1="586.5" y1="276.21" x2="587.6" y2="276.21" stroke="#00ff00" stroke-width="0.7"/><line x1="588.5" y1="275.2" x2="588.5" y2="287.14" stroke="#00ff00" stroke-width="1.0"/><line x1="587.4" y1="282.05" x2="588.5" y2="282.05" stroke="#00ff00" stroke-width="0.7"/><line x1="588.5" y1="278.6" x2="589.6" y2="278.6" stroke="#00ff00" stroke-width="0.7"/><line x1="591.76" y1="279.55" x2="591.76" y2="290.52" stroke="#10d010" stroke-width="1.0"/><line x1="590.66" y1="280.52" x2="591.76" y2="280.52" stroke="#10d010" stroke-width="0.7"/><line x1="591.76" y1="288.33" x2="592.86" y2="288.33" stroke="#10d010" stroke-width="0.7"/><line x1="594.5" y1="261.54" x2="594.5" y2="298.05" stroke="#00ff00" stroke-width="1.0"/><line x1="593.4" y1="289.61" x2="594.5" y2="289.61" stroke="#00ff00" stroke-width="0.7"/><line x1="594.5" y1="293.4" x2="595.6" y2="293.4" stroke="#00ff00" stroke-width="0.7"/><line x1="597.5" y1="246.99" x2="597.5" y2="271.02" stroke="#00ff00" stroke-width="1.0"/><line x1="596.4" y1="264.25" x2="597.5" y2="264.25" stroke="#00ff00" stroke-width="0.7"/><line x1="597.5" y1="254.94" x2="598.6" y2="254.94" stroke="#00ff00" stroke-width="0.7"/><line x1="600.2" y1="254.18" x2="600.2" y2="268.7" stroke="#10d010" stroke-width="1.0"/><line x1="599.1" y1="268.68" x2="600.2" y2="268.68" stroke="#10d010" stroke-width="0.7"/><line x1="600.2" y1="258.67" x2="601.3" y2="258.67" stroke="#10d010" stroke-width="0.7"/><line x1="603.5" y1="258.54" x2="603.5" y2="269.31" stroke="#00ff00" stroke-width="1.0"/><line x1="602.4" y1="260.67" x2="603.5" y2="260.67" stroke="#00ff00" stroke-width="0.7"/><line x1="603.5" y1="262.93" x2="604.6" y2="262.93" stroke="#00ff00" stroke-width="0.7"/><line x1="605.5" y1="256.03" x2="605.5" y2="266.5" stroke="#00ff00" stroke-width="1.0"/><line x1="604.4" y1="265.12" x2="605.5" y2="265.12" stroke="#00ff00" stroke-width="0.7"/><line x1="605.5" y1="259.31" x2="606.6" y2="259.31" stroke="#00ff00" stroke-width="0.7"/><line x1="608.64" y1="261.09" x2="608.64" y2="268.89" stroke="#10d010" stroke-width="1.0"/><line x1="607.54" y1="264.68" x2="608.64" y2="264.68" stroke="#10d010" stroke-width="0.7"/><line x1="608.64" y1="265.15" x2="609.74" y2="265.15" stroke="#10d010" stroke-width="0.7"/><line x1="611.5" y1="255.16" x2="611.5" y2="271.22" stroke="#00ff00" stroke-width="1.0"/><line x1="610.4" y1="265.12" x2="611.5" y2="265.12" stroke="#00ff00" stroke-width="0.7"/><line x1="611.5" y1="270.27" x2="612.6" y2="270.27" stroke="#00ff00" stroke-width="0.7"/><line x1="614.5" y1="249.48" x2="614.5" y2="269.26" stroke="#00ff00" stroke-width="1.0"/><line x1="613.4" y1="254.18" x2="614.5" y2="254.18" stroke="#00ff00" stroke-width="0.7"/><line x1="614.5" y1="255.44" x2="615.6" y2="255.44" stroke="#00ff00" stroke-width="0.7"/><line x1="617.08" y1="259.76" x2="617.08" y2="280.05" stroke="#10d010" stroke-width="1.0"/><line x1="615.98" y1="259.99" x2="617.08" y2="259.99" stroke="#10d010" stroke-width="0.7"/><line x1="617.08" y1="268.18" x2="618.18" y2="268.18" stroke="#10d010" stroke-width="0.7"/><line x1="619.5" y1="254.3" x2="619.5" y2="265.57" stroke="#00ff00" stroke-width="1.0"/><line x1="618.4" y1="261.43" x2="619.5" y2="261.43" stroke="#00ff00" stroke-width="0.7"/><line x1="619.5" y1="254.98" x2="620.6" y2="254.98" stroke="#00ff00" stroke-width="0.7"/><line x1="622.5" y1="249.73" x2="622.5" y2="258.89" stroke="#00ff00" stroke-width="1.0"/><line x1="621.4" y1="252.96" x2="622.5" y2="252.96" stroke="#00ff00" stroke-width="0.7"/><line x1="622.5" y1="256.21" x2="623.6" y2="256.21" stroke="#00ff00" stroke-width="0.7"/><line x1="625.51" y1="241.75" x2="625.51" y2="259.58" stroke="#10d010" stroke-width="1.0"/><line x1="624.41" y1="253.8" x2="625.51" y2="253.8" stroke="#10d010" stroke-width="0.7"/><line x1="625.51" y1="258.92" x2="626.61" y2="258.92" stroke="#10d010" stroke-width="0.7"/><line x1="628.5" y1="229.32" x2="628.5" y2="247.22" stroke="#00ff00" stroke-width="1.0"/><line x1="627.4" y1="235.05" x2="628.5" y2="235.05" stroke="#00ff00" stroke-width="0.7"/><line x1="628.5" y1="235.83" x2="629.6" y2="235.83" stroke="#00ff00" stroke-width="0.7"/><line x1="631.5" y1="229.8" x2="631.5" y2="243.46" stroke="#00ff00" stroke-width="1.0"/><line x1="630.4" y1="233.91" x2="631.5" y2="233.91" stroke="#00ff00" stroke-width="0.7"/><line x1="631.5" y1="234.95" x2="632.6" y2="234.95" stroke="#00ff00" stroke-width="0.7"/><line x1="633.95" y1="228.19" x2="633.95" y2="239.62" stroke="#10d010" stroke-width="1.0"/><line x1="632.85" y1="236.59" x2="633.95" y2="236.59" stroke="#10d010" stroke-width="0.7"/><line x1="633.95" y1="231.73" x2="635.05" y2="231.73" stroke="#10d010" stroke-width="0.7"/><line x1="636.5" y1="231.24" x2="636.5" y2="243.95" stroke="#00ff00" stroke-width="1.0"/><line x1="635.4" y1="233.62" x2="636.5" y2="233.62" stroke="#00ff00" stroke-width="0.7"/><line x1="636.5" y1="236.77" x2="637.6" y2="236.77" stroke="#00ff00" stroke-width="0.7"/><line x1="639.5" y1="234.05" x2="639.5" y2="247.12" stroke="#00ff00" stroke-width="1.0"/><line x1="638.4" y1="238.42" x2="639.5" y2="238.42" stroke="#00ff00" stroke-width="0.7"/><line x1="639.5" y1="244.95" x2="640.6" y2="244.95" stroke="#00ff00" stroke-width="0.7"/><line x1="642.39" y1="235.05" x2="642.39" y2="245.83" stroke="#10d010" stroke-width="1.0"/><line x1="641.29" y1="238.68" x2="642.39" y2="238.68" stroke="#10d010" stroke-width="0.7"/><line x1="642.39" y1="242.06" x2="643.49" y2="242.06" stroke="#10d010" stroke-width="0.7"/><line x1="645.5" y1="230.34" x2="645.5" y2="242.97" stroke="#00ff00" stroke-width="1.0"/><line x1="644.4" y1="231.86" x2="645.5" y2="231.86" stroke="#00ff00" stroke-width="0.7"/><line x1="645.5" y1="237.03" x2="646.6" y2="237.03" stroke="#00ff00" stroke-width="0.7"/><line x1="648.5" y1="228.35" x2="648.5" y2="240.95" stroke="#00ff00" stroke-width="1.0"/><line x1="647.4" y1="230.67" x2="648.5" y2="230.67" stroke="#00ff00" stroke-width="0.7"/><line x1="648.5" y1="231.86" x2="649.6" y2="231.86" stroke="#00ff00" stroke-width="0.7"/><line x1="650.83" y1="230.71" x2="650.83" y2="244.25" stroke="#10d010" stroke-width="1.0"/><line x1="649.73" y1="235.39" x2="650.83" y2="235.39" stroke="#10d010" stroke-width="0.7"/><line x1="650.83" y1="232.47" x2="651.93" y2="232.47" stroke="#10d010" stroke-width="0.7"/><line x1="653.5" y1="235.83" x2="653.5" y2="245.29" stroke="#00ff00" stroke-width="1.0"/><line x1="652.4" y1="239.11" x2="653.5" y2="239.11" stroke="#00ff00" stroke-width="0.7"/><line x1="653.5" y1="239.77" x2="654.6" y2="239.77" stroke="#00ff00" stroke-width="0.7"/><line x1="656.5" y1="237.99" x2="656.5" y2="247.27" stroke="#00ff00" stroke-width="1.0"/><line x1="655.4" y1="239.44" x2="656.5" y2="239.44" stroke="#00ff00" stroke-width="0.7"/><line x1="656.5" y1="238.03" x2="657.6" y2="238.03" stroke="#00ff00" stroke-width="0.7"/><line x1="659.26" y1="242.77" x2="659.26" y2="251.17" stroke="#10d010" stroke-width="1.0"/><line x1="658.16" y1="246.42" x2="659.26" y2="246.42" stroke="#10d010" stroke-width="0.7"/><line x1="659.26" y1="250.75" x2="660.36" y2="250.75" stroke="#10d010" stroke-width="0.7"/><line x1="662.5" y1="243.56" x2="662.5" y2="255.39" stroke="#00ff00" stroke-width="1.0"/><line x1="661.4" y1="253.46" x2="662.5" y2="253.46" stroke="#00ff00" stroke-width="0.7"/><line x1="662.5" y1="251.4" x2="663.6" y2="251.4" stroke="#00ff00" stroke-width="0.7"/><line x1="664.5" y1="233.34" x2="664.5" y2="261.83" stroke="#00ff00" stroke-width="1.0"/><line x1="663.4" y1="239.82" x2="664.5" y2="239.82" stroke="#00ff00" stroke-width="0.7"/><line x1="664.5" y1="235.27" x2="665.6" y2="235.27" stroke="#00ff00" stroke-width="0.7"/><line x1="667.7" y1="214.24" x2="667.7" y2="230.86" stroke="#10d010" stroke-width="1.0"/><line x1="666.6" y1="214.99" x2="667.7" y2="214.99" stroke="#10d010" stroke-width="0.7"/><line x1="667.7" y1="229.26" x2="668.8" y2="229.26" stroke="#10d010" stroke-width="0.7"/><line x1="670.5" y1="211.57" x2="670.5" y2="218.04" stroke="#00ff00" stroke-width="1.0"/><line x1="669.4" y1="217.39" x2="670.5" y2="217.39" stroke="#00ff00" stroke-width="0.7"/><line x1="670.5" y1="215.3" x2="671.6" y2="215.3" stroke="#00ff00" stroke-width="0.7"/><line x1="673.5" y1="212.07" x2="673.5" y2="220.89" stroke="#00ff00" stroke-width="1.0"/><line x1="672.4" y1="214.71" x2="673.5" y2="214.71" stroke="#00ff00" stroke-width="0.7"/><line x1="673.5" y1="217.91" x2="674.6" y2="217.91" stroke="#00ff00" stroke-width="0.7"/><line x1="676.14" y1="206.64" x2="676.14" y2="215.29" stroke="#10d010" stroke-width="1.0"/><line x1="675.04" y1="211.93" x2="676.14" y2="211.93" stroke="#10d010" stroke-width="0.7"/><line x1="676.14" y1="209.59" x2="677.24" y2="209.59" stroke="#10d010" stroke-width="0.7"/><line x1="678.5" y1="191.36" x2="678.5" y2="203.37" stroke="#00ff00" stroke-width="1.0"/><line x1="677.4" y1="200.76" x2="678.5" y2="200.76" stroke="#00ff00" stroke-width="0.7"/><line x1="678.5" y1="195.59" x2="679.6" y2="195.59" stroke="#00ff00" stroke-width="0.7"/><line x1="681.5" y1="143.7" x2="681.5" y2="182.99" stroke="#00ff00" stroke-width="1.0"/><line x1="680.4" y1="150.43" x2="681.5" y2="150.43" stroke="#00ff00" stroke-width="0.7"/><line x1="681.5" y1="174.81" x2="682.6" y2="174.81" stroke="#00ff00" stroke-width="0.7"/><line x1="684.58" y1="133.93" x2="684.58" y2="156.44" stroke="#10d010" stroke-width="1.0"/><line x1="683.48" y1="134.1" x2="684.58" y2="134.1" stroke="#10d010" stroke-width="0.7"/><line x1="684.58" y1="148.08" x2="685.68" y2="148.08" stroke="#10d010" stroke-width="0.7"/><line x1="687.5" y1="126.77" x2="687.5" y2="138.11" stroke="#00ff00" stroke-width="1.0"/><line x1="686.4" y1="129.82" x2="687.5" y2="129.82" stroke="#00ff00" stroke-width="0.7"/><line x1="687.5" y1="132.75" x2="688.6" y2="132.75" stroke="#00ff00" stroke-width="0.7"/><line x1="690.5" y1="127.2" x2="690.5" y2="131.94" stroke="#00ff00" stroke-width="1.0"/><line x1="689.4" y1="127.21" x2="690.5" y2="127.21" stroke="#00ff00" stroke-width="0.7"/><line x1="690.5" y1="127.46" x2="691.6" y2="127.46" stroke="#00ff00" stroke-width="0.7"/><line x1="693.01" y1="120.98" x2="693.01" y2="132.35" stroke="#10d010" stroke-width="1.0"/><line x1="691.91" y1="132.06" x2="693.01" y2="132.06" stroke="#10d010" stroke-width="0.7"/><line x1="693.01" y1="130.69" x2="694.11" y2="130.69" stroke="#10d010" stroke-width="0.7"/><line x1="695.5" y1="118.87" x2="695.5" y2="131.38" stroke="#00ff00" stroke-width="1.0"/><line x1="694.4" y1="122.8" x2="695.5" y2="122.8" stroke="#00ff00" stroke-width="0.7"/><line x1="695.5" y1="123.26" x2="696.6" y2="123.26" stroke="#00ff00" stroke-width="0.7"/><line x1="698.5" y1="129.64" x2="698.5" y2="141.57" stroke="#00ff00" stroke-width="1.0"/><line x1="697.4" y1="131.92" x2="698.5" y2="131.92" stroke="#00ff00" stroke-width="0.7"/><line x1="698.5" y1="133.57" x2="699.6" y2="133.57" stroke="#00ff00" stroke-width="0.7"/><line x1="701.45" y1="144.12" x2="701.45" y2="152.8" stroke="#10d010" stroke-width="1.0"/><line x1="700.35" y1="147.42" x2="701.45" y2="147.42" stroke="#10d010" stroke-width="0.7"/><line x1="701.45" y1="144.81" x2="702.55" y2="144.81" stroke="#10d010" stroke-width="0.7"/><line x1="704.5" y1="150.79" x2="704.5" y2="157.3" stroke="#00ff00" stroke-width="1.0"/><line x1="703.4" y1="155.89" x2="704.5" y2="155.89" stroke="#00ff00" stroke-width="0.7"/><line x1="704.5" y1="153.27" x2="705.6" y2="153.27" stroke="#00ff00" stroke-width="0.7"/><line x1="707.5" y1="152.18" x2="707.5" y2="158.93" stroke="#00ff00" stroke-width="1.0"/><line x1="706.4" y1="154.69" x2="707.5" y2="154.69" stroke="#00ff00" stroke-width="0.7"/><line x1="707.5" y1="155.53" x2="708.6" y2="155.53" stroke="#00ff00" stroke-width="0.7"/><line x1="709.89" y1="153.34" x2="709.89" y2="161.88" stroke="#10d010" stroke-width="1.0"/><line x1="708.79" y1="157.28" x2="709.89" y2="157.28" stroke="#10d010" stroke-width="0.7"/><line x1="709.89" y1="155.44" x2="710.99" y2="155.44" stroke="#10d010" stroke-width="0.7"/><line x1="712.5" y1="154.4" x2="712.5" y2="166.76" stroke="#00ff00" stroke-width="1.0"/><line x1="711.4" y1="159.65" x2="712.5" y2="159.65" stroke="#00ff00" stroke-width="0.7"/><line x1="712.5" y1="159.66" x2="713.6" y2="159.66" stroke="#00ff00" stroke-width="0.7"/><line x1="715.5" y1="156.09" x2="715.5" y2="172.81" stroke="#00ff00" stroke-width="1.0"/><line x1="714.4" y1="171.1" x2="715.5" y2="171.1" stroke="#00ff00" stroke-width="0.7"/><line x1="715.5" y1="169.32" x2="716.6" y2="169.32" stroke="#00ff00" stroke-width="0.7"/><line x1="718.33" y1="154.24" x2="718.33" y2="178.22" stroke="#10d010" stroke-width="1.0"/><line x1="717.23" y1="173.74" x2="718.33" y2="173.74" stroke="#10d010" stroke-width="0.7"/><line x1="718.33" y1="170.12" x2="719.43" y2="170.12" stroke="#10d010" stroke-width="0.7"/><line x1="721.5" y1="155.87" x2="721.5" y2="163.48" stroke="#00ff00" stroke-width="1.0"/><line x1="720.4" y1="161.45" x2="721.5" y2="161.45" stroke="#00ff00" stroke-width="0.7"/><line x1="721.5" y1="160.16" x2="722.6" y2="160.16" stroke="#00ff00" stroke-width="0.7"/><line x1="723.5" y1="156.39" x2="723.5" y2="161.77" stroke="#00ff00" stroke-width="1.0"/><line x1="722.4" y1="157.16" x2="723.5" y2="157.16" stroke="#00ff00" stroke-width="0.7"/><line x1="723.5" y1="160.56" x2="724.6" y2="160.56" stroke="#00ff00" stroke-width="0.7"/><line x1="726.76" y1="153.03" x2="726.76" y2="159.22" stroke="#10d010" stroke-width="1.0"/><line x1="725.66" y1="158.48" x2="726.76" y2="158.48" stroke="#10d010" stroke-width="0.7"/><line x1="726.76" y1="154.14" x2="727.86" y2="154.14" stroke="#10d010" stroke-width="0.7"/><line x1="729.5" y1="150.92" x2="729.5" y2="163.15" stroke="#00ff00" stroke-width="1.0"/><line x1="728.4" y1="161.24" x2="729.5" y2="161.24" stroke="#00ff00" stroke-width="0.7"/><line x1="729.5" y1="159.16" x2="730.6" y2="159.16" stroke="#00ff00" stroke-width="0.7"/><line x1="732.5" y1="169.51" x2="732.5" y2="190.24" stroke="#00ff00" stroke-width="1.0"/><line x1="731.4" y1="186.07" x2="732.5" y2="186.07" stroke="#00ff00" stroke-width="0.7"/><line x1="732.5" y1="170.26" x2="733.6" y2="170.26" stroke="#00ff00" stroke-width="0.7"/><line x1="735.2" y1="186.35" x2="735.2" y2="207.71" stroke="#10d010" stroke-width="1.0"/><line x1="734.1" y1="188.63" x2="735.2" y2="188.63" stroke="#10d010" stroke-width="0.7"/><line x1="735.2" y1="202.35" x2="736.3" y2="202.35" stroke="#10d010" stroke-width="0.7"/><line x1="738.5" y1="199.48" x2="738.5" y2="214.61" stroke="#00ff00" stroke-width="1.0"/><line x1="737.4" y1="208.01" x2="738.5" y2="208.01" stroke="#00ff00" stroke-width="0.7"/><line x1="738.5" y1="212.01" x2="739.6" y2="212.01" stroke="#00ff00" stroke-width="0.7"/><line x1="740.5" y1="203.85" x2="740.5" y2="212.86" stroke="#00ff00" stroke-width="1.0"/><line x1="739.4" y1="209.4" x2="740.5" y2="209.4" stroke="#00ff00" stroke-width="0.7"/><line x1="740.5" y1="210.64" x2="741.6" y2="210.64" stroke="#00ff00" stroke-width="0.7"/><line x1="743.64" y1="198.88" x2="743.64" y2="207.92" stroke="#10d010" stroke-width="1.0"/><line x1="742.54" y1="202.04" x2="743.64" y2="202.04" stroke="#10d010" stroke-width="0.7"/><line x1="743.64" y1="202.66" x2="744.74" y2="202.66" stroke="#10d010" stroke-width="0.7"/><line x1="746.5" y1="187.65" x2="746.5" y2="199.11" stroke="#00ff00" stroke-width="1.0"/><line x1="745.4" y1="192.38" x2="746.5" y2="192.38" stroke="#00ff00" stroke-width="0.7"/><line x1="746.5" y1="196.21" x2="747.6" y2="196.21" stroke="#00ff00" stroke-width="0.7"/><line x1="749.5" y1="180.32" x2="749.5" y2="192.84" stroke="#00ff00" stroke-width="1.0"/><line x1="748.4" y1="188.76" x2="749.5" y2="188.76" stroke="#00ff00" stroke-width="0.7"/><line x1="749.5" y1="186.79" x2="750.6" y2="186.79" stroke="#00ff00" stroke-width="0.7"/><line x1="752.08" y1="186.07" x2="752.08" y2="198.65" stroke="#10d010" stroke-width="1.0"/><line x1="750.98" y1="187.95" x2="752.08" y2="187.95" stroke="#10d010" stroke-width="0.7"/><line x1="752.08" y1="187.27" x2="753.18" y2="187.27" stroke="#10d010" stroke-width="0.7"/><line x1="754.5" y1="186.16" x2="754.5" y2="195.61" stroke="#00ff00" stroke-width="1.0"/><line x1="753.4" y1="190.35" x2="754.5" y2="190.35" stroke="#00ff00" stroke-width="0.7"/><line x1="754.5" y1="192.95" x2="755.6" y2="192.95" stroke="#00ff00" stroke-width="0.7"/><line x1="757.5" y1="177.23" x2="757.5" y2="191.35" stroke="#00ff00" stroke-width="1.0"/><line x1="756.4" y1="185.5" x2="757.5" y2="185.5" stroke="#00ff00" stroke-width="0.7"/><line x1="757.5" y1="181.67" x2="758.6" y2="181.67" stroke="#00ff00" stroke-width="0.7"/><line x1="760.51" y1="171.64" x2="760.51" y2="184.35" stroke="#10d010" stroke-width="1.0"/><line x1="759.41" y1="175.4" x2="760.51" y2="175.4" stroke="#10d010" stroke-width="0.7"/><line x1="760.51" y1="180.61" x2="761.61" y2="180.61" stroke="#10d010" stroke-width="0.7"/><line x1="763.5" y1="166.81" x2="763.5" y2="180.49" stroke="#00ff00" stroke-width="1.0"/><line x1="762.4" y1="170.47" x2="763.5" y2="170.47" stroke="#00ff00" stroke-width="0.7"/><line x1="763.5" y1="169.79" x2="764.6" y2="169.79" stroke="#00ff00" stroke-width="0.7"/><line x1="766.5" y1="167.29" x2="766.5" y2="187.46" stroke="#00ff00" stroke-width="1.0"/><line x1="765.4" y1="170.77" x2="766.5" y2="170.77" stroke="#00ff00" stroke-width="0.7"/><line x1="766.5" y1="174.56" x2="767.6" y2="174.56" stroke="#00ff00" stroke-width="0.7"/><line x1="768.95" y1="174.58" x2="768.95" y2="190.14" stroke="#10d010" stroke-width="1.0"/><line x1="767.85" y1="190.01" x2="768.95" y2="190.01" stroke="#10d010" stroke-width="0.7"/><line x1="768.95" y1="182.04" x2="770.05" y2="182.04" stroke="#10d010" stroke-width="0.7"/><line x1="771.5" y1="173.61" x2="771.5" y2="184.61" stroke="#00ff00" stroke-width="1.0"/><line x1="770.4" y1="182.65" x2="771.5" y2="182.65" stroke="#00ff00" stroke-width="0.7"/><line x1="771.5" y1="179.74" x2="772.6" y2="179.74" stroke="#00ff00" stroke-width="0.7"/><line x1="774.5" y1="176.23" x2="774.5" y2="185.2" stroke="#00ff00" stroke-width="1.0"/><line x1="773.4" y1="179.82" x2="774.5" y2="179.82" stroke="#00ff00" stroke-width="0.7"/><line x1="774.5" y1="182.81" x2="775.6" y2="182.81" stroke="#00ff00" stroke-width="0.7"/><line x1="777.39" y1="179.86" x2="777.39" y2="189.89" stroke="#10d010" stroke-width="1.0"/><line x1="776.29" y1="182.22" x2="777.39" y2="182.22" stroke="#10d010" stroke-width="0.7"/><line x1="777.39" y1="187.06" x2="778.49" y2="187.06" stroke="#10d010" stroke-width="0.7"/><line x1="780.5" y1="181.89" x2="780.5" y2="192.04" stroke="#00ff00" stroke-width="1.0"/><line x1="779.4" y1="184.34" x2="780.5" y2="184.34" stroke="#00ff00" stroke-width="0.7"/><line x1="780.5" y1="183.81" x2="781.6" y2="183.81" stroke="#00ff00" stroke-width="0.7"/><line x1="783.5" y1="172.64" x2="783.5" y2="189.34" stroke="#00ff00" stroke-width="1.0"/><line x1="782.4" y1="186.98" x2="783.5" y2="186.98" stroke="#00ff00" stroke-width="0.7"/><line x1="783.5" y1="187.67" x2="784.6" y2="187.67" stroke="#00ff00" stroke-width="0.7"/><line x1="785.83" y1="167.05" x2="785.83" y2="183.22" stroke="#10d010" stroke-width="1.0"/><line x1="784.73" y1="173.9" x2="785.83" y2="173.9" stroke="#10d010" stroke-width="0.7"/><line x1="785.83" y1="178.84" x2="786.93" y2="178.84" stroke="#10d010" stroke-width="0.7"/><line x1="788.5" y1="164.3" x2="788.5" y2="179.67" stroke="#00ff00" stroke-width="1.0"/><line x1="787.4" y1="168.78" x2="788.5" y2="168.78" stroke="#00ff00" stroke-width="0.7"/><line x1="788.5" y1="169.78" x2="789.6" y2="169.78" stroke="#00ff00" stroke-width="0.7"/><line x1="791.5" y1="172.85" x2="791.5" y2="187.37" stroke="#00ff00" stroke-width="1.0"/><line x1="790.4" y1="177.71" x2="791.5" y2="177.71" stroke="#00ff00" stroke-width="0.7"/><line x1="791.5" y1="179.18" x2="792.6" y2="179.18" stroke="#00ff00" stroke-width="0.7"/><line x1="794.26" y1="178.19" x2="794.26" y2="190.62" stroke="#10d010" stroke-width="1.0"/><line x1="793.16" y1="190.07" x2="794.26" y2="190.07" stroke="#10d010" stroke-width="0.7"/><line x1="794.26" y1="183.05" x2="795.36" y2="183.05" stroke="#10d010" stroke-width="0.7"/><line x1="797.5" y1="180.74" x2="797.5" y2="193.91" stroke="#00ff00" stroke-width="1.0"/><line x1="796.4" y1="189.5" x2="797.5" y2="189.5" stroke="#00ff00" stroke-width="0.7"/><line x1="797.5" y1="182.22" x2="798.6" y2="182.22" stroke="#00ff00" stroke-width="0.7"/><line x1="799.5" y1="185.01" x2="799.5" y2="194.84" stroke="#00ff00" stroke-width="1.0"/><line x1="798.4" y1="194.27" x2="799.5" y2="194.27" stroke="#00ff00" stroke-width="0.7"/><line x1="799.5" y1="188.69" x2="800.6" y2="188.69" stroke="#00ff00" stroke-width="0.7"/><line x1="802.7" y1="178.89" x2="802.7" y2="195.09" stroke="#10d010" stroke-width="1.0"/><line x1="801.6" y1="189.84" x2="802.7" y2="189.84" stroke="#10d010" stroke-width="0.7"/><line x1="802.7" y1="189.49" x2="803.8" y2="189.49" stroke="#10d010" stroke-width="0.7"/><line x1="805.5" y1="154.52" x2="805.5" y2="173.62" stroke="#00ff00" stroke-width="1.0"/><line x1="804.4" y1="172.88" x2="805.5" y2="172.88" stroke="#00ff00" stroke-width="0.7"/><line x1="805.5" y1="167.37" x2="806.6" y2="167.37" stroke="#00ff00" stroke-width="0.7"/><line x1="808.5" y1="144.96" x2="808.5" y2="158.18" stroke="#00ff00" stroke-width="1.0"/><line x1="807.4" y1="149.62" x2="808.5" y2="149.62" stroke="#00ff00" stroke-width="0.7"/><line x1="808.5" y1="154.46" x2="809.6" y2="154.46" stroke="#00ff00" stroke-width="0.7"/><line x1="811.14" y1="138.37" x2="811.14" y2="153.13" stroke="#10d010" stroke-width="1.0"/><line x1="810.04" y1="147.9" x2="811.14" y2="147.9" stroke="#10d010" stroke-width="0.7"/><line x1="811.14" y1="147.68" x2="812.24" y2="147.68" stroke="#10d010" stroke-width="0.7"/><line x1="813.5" y1="140.64" x2="813.5" y2="153.07" stroke="#00ff00" stroke-width="1.0"/><line x1="812.4" y1="142.17" x2="813.5" y2="142.17" stroke="#00ff00" stroke-width="0.7"/><line x1="813.5" y1="152.22" x2="814.6" y2="152.22" stroke="#00ff00" stroke-width="0.7"/><line x1="816.5" y1="144.14" x2="816.5" y2="155.98" stroke="#00ff00" stroke-width="1.0"/><line x1="815.4" y1="151.21" x2="816.5" y2="151.21" stroke="#00ff00" stroke-width="0.7"/><line x1="816.5" y1="150.71" x2="817.6" y2="150.71" stroke="#00ff00" stroke-width="0.7"/><line x1="819.58" y1="147.69" x2="819.58" y2="156.29" stroke="#10d010" stroke-width="1.0"/><line x1="818.48" y1="149.21" x2="819.58" y2="149.21" stroke="#10d010" stroke-width="0.7"/><line x1="819.58" y1="148.28" x2="820.68" y2="148.28" stroke="#10d010" stroke-width="0.7"/><line x1="822.5" y1="151" x2="822.5" y2="157.52" stroke="#00ff00" stroke-width="1.0"/><line x1="821.4" y1="155.83" x2="822.5" y2="155.83" stroke="#00ff00" stroke-width="0.7"/><line x1="822.5" y1="153.34" x2="823.6" y2="153.34" stroke="#00ff00" stroke-width="0.7"/><line x1="825.5" y1="147.94" x2="825.5" y2="155.2" stroke="#00ff00" stroke-width="1.0"/><line x1="824.4" y1="148.25" x2="825.5" y2="148.25" stroke="#00ff00" stroke-width="0.7"/><line x1="825.5" y1="151.6" x2="826.6" y2="151.6" stroke="#00ff00" stroke-width="0.7"/><line x1="828.01" y1="146.4" x2="828.01" y2="155.29" stroke="#10d010" stroke-width="1.0"/><line x1="826.91" y1="149.36" x2="828.01" y2="149.36" stroke="#10d010" stroke-width="0.7"/><line x1="828.01" y1="149.99" x2="829.11" y2="149.99" stroke="#10d010" stroke-width="0.7"/><line x1="830.5" y1="151.48" x2="830.5" y2="165.26" stroke="#00ff00" stroke-width="1.0"/><line x1="829.4" y1="163.15" x2="830.5" y2="163.15" stroke="#00ff00" stroke-width="0.7"/><line x1="830.5" y1="153.03" x2="831.6" y2="153.03" stroke="#00ff00" stroke-width="0.7"/><line x1="833.5" y1="159.22" x2="833.5" y2="181.21" stroke="#00ff00" stroke-width="1.0"/><line x1="832.4" y1="176.35" x2="833.5" y2="176.35" stroke="#00ff00" stroke-width="0.7"/><line x1="833.5" y1="175.21" x2="834.6" y2="175.21" stroke="#00ff00" stroke-width="0.7"/><line x1="836.45" y1="174.64" x2="836.45" y2="203.89" stroke="#10d010" stroke-width="1.0"/><line x1="835.35" y1="196.38" x2="836.45" y2="196.38" stroke="#10d010" stroke-width="0.7"/><line x1="836.45" y1="198.5" x2="837.55" y2="198.5" stroke="#10d010" stroke-width="0.7"/><line x1="839.5" y1="199.71" x2="839.5" y2="225.19" stroke="#00ff00" stroke-width="1.0"/><line x1="838.4" y1="209.86" x2="839.5" y2="209.86" stroke="#00ff00" stroke-width="0.7"/><line x1="839.5" y1="204.65" x2="840.6" y2="204.65" stroke="#00ff00" stroke-width="0.7"/><line x1="842.5" y1="213.79" x2="842.5" y2="223.79" stroke="#00ff00" stroke-width="1.0"/><line x1="841.4" y1="216.29" x2="842.5" y2="216.29" stroke="#00ff00" stroke-width="0.7"/><line x1="842.5" y1="221.61" x2="843.6" y2="221.61" stroke="#00ff00" stroke-width="0.7"/><line x1="844.89" y1="213.53" x2="844.89" y2="222.58" stroke="#10d010" stroke-width="1.0"/><line x1="843.79" y1="222.12" x2="844.89" y2="222.12" stroke="#10d010" stroke-width="0.7"/><line x1="844.89" y1="217" x2="845.99" y2="217" stroke="#10d010" stroke-width="0.7"/><line x1="847.5" y1="208.92" x2="847.5" y2="219.82" stroke="#00ff00" stroke-width="1.0"/><line x1="846.4" y1="219.57" x2="847.5" y2="219.57" stroke="#00ff00" stroke-width="0.7"/><line x1="847.5" y1="216.41" x2="848.6" y2="216.41" stroke="#00ff00" stroke-width="0.7"/><line x1="850.5" y1="193.21" x2="850.5" y2="200.51" stroke="#00ff00" stroke-width="1.0"/><line x1="849.4" y1="197.6" x2="850.5" y2="197.6" stroke="#00ff00" stroke-width="0.7"/><line x1="850.5" y1="198.52" x2="851.6" y2="198.52" stroke="#00ff00" stroke-width="0.7"/><line x1="853.33" y1="170.46" x2="853.33" y2="185.17" stroke="#10d010" stroke-width="1.0"/><line x1="852.23" y1="177.7" x2="853.33" y2="177.7" stroke="#10d010" stroke-width="0.7"/><line x1="853.33" y1="178.16" x2="854.43" y2="178.16" stroke="#10d010" stroke-width="0.7"/><line x1="856.5" y1="165.86" x2="856.5" y2="177.6" stroke="#00ff00" stroke-width="1.0"/><line x1="855.4" y1="166.3" x2="856.5" y2="166.3" stroke="#00ff00" stroke-width="0.7"/><line x1="856.5" y1="171.73" x2="857.6" y2="171.73" stroke="#00ff00" stroke-width="0.7"/><line x1="858.5" y1="170.64" x2="858.5" y2="177.74" stroke="#00ff00" stroke-width="1.0"/><line x1="857.4" y1="177.45" x2="858.5" y2="177.45" stroke="#00ff00" stroke-width="0.7"/><line x1="858.5" y1="176.97" x2="859.6" y2="176.97" stroke="#00ff00" stroke-width="0.7"/><line x1="861.76" y1="175.47" x2="861.76" y2="183.05" stroke="#10d010" stroke-width="1.0"/><line x1="860.66" y1="175.85" x2="861.76" y2="175.85" stroke="#10d010" stroke-width="0.7"/><line x1="861.76" y1="178.2" x2="862.86" y2="178.2" stroke="#10d010" stroke-width="0.7"/><line x1="864.5" y1="178.57" x2="864.5" y2="192.49" stroke="#00ff00" stroke-width="1.0"/><line x1="863.4" y1="191.52" x2="864.5" y2="191.52" stroke="#00ff00" stroke-width="0.7"/><line x1="864.5" y1="183.07" x2="865.6" y2="183.07" stroke="#00ff00" stroke-width="0.7"/><line x1="867.5" y1="184.91" x2="867.5" y2="202.72" stroke="#00ff00" stroke-width="1.0"/><line x1="866.4" y1="200.19" x2="867.5" y2="200.19" stroke="#00ff00" stroke-width="0.7"/><line x1="867.5" y1="195.61" x2="868.6" y2="195.61" stroke="#00ff00" stroke-width="0.7"/><line x1="870.2" y1="183.98" x2="870.2" y2="197.53" stroke="#10d010" stroke-width="1.0"/><line x1="869.1" y1="188.63" x2="870.2" y2="188.63" stroke="#10d010" stroke-width="0.7"/><line x1="870.2" y1="194.91" x2="871.3" y2="194.91" stroke="#10d010" stroke-width="0.7"/><line x1="873.5" y1="178.88" x2="873.5" y2="187.02" stroke="#00ff00" stroke-width="1.0"/><line x1="872.4" y1="185.04" x2="873.5" y2="185.04" stroke="#00ff00" stroke-width="0.7"/><line x1="873.5" y1="182.83" x2="874.6" y2="182.83" stroke="#00ff00" stroke-width="0.7"/><line x1="875.5" y1="175.08" x2="875.5" y2="184.75" stroke="#00ff00" stroke-width="1.0"/><line x1="874.4" y1="177.02" x2="875.5" y2="177.02" stroke="#00ff00" stroke-width="0.7"/><line x1="875.5" y1="176.64" x2="876.6" y2="176.64" stroke="#00ff00" stroke-width="0.7"/><line x1="878.64" y1="174.08" x2="878.64" y2="182.36" stroke="#10d010" stroke-width="1.0"/><line x1="877.54" y1="177.58" x2="878.64" y2="177.58" stroke="#10d010" stroke-width="0.7"/><line x1="878.64" y1="179.46" x2="879.74" y2="179.46" stroke="#10d010" stroke-width="0.7"/><line x1="881.5" y1="168.38" x2="881.5" y2="181.67" stroke="#00ff00" stroke-width="1.0"/><line x1="880.4" y1="173.71" x2="881.5" y2="173.71" stroke="#00ff00" stroke-width="0.7"/><line x1="881.5" y1="170.78" x2="882.6" y2="170.78" stroke="#00ff00" stroke-width="0.7"/><line x1="884.5" y1="165.98" x2="884.5" y2="178.94" stroke="#00ff00" stroke-width="1.0"/><line x1="883.4" y1="170.79" x2="884.5" y2="170.79" stroke="#00ff00" stroke-width="0.7"/><line x1="884.5" y1="172.84" x2="885.6" y2="172.84" stroke="#00ff00" stroke-width="0.7"/><line x1="887.08" y1="168.75" x2="887.08" y2="180.15" stroke="#10d010" stroke-width="1.0"/><line x1="885.98" y1="171.13" x2="887.08" y2="171.13" stroke="#10d010" stroke-width="0.7"/><line x1="887.08" y1="177.67" x2="888.18" y2="177.67" stroke="#10d010" stroke-width="0.7"/><line x1="889.5" y1="170.54" x2="889.5" y2="182.15" stroke="#00ff00" stroke-width="1.0"/><line x1="888.4" y1="172.97" x2="889.5" y2="172.97" stroke="#00ff00" stroke-width="0.7"/><line x1="889.5" y1="172.53" x2="890.6" y2="172.53" stroke="#00ff00" stroke-width="0.7"/><line x1="892.5" y1="171.32" x2="892.5" y2="181.31" stroke="#00ff00" stroke-width="1.0"/><line x1="891.4" y1="172.42" x2="892.5" y2="172.42" stroke="#00ff00" stroke-width="0.7"/><line x1="892.5" y1="173" x2="893.6" y2="173" stroke="#00ff00" stroke-width="0.7"/><line x1="895.51" y1="171.13" x2="895.51" y2="181.31" stroke="#10d010" stroke-width="1.0"/><line x1="894.41" y1="175.69" x2="895.51" y2="175.69" stroke="#10d010" stroke-width="0.7"/><line x1="895.51" y1="175.28" x2="896.61" y2="175.28" stroke="#10d010" stroke-width="0.7"/><line x1="898.5" y1="169.79" x2="898.5" y2="178.08" stroke="#00ff00" stroke-width="1.0"/><line x1="897.4" y1="173.07" x2="898.5" y2="173.07" stroke="#00ff00" stroke-width="0.7"/><line x1="898.5" y1="170.01" x2="899.6" y2="170.01" stroke="#00ff00" stroke-width="0.7"/><line x1="901.5" y1="161.01" x2="901.5" y2="192.52" stroke="#00ff00" stroke-width="1.0"/><line x1="900.4" y1="175.96" x2="901.5" y2="175.96" stroke="#00ff00" stroke-width="0.7"/><line x1="901.5" y1="166.2" x2="902.6" y2="166.2" stroke="#00ff00" stroke-width="0.7"/><line x1="903.95" y1="166.54" x2="903.95" y2="192.29" stroke="#10d010" stroke-width="1.0"/><line x1="902.85" y1="167.88" x2="903.95" y2="167.88" stroke="#10d010" stroke-width="0.7"/><line x1="903.95" y1="185.28" x2="905.05" y2="185.28" stroke="#10d010" stroke-width="0.7"/><line x1="906.5" y1="176.32" x2="906.5" y2="189.01" stroke="#00ff00" stroke-width="1.0"/><line x1="905.4" y1="188.16" x2="906.5" y2="188.16" stroke="#00ff00" stroke-width="0.7"/><line x1="906.5" y1="180.13" x2="907.6" y2="180.13" stroke="#00ff00" stroke-width="0.7"/><polyline points="554.96,216.86 563.83,236.09 572.71,250.89 581.59,262.72 590.46,268.05 599.34,268.64 611.17,268.64 620.05,265.68 628.92,256.8 637.8,252.37 646.67,247.93 655.55,243.49 664.43,241.42 673.3,234.62 682.18,218.34 691.05,188.76 699.93,165.09 708.8,153.25 717.68,146.75 726.56,151.78 730,156.21 738.88,171.01 747.75,179.29 756.63,185.8 766.98,190.24 774.38,185.8 783.25,181.36 792.13,179.88 801.01,181.36 809.88,173.96 818.76,166.57 827.63,162.13 833.55,160.65 839.47,166.57 848.34,176.92 857.22,182.84 866.09,190.24 872.01,194.67 877.93,190.24 886.8,182.84 892.72,179.29 901.6,179.88 907.51,178.4" fill="none" stroke="#d01010" stroke-width="1"/><line x1="915.3" y1="108.3" x2="918.3" y2="108.3" stroke="#a0a0a0" stroke-width="1"/><text transform="translate(920.3 110.9) scale(0.9 1)" fill="#fff" font-size="7.3" text-anchor="start" >1.4025</text><line x1="915.3" y1="132.69" x2="918.3" y2="132.69" stroke="#a0a0a0" stroke-width="1"/><text transform="translate(920.3 135.29) scale(0.9 1)" fill="#fff" font-size="7.3" text-anchor="start" >1.3980</text><line x1="915.3" y1="157.08" x2="918.3" y2="157.08" stroke="#a0a0a0" stroke-width="1"/><text transform="translate(920.3 159.68) scale(0.9 1)" fill="#fff" font-size="7.3" text-anchor="start" >1.3935</text><line x1="915.3" y1="205.86" x2="918.3" y2="205.86" stroke="#a0a0a0" stroke-width="1"/><text transform="translate(920.3 208.46) scale(0.9 1)" fill="#fff" font-size="7.3" text-anchor="start" >1.3845</text><line x1="915.3" y1="230.25" x2="918.3" y2="230.25" stroke="#a0a0a0" stroke-width="1"/><text transform="translate(920.3 232.85) scale(0.9 1)" fill="#fff" font-size="7.3" text-anchor="start" >1.3800</text><line x1="915.3" y1="254.64" x2="918.3" y2="254.64" stroke="#a0a0a0" stroke-width="1"/><text transform="translate(920.3 257.24) scale(0.9 1)" fill="#fff" font-size="7.3" text-anchor="start" >1.3755</text><line x1="915.3" y1="279.03" x2="918.3" y2="279.03" stroke="#a0a0a0" stroke-width="1"/><text transform="translate(920.3 281.63) scale(0.9 1)" fill="#fff" font-size="7.3" text-anchor="start" >1.3710</text><line x1="915.3" y1="303.42" x2="918.3" y2="303.42" stroke="#a0a0a0" stroke-width="1"/><text transform="translate(920.3 306.02) scale(0.9 1)" fill="#fff" font-size="7.3" text-anchor="start" >1.3665</text><rect x="917.6" y="177.6" width="25.6" height="7.8" fill="#fff"/><text transform="translate(920.3 184.1) scale(0.9 1)" fill="#000" font-size="7.3" text-anchor="start" >1.3891</text><line x1="554.3" y1="305.1" x2="554.3" y2="308.1" stroke="#a0a0a0" stroke-width="1"/><text transform="translate(554.3 314.7) scale(0.9 1)" fill="#fff" font-size="7.3" text-anchor="start" >7 Apr 2021</text><line x1="598.8" y1="305.1" x2="598.8" y2="308.1" stroke="#a0a0a0" stroke-width="1"/><text transform="translate(598.8 314.7) scale(0.9 1)" fill="#fff" font-size="7.3" text-anchor="start" >12 Apr 15:00</text><line x1="643.8" y1="305.1" x2="643.8" y2="308.1" stroke="#a0a0a0" stroke-width="1"/><text transform="translate(643.8 314.7) scale(0.9 1)" fill="#fff" font-size="7.3" text-anchor="start" >15 Apr 07:00</text><line x1="689.7" y1="305.1" x2="689.7" y2="308.1" stroke="#a0a0a0" stroke-width="1"/><text transform="translate(689.7 314.7) scale(0.9 1)" fill="#fff" font-size="7.3" text-anchor="start" >19 Apr 23:00</text><line x1="734.3" y1="305.1" x2="734.3" y2="308.1" stroke="#a0a0a0" stroke-width="1"/><text transform="translate(734.3 314.7) scale(0.9 1)" fill="#fff" font-size="7.3" text-anchor="start" >22 Apr 15:00</text><line x1="779.7" y1="305.1" x2="779.7" y2="308.1" stroke="#a0a0a0" stroke-width="1"/><text transform="translate(779.7 314.7) scale(0.9 1)" fill="#fff" font-size="7.3" text-anchor="start" >27 Apr 07:00</text><line x1="824.7" y1="305.1" x2="824.7" y2="308.1" stroke="#a0a0a0" stroke-width="1"/><text transform="translate(824.7 314.7) scale(0.9 1)" fill="#fff" font-size="7.3" text-anchor="start" >29 Apr 23:00</text><line x1="869.7" y1="305.1" x2="869.7" y2="308.1" stroke="#a0a0a0" stroke-width="1"/><text transform="translate(869.7 314.7) scale(0.9 1)" fill="#fff" font-size="7.3" text-anchor="start" >4 May 15:00</text><text transform="translate(558 113) scale(0.9 1)" fill="#fff" font-size="7.3" text-anchor="start" >GBPUSD,H4&#160;&#160;1.3900 1.3900 1.3887 1.3891</text><rect x="145.5" y="350" width="393.5" height="217.8" fill="#000"/><path d="M145 567.8V349.5H539" fill="none" stroke="#707070" stroke-width="1"/><path d="M145.5 568.3H539.5V350" fill="none" stroke="#f4f8fc" stroke-width="1"/><line x1="171.5" y1="351.8" x2="171.5" y2="553" stroke="#95a0b0" stroke-width="1" stroke-dasharray="2.4 2.1"/><line x1="194.06" y1="351.8" x2="194.06" y2="553" stroke="#95a0b0" stroke-width="1" stroke-dasharray="2.4 2.1"/><line x1="216.62" y1="351.8" x2="216.62" y2="553" stroke="#95a0b0" stroke-width="1" stroke-dasharray="2.4 2.1"/><line x1="239.18" y1="351.8" x2="239.18" y2="553" stroke="#95a0b0" stroke-width="1" stroke-dasharray="2.4 2.1"/><line x1="261.74" y1="351.8" x2="261.74" y2="553" stroke="#95a0b0" stroke-width="1" stroke-dasharray="2.4 2.1"/><line x1="284.3" y1="351.8" x2="284.3" y2="553" stroke="#95a0b0" stroke-width="1" stroke-dasharray="2.4 2.1"/><line x1="306.86" y1="351.8" x2="306.86" y2="553" stroke="#95a0b0" stroke-width="1" stroke-dasharray="2.4 2.1"/><line x1="329.42" y1="351.8" x2="329.42" y2="553" stroke="#95a0b0" stroke-width="1" stroke-dasharray="2.4 2.1"/><line x1="351.98" y1="351.8" x2="351.98" y2="553" stroke="#95a0b0" stroke-width="1" stroke-dasharray="2.4 2.1"/><line x1="374.54" y1="351.8" x2="374.54" y2="553" stroke="#95a0b0" stroke-width="1" stroke-dasharray="2.4 2.1"/><line x1="397.1" y1="351.8" x2="397.1" y2="553" stroke="#95a0b0" stroke-width="1" stroke-dasharray="2.4 2.1"/><line x1="419.66" y1="351.8" x2="419.66" y2="553" stroke="#95a0b0" stroke-width="1" stroke-dasharray="2.4 2.1"/><line x1="442.22" y1="351.8" x2="442.22" y2="553" stroke="#95a0b0" stroke-width="1" stroke-dasharray="2.4 2.1"/><line x1="464.78" y1="351.8" x2="464.78" y2="553" stroke="#95a0b0" stroke-width="1" stroke-dasharray="2.4 2.1"/><line x1="487.34" y1="351.8" x2="487.34" y2="553" stroke="#95a0b0" stroke-width="1" stroke-dasharray="2.4 2.1"/><line x1="148.1" y1="356.1" x2="510.5" y2="356.1" stroke="#95a0b0" stroke-width="1" stroke-dasharray="2.4 2.1"/><line x1="148.1" y1="381.45" x2="510.5" y2="381.45" stroke="#95a0b0" stroke-width="1" stroke-dasharray="2.4 2.1"/><line x1="148.1" y1="406.8" x2="510.5" y2="406.8" stroke="#95a0b0" stroke-width="1" stroke-dasharray="2.4 2.1"/><line x1="148.1" y1="432.15" x2="510.5" y2="432.15" stroke="#95a0b0" stroke-width="1" stroke-dasharray="2.4 2.1"/><line x1="148.1" y1="457.5" x2="510.5" y2="457.5" stroke="#95a0b0" stroke-width="1" stroke-dasharray="2.4 2.1"/><line x1="148.1" y1="482.85" x2="510.5" y2="482.85" stroke="#95a0b0" stroke-width="1" stroke-dasharray="2.4 2.1"/><rect x="147.6" y="351.8" width="362.9" height="201.2" fill="none" stroke="#a0a0a0" stroke-width="1"/><line x1="147.6" y1="485.3" x2="510.5" y2="485.3" stroke="#808080" stroke-width="1"/><line x1="147.6" y1="487.6" x2="510.5" y2="487.6" stroke="#f0f0f0" stroke-width="1.1"/><line x1="149" y1="497.6" x2="501.5" y2="497.6" stroke="#b0b0b0" stroke-width="0.8"/><line x1="147.6" y1="474.2" x2="510.5" y2="474.2" stroke="#9a9a9a" stroke-width="1"/><g clip-path="url(#c3)"><line x1="149.5" y1="362.67" x2="149.5" y2="367.85" stroke="#00ff00" stroke-width="1.0"/><line x1="148.4" y1="363.04" x2="149.5" y2="363.04" stroke="#00ff00" stroke-width="0.7"/><line x1="149.5" y1="365.45" x2="150.6" y2="365.45" stroke="#00ff00" stroke-width="0.7"/><line x1="151.81" y1="363.32" x2="151.81" y2="368.72" stroke="#10d010" stroke-width="1.0"/><line x1="150.71" y1="363.52" x2="151.81" y2="363.52" stroke="#10d010" stroke-width="0.7"/><line x1="151.81" y1="365.66" x2="152.91" y2="365.66" stroke="#10d010" stroke-width="0.7"/><line x1="154.5" y1="366.98" x2="154.5" y2="376.36" stroke="#00ff00" stroke-width="1.0"/><line x1="153.4" y1="374.74" x2="154.5" y2="374.74" stroke="#00ff00" stroke-width="0.7"/><line x1="154.5" y1="368.14" x2="155.6" y2="368.14" stroke="#00ff00" stroke-width="0.7"/><line x1="157.5" y1="370.12" x2="157.5" y2="379.21" stroke="#00ff00" stroke-width="1.0"/><line x1="156.4" y1="375.36" x2="157.5" y2="375.36" stroke="#00ff00" stroke-width="0.7"/><line x1="157.5" y1="373.72" x2="158.6" y2="373.72" stroke="#00ff00" stroke-width="0.7"/><line x1="160.25" y1="383.21" x2="160.25" y2="396.61" stroke="#10d010" stroke-width="1.0"/><line x1="159.15" y1="387.09" x2="160.25" y2="387.09" stroke="#10d010" stroke-width="0.7"/><line x1="160.25" y1="385.15" x2="161.35" y2="385.15" stroke="#10d010" stroke-width="0.7"/><line x1="163.5" y1="389.92" x2="163.5" y2="395.32" stroke="#00ff00" stroke-width="1.0"/><line x1="162.4" y1="390.9" x2="163.5" y2="390.9" stroke="#00ff00" stroke-width="0.7"/><line x1="163.5" y1="393.06" x2="164.6" y2="393.06" stroke="#00ff00" stroke-width="0.7"/><line x1="165.5" y1="390.07" x2="165.5" y2="395.2" stroke="#00ff00" stroke-width="1.0"/><line x1="164.4" y1="390.4" x2="165.5" y2="390.4" stroke="#00ff00" stroke-width="0.7"/><line x1="165.5" y1="390.38" x2="166.6" y2="390.38" stroke="#00ff00" stroke-width="0.7"/><line x1="168.69" y1="389.44" x2="168.69" y2="395.11" stroke="#10d010" stroke-width="1.0"/><line x1="167.59" y1="391.22" x2="168.69" y2="391.22" stroke="#10d010" stroke-width="0.7"/><line x1="168.69" y1="392.76" x2="169.79" y2="392.76" stroke="#10d010" stroke-width="0.7"/><line x1="171.5" y1="382.52" x2="171.5" y2="392.03" stroke="#00ff00" stroke-width="1.0"/><line x1="170.4" y1="389.17" x2="171.5" y2="389.17" stroke="#00ff00" stroke-width="0.7"/><line x1="171.5" y1="384.84" x2="172.6" y2="384.84" stroke="#00ff00" stroke-width="0.7"/><line x1="174.5" y1="374.8" x2="174.5" y2="386.89" stroke="#00ff00" stroke-width="1.0"/><line x1="173.4" y1="383.62" x2="174.5" y2="383.62" stroke="#00ff00" stroke-width="0.7"/><line x1="174.5" y1="378.28" x2="175.6" y2="378.28" stroke="#00ff00" stroke-width="0.7"/><line x1="177.12" y1="374.44" x2="177.12" y2="390.5" stroke="#10d010" stroke-width="1.0"/><line x1="176.03" y1="386.6" x2="177.12" y2="386.6" stroke="#10d010" stroke-width="0.7"/><line x1="177.12" y1="376.88" x2="178.22" y2="376.88" stroke="#10d010" stroke-width="0.7"/><line x1="179.5" y1="383.73" x2="179.5" y2="391.35" stroke="#00ff00" stroke-width="1.0"/><line x1="178.4" y1="389.56" x2="179.5" y2="389.56" stroke="#00ff00" stroke-width="0.7"/><line x1="179.5" y1="388.1" x2="180.6" y2="388.1" stroke="#00ff00" stroke-width="0.7"/><line x1="182.5" y1="385.14" x2="182.5" y2="390.45" stroke="#00ff00" stroke-width="1.0"/><line x1="181.4" y1="388.3" x2="182.5" y2="388.3" stroke="#00ff00" stroke-width="0.7"/><line x1="182.5" y1="388.22" x2="183.6" y2="388.22" stroke="#00ff00" stroke-width="0.7"/><line x1="185.56" y1="383.82" x2="185.56" y2="389.56" stroke="#10d010" stroke-width="1.0"/><line x1="184.46" y1="386.54" x2="185.56" y2="386.54" stroke="#10d010" stroke-width="0.7"/><line x1="185.56" y1="387.63" x2="186.66" y2="387.63" stroke="#10d010" stroke-width="0.7"/><line x1="188.5" y1="381.3" x2="188.5" y2="387.68" stroke="#00ff00" stroke-width="1.0"/><line x1="187.4" y1="387.64" x2="188.5" y2="387.64" stroke="#00ff00" stroke-width="0.7"/><line x1="188.5" y1="386.54" x2="189.6" y2="386.54" stroke="#00ff00" stroke-width="0.7"/><line x1="191.5" y1="389.28" x2="191.5" y2="399.06" stroke="#00ff00" stroke-width="1.0"/><line x1="190.4" y1="389.5" x2="191.5" y2="389.5" stroke="#00ff00" stroke-width="0.7"/><line x1="191.5" y1="393.8" x2="192.6" y2="393.8" stroke="#00ff00" stroke-width="0.7"/><line x1="194" y1="396.09" x2="194" y2="408.1" stroke="#10d010" stroke-width="1.0"/><line x1="192.9" y1="405.32" x2="194" y2="405.32" stroke="#10d010" stroke-width="0.7"/><line x1="194" y1="397.65" x2="195.1" y2="397.65" stroke="#10d010" stroke-width="0.7"/><line x1="196.5" y1="398.19" x2="196.5" y2="403.16" stroke="#00ff00" stroke-width="1.0"/><line x1="195.4" y1="398.59" x2="196.5" y2="398.59" stroke="#00ff00" stroke-width="0.7"/><line x1="196.5" y1="400.42" x2="197.6" y2="400.42" stroke="#00ff00" stroke-width="0.7"/><line x1="199.5" y1="394.54" x2="199.5" y2="402.27" stroke="#00ff00" stroke-width="1.0"/><line x1="198.4" y1="401.22" x2="199.5" y2="401.22" stroke="#00ff00" stroke-width="0.7"/><line x1="199.5" y1="396.69" x2="200.6" y2="396.69" stroke="#00ff00" stroke-width="0.7"/><line x1="202.44" y1="390.94" x2="202.44" y2="396.57" stroke="#10d010" stroke-width="1.0"/><line x1="201.34" y1="396.33" x2="202.44" y2="396.33" stroke="#10d010" stroke-width="0.7"/><line x1="202.44" y1="391.79" x2="203.54" y2="391.79" stroke="#10d010" stroke-width="0.7"/><line x1="205.5" y1="387.14" x2="205.5" y2="398.22" stroke="#00ff00" stroke-width="1.0"/><line x1="204.4" y1="392.51" x2="205.5" y2="392.51" stroke="#00ff00" stroke-width="0.7"/><line x1="205.5" y1="393.67" x2="206.6" y2="393.67" stroke="#00ff00" stroke-width="0.7"/><line x1="208.5" y1="387.2" x2="208.5" y2="405.27" stroke="#00ff00" stroke-width="1.0"/><line x1="207.4" y1="393.87" x2="208.5" y2="393.87" stroke="#00ff00" stroke-width="0.7"/><line x1="208.5" y1="397.44" x2="209.6" y2="397.44" stroke="#00ff00" stroke-width="0.7"/><line x1="210.88" y1="402.48" x2="210.88" y2="410.94" stroke="#10d010" stroke-width="1.0"/><line x1="209.78" y1="407.71" x2="210.88" y2="407.71" stroke="#10d010" stroke-width="0.7"/><line x1="210.88" y1="408.2" x2="211.97" y2="408.2" stroke="#10d010" stroke-width="0.7"/><line x1="213.5" y1="407.37" x2="213.5" y2="413.68" stroke="#00ff00" stroke-width="1.0"/><line x1="212.4" y1="412.89" x2="213.5" y2="412.89" stroke="#00ff00" stroke-width="0.7"/><line x1="213.5" y1="412.4" x2="214.6" y2="412.4" stroke="#00ff00" stroke-width="0.7"/><line x1="216.5" y1="410.41" x2="216.5" y2="416.4" stroke="#00ff00" stroke-width="1.0"/><line x1="215.4" y1="414.21" x2="216.5" y2="414.21" stroke="#00ff00" stroke-width="0.7"/><line x1="216.5" y1="410.78" x2="217.6" y2="410.78" stroke="#00ff00" stroke-width="0.7"/><line x1="219.31" y1="412.18" x2="219.31" y2="416.48" stroke="#10d010" stroke-width="1.0"/><line x1="218.21" y1="413.64" x2="219.31" y2="413.64" stroke="#10d010" stroke-width="0.7"/><line x1="219.31" y1="412.41" x2="220.41" y2="412.41" stroke="#10d010" stroke-width="0.7"/><line x1="222.5" y1="411.26" x2="222.5" y2="419.28" stroke="#00ff00" stroke-width="1.0"/><line x1="221.4" y1="414.18" x2="222.5" y2="414.18" stroke="#00ff00" stroke-width="0.7"/><line x1="222.5" y1="411.47" x2="223.6" y2="411.47" stroke="#00ff00" stroke-width="0.7"/><line x1="224.5" y1="402.74" x2="224.5" y2="420.34" stroke="#00ff00" stroke-width="1.0"/><line x1="223.4" y1="407.18" x2="224.5" y2="407.18" stroke="#00ff00" stroke-width="0.7"/><line x1="224.5" y1="408.86" x2="225.6" y2="408.86" stroke="#00ff00" stroke-width="0.7"/><line x1="227.75" y1="398.17" x2="227.75" y2="406.94" stroke="#10d010" stroke-width="1.0"/><line x1="226.65" y1="406.88" x2="227.75" y2="406.88" stroke="#10d010" stroke-width="0.7"/><line x1="227.75" y1="402.26" x2="228.85" y2="402.26" stroke="#10d010" stroke-width="0.7"/><line x1="230.5" y1="398.04" x2="230.5" y2="404.99" stroke="#00ff00" stroke-width="1.0"/><line x1="229.4" y1="400.42" x2="230.5" y2="400.42" stroke="#00ff00" stroke-width="0.7"/><line x1="230.5" y1="399.88" x2="231.6" y2="399.88" stroke="#00ff00" stroke-width="0.7"/><line x1="233.5" y1="397.31" x2="233.5" y2="403.85" stroke="#00ff00" stroke-width="1.0"/><line x1="232.4" y1="403.53" x2="233.5" y2="403.53" stroke="#00ff00" stroke-width="0.7"/><line x1="233.5" y1="400.76" x2="234.6" y2="400.76" stroke="#00ff00" stroke-width="0.7"/><line x1="236.19" y1="395.55" x2="236.19" y2="403.63" stroke="#10d010" stroke-width="1.0"/><line x1="235.09" y1="399.82" x2="236.19" y2="399.82" stroke="#10d010" stroke-width="0.7"/><line x1="236.19" y1="403.46" x2="237.29" y2="403.46" stroke="#10d010" stroke-width="0.7"/><line x1="239.5" y1="396.53" x2="239.5" y2="405.77" stroke="#00ff00" stroke-width="1.0"/><line x1="238.4" y1="399.92" x2="239.5" y2="399.92" stroke="#00ff00" stroke-width="0.7"/><line x1="239.5" y1="398.07" x2="240.6" y2="398.07" stroke="#00ff00" stroke-width="0.7"/><line x1="241.5" y1="393.53" x2="241.5" y2="404.36" stroke="#00ff00" stroke-width="1.0"/><line x1="240.4" y1="397.1" x2="241.5" y2="397.1" stroke="#00ff00" stroke-width="0.7"/><line x1="241.5" y1="395.94" x2="242.6" y2="395.94" stroke="#00ff00" stroke-width="0.7"/><line x1="244.62" y1="395.93" x2="244.62" y2="407.39" stroke="#10d010" stroke-width="1.0"/><line x1="243.53" y1="405.17" x2="244.62" y2="405.17" stroke="#10d010" stroke-width="0.7"/><line x1="244.62" y1="405.31" x2="245.72" y2="405.31" stroke="#10d010" stroke-width="0.7"/><line x1="247.5" y1="397.09" x2="247.5" y2="406.22" stroke="#00ff00" stroke-width="1.0"/><line x1="246.4" y1="400.34" x2="247.5" y2="400.34" stroke="#00ff00" stroke-width="0.7"/><line x1="247.5" y1="397.36" x2="248.6" y2="397.36" stroke="#00ff00" stroke-width="0.7"/><line x1="250.5" y1="398.25" x2="250.5" y2="405.7" stroke="#00ff00" stroke-width="1.0"/><line x1="249.4" y1="403.41" x2="250.5" y2="403.41" stroke="#00ff00" stroke-width="0.7"/><line x1="250.5" y1="405.37" x2="251.6" y2="405.37" stroke="#00ff00" stroke-width="0.7"/><line x1="253.06" y1="401.63" x2="253.06" y2="406.01" stroke="#10d010" stroke-width="1.0"/><line x1="251.96" y1="405.81" x2="253.06" y2="405.81" stroke="#10d010" stroke-width="0.7"/><line x1="253.06" y1="403.22" x2="254.16" y2="403.22" stroke="#10d010" stroke-width="0.7"/><line x1="255.5" y1="404.19" x2="255.5" y2="418.85" stroke="#00ff00" stroke-width="1.0"/><line x1="254.4" y1="407.18" x2="255.5" y2="407.18" stroke="#00ff00" stroke-width="0.7"/><line x1="255.5" y1="413.34" x2="256.6" y2="413.34" stroke="#00ff00" stroke-width="0.7"/><line x1="258.5" y1="411.67" x2="258.5" y2="422.15" stroke="#00ff00" stroke-width="1.0"/><line x1="257.4" y1="418.51" x2="258.5" y2="418.51" stroke="#00ff00" stroke-width="0.7"/><line x1="258.5" y1="420.05" x2="259.6" y2="420.05" stroke="#00ff00" stroke-width="0.7"/><line x1="261.5" y1="411.34" x2="261.5" y2="417.61" stroke="#10d010" stroke-width="1.0"/><line x1="260.4" y1="416.24" x2="261.5" y2="416.24" stroke="#10d010" stroke-width="0.7"/><line x1="261.5" y1="416.04" x2="262.6" y2="416.04" stroke="#10d010" stroke-width="0.7"/><line x1="264.5" y1="409.62" x2="264.5" y2="415.92" stroke="#00ff00" stroke-width="1.0"/><line x1="263.4" y1="411.72" x2="264.5" y2="411.72" stroke="#00ff00" stroke-width="0.7"/><line x1="264.5" y1="414.67" x2="265.6" y2="414.67" stroke="#00ff00" stroke-width="0.7"/><line x1="267.5" y1="408.62" x2="267.5" y2="414.54" stroke="#00ff00" stroke-width="1.0"/><line x1="266.4" y1="414.22" x2="267.5" y2="414.22" stroke="#00ff00" stroke-width="0.7"/><line x1="267.5" y1="412.91" x2="268.6" y2="412.91" stroke="#00ff00" stroke-width="0.7"/><line x1="269.94" y1="408.54" x2="269.94" y2="421.15" stroke="#10d010" stroke-width="1.0"/><line x1="268.84" y1="419.95" x2="269.94" y2="419.95" stroke="#10d010" stroke-width="0.7"/><line x1="269.94" y1="418.71" x2="271.04" y2="418.71" stroke="#10d010" stroke-width="0.7"/><line x1="272.5" y1="419.74" x2="272.5" y2="436.97" stroke="#00ff00" stroke-width="1.0"/><line x1="271.4" y1="431.06" x2="272.5" y2="431.06" stroke="#00ff00" stroke-width="0.7"/><line x1="272.5" y1="425.78" x2="273.6" y2="425.78" stroke="#00ff00" stroke-width="0.7"/><line x1="275.5" y1="437.83" x2="275.5" y2="449.73" stroke="#00ff00" stroke-width="1.0"/><line x1="274.4" y1="449.38" x2="275.5" y2="449.38" stroke="#00ff00" stroke-width="0.7"/><line x1="275.5" y1="445.56" x2="276.6" y2="445.56" stroke="#00ff00" stroke-width="0.7"/><line x1="278.38" y1="439.46" x2="278.38" y2="446.96" stroke="#10d010" stroke-width="1.0"/><line x1="277.27" y1="446" x2="278.38" y2="446" stroke="#10d010" stroke-width="0.7"/><line x1="278.38" y1="445.66" x2="279.48" y2="445.66" stroke="#10d010" stroke-width="0.7"/><line x1="281.5" y1="437.74" x2="281.5" y2="442.77" stroke="#00ff00" stroke-width="1.0"/><line x1="280.4" y1="438.95" x2="281.5" y2="438.95" stroke="#00ff00" stroke-width="0.7"/><line x1="281.5" y1="440.69" x2="282.6" y2="440.69" stroke="#00ff00" stroke-width="0.7"/><line x1="284.5" y1="437.08" x2="284.5" y2="444.49" stroke="#00ff00" stroke-width="1.0"/><line x1="283.4" y1="443.83" x2="284.5" y2="443.83" stroke="#00ff00" stroke-width="0.7"/><line x1="284.5" y1="439.7" x2="285.6" y2="439.7" stroke="#00ff00" stroke-width="0.7"/><line x1="286.81" y1="436.7" x2="286.81" y2="444.63" stroke="#10d010" stroke-width="1.0"/><line x1="285.71" y1="440.04" x2="286.81" y2="440.04" stroke="#10d010" stroke-width="0.7"/><line x1="286.81" y1="443.98" x2="287.91" y2="443.98" stroke="#10d010" stroke-width="0.7"/><line x1="289.5" y1="436.32" x2="289.5" y2="443.03" stroke="#00ff00" stroke-width="1.0"/><line x1="288.4" y1="436.45" x2="289.5" y2="436.45" stroke="#00ff00" stroke-width="0.7"/><line x1="289.5" y1="439.27" x2="290.6" y2="439.27" stroke="#00ff00" stroke-width="0.7"/><line x1="292.5" y1="431.02" x2="292.5" y2="442.04" stroke="#00ff00" stroke-width="1.0"/><line x1="291.4" y1="432.92" x2="292.5" y2="432.92" stroke="#00ff00" stroke-width="0.7"/><line x1="292.5" y1="436.24" x2="293.6" y2="436.24" stroke="#00ff00" stroke-width="0.7"/><line x1="295.25" y1="432.93" x2="295.25" y2="445.48" stroke="#10d010" stroke-width="1.0"/><line x1="294.15" y1="439.43" x2="295.25" y2="439.43" stroke="#10d010" stroke-width="0.7"/><line x1="295.25" y1="439.9" x2="296.35" y2="439.9" stroke="#10d010" stroke-width="0.7"/><line x1="298.5" y1="431.5" x2="298.5" y2="440.53" stroke="#00ff00" stroke-width="1.0"/><line x1="297.4" y1="433.75" x2="298.5" y2="433.75" stroke="#00ff00" stroke-width="0.7"/><line x1="298.5" y1="434" x2="299.6" y2="434" stroke="#00ff00" stroke-width="0.7"/><line x1="300.5" y1="432.49" x2="300.5" y2="437.9" stroke="#00ff00" stroke-width="1.0"/><line x1="299.4" y1="436.6" x2="300.5" y2="436.6" stroke="#00ff00" stroke-width="0.7"/><line x1="300.5" y1="437.42" x2="301.6" y2="437.42" stroke="#00ff00" stroke-width="0.7"/><line x1="303.69" y1="432.12" x2="303.69" y2="437.39" stroke="#10d010" stroke-width="1.0"/><line x1="302.59" y1="434.82" x2="303.69" y2="434.82" stroke="#10d010" stroke-width="0.7"/><line x1="303.69" y1="435.77" x2="304.79" y2="435.77" stroke="#10d010" stroke-width="0.7"/><line x1="306.5" y1="424.72" x2="306.5" y2="433.5" stroke="#00ff00" stroke-width="1.0"/><line x1="305.4" y1="432.99" x2="306.5" y2="432.99" stroke="#00ff00" stroke-width="0.7"/><line x1="306.5" y1="430.86" x2="307.6" y2="430.86" stroke="#00ff00" stroke-width="0.7"/><line x1="309.5" y1="422.33" x2="309.5" y2="432.76" stroke="#00ff00" stroke-width="1.0"/><line x1="308.4" y1="428.16" x2="309.5" y2="428.16" stroke="#00ff00" stroke-width="0.7"/><line x1="309.5" y1="432.17" x2="310.6" y2="432.17" stroke="#00ff00" stroke-width="0.7"/><line x1="312.12" y1="418.68" x2="312.12" y2="432.74" stroke="#10d010" stroke-width="1.0"/><line x1="311.02" y1="424.9" x2="312.12" y2="424.9" stroke="#10d010" stroke-width="0.7"/><line x1="312.12" y1="419.7" x2="313.23" y2="419.7" stroke="#10d010" stroke-width="0.7"/><line x1="314.5" y1="427.23" x2="314.5" y2="430.7" stroke="#00ff00" stroke-width="1.0"/><line x1="313.4" y1="429.95" x2="314.5" y2="429.95" stroke="#00ff00" stroke-width="0.7"/><line x1="314.5" y1="430.35" x2="315.6" y2="430.35" stroke="#00ff00" stroke-width="0.7"/><line x1="317.5" y1="429.53" x2="317.5" y2="432.56" stroke="#00ff00" stroke-width="1.0"/><line x1="316.4" y1="429.96" x2="317.5" y2="429.96" stroke="#00ff00" stroke-width="0.7"/><line x1="317.5" y1="432.2" x2="318.6" y2="432.2" stroke="#00ff00" stroke-width="0.7"/><line x1="320.56" y1="430.33" x2="320.56" y2="434.41" stroke="#10d010" stroke-width="1.0"/><line x1="319.46" y1="431.95" x2="320.56" y2="431.95" stroke="#10d010" stroke-width="0.7"/><line x1="320.56" y1="432.32" x2="321.66" y2="432.32" stroke="#10d010" stroke-width="0.7"/><line x1="323.5" y1="432.95" x2="323.5" y2="439.88" stroke="#00ff00" stroke-width="1.0"/><line x1="322.4" y1="435.94" x2="323.5" y2="435.94" stroke="#00ff00" stroke-width="0.7"/><line x1="323.5" y1="436.52" x2="324.6" y2="436.52" stroke="#00ff00" stroke-width="0.7"/><line x1="326.5" y1="430.34" x2="326.5" y2="441.47" stroke="#00ff00" stroke-width="1.0"/><line x1="325.4" y1="438.38" x2="326.5" y2="438.38" stroke="#00ff00" stroke-width="0.7"/><line x1="326.5" y1="430.56" x2="327.6" y2="430.56" stroke="#00ff00" stroke-width="0.7"/><line x1="329" y1="424.96" x2="329" y2="439.8" stroke="#10d010" stroke-width="1.0"/><line x1="327.9" y1="429.88" x2="329" y2="429.88" stroke="#10d010" stroke-width="0.7"/><line x1="329" y1="434.22" x2="330.1" y2="434.22" stroke="#10d010" stroke-width="0.7"/><line x1="331.5" y1="419.89" x2="331.5" y2="432.52" stroke="#00ff00" stroke-width="1.0"/><line x1="330.4" y1="429.84" x2="331.5" y2="429.84" stroke="#00ff00" stroke-width="0.7"/><line x1="331.5" y1="432.16" x2="332.6" y2="432.16" stroke="#00ff00" stroke-width="0.7"/><line x1="334.5" y1="423.75" x2="334.5" y2="432.88" stroke="#00ff00" stroke-width="1.0"/><line x1="333.4" y1="430.86" x2="334.5" y2="430.86" stroke="#00ff00" stroke-width="0.7"/><line x1="334.5" y1="426.22" x2="335.6" y2="426.22" stroke="#00ff00" stroke-width="0.7"/><line x1="337.44" y1="428.49" x2="337.44" y2="432.49" stroke="#10d010" stroke-width="1.0"/><line x1="336.34" y1="431.76" x2="337.44" y2="431.76" stroke="#10d010" stroke-width="0.7"/><line x1="337.44" y1="429.53" x2="338.54" y2="429.53" stroke="#10d010" stroke-width="0.7"/><line x1="340.5" y1="429.97" x2="340.5" y2="437.44" stroke="#00ff00" stroke-width="1.0"/><line x1="339.4" y1="435.2" x2="340.5" y2="435.2" stroke="#00ff00" stroke-width="0.7"/><line x1="340.5" y1="430.64" x2="341.6" y2="430.64" stroke="#00ff00" stroke-width="0.7"/><line x1="343.5" y1="433.26" x2="343.5" y2="441.5" stroke="#00ff00" stroke-width="1.0"/><line x1="342.4" y1="433.86" x2="343.5" y2="433.86" stroke="#00ff00" stroke-width="0.7"/><line x1="343.5" y1="441" x2="344.6" y2="441" stroke="#00ff00" stroke-width="0.7"/><line x1="345.88" y1="431.07" x2="345.88" y2="442.49" stroke="#10d010" stroke-width="1.0"/><line x1="344.77" y1="440.85" x2="345.88" y2="440.85" stroke="#10d010" stroke-width="0.7"/><line x1="345.88" y1="431.83" x2="346.98" y2="431.83" stroke="#10d010" stroke-width="0.7"/><line x1="348.5" y1="439.22" x2="348.5" y2="449.38" stroke="#00ff00" stroke-width="1.0"/><line x1="347.4" y1="444.84" x2="348.5" y2="444.84" stroke="#00ff00" stroke-width="0.7"/><line x1="348.5" y1="448.63" x2="349.6" y2="448.63" stroke="#00ff00" stroke-width="0.7"/><line x1="351.5" y1="443.65" x2="351.5" y2="451.05" stroke="#00ff00" stroke-width="1.0"/><line x1="350.4" y1="445.41" x2="351.5" y2="445.41" stroke="#00ff00" stroke-width="0.7"/><line x1="351.5" y1="444.46" x2="352.6" y2="444.46" stroke="#00ff00" stroke-width="0.7"/><line x1="354.31" y1="446.06" x2="354.31" y2="452.94" stroke="#10d010" stroke-width="1.0"/><line x1="353.21" y1="448.2" x2="354.31" y2="448.2" stroke="#10d010" stroke-width="0.7"/><line x1="354.31" y1="448.16" x2="355.41" y2="448.16" stroke="#10d010" stroke-width="0.7"/><line x1="357.5" y1="444.03" x2="357.5" y2="452.34" stroke="#00ff00" stroke-width="1.0"/><line x1="356.4" y1="445.51" x2="357.5" y2="445.51" stroke="#00ff00" stroke-width="0.7"/><line x1="357.5" y1="446.91" x2="358.6" y2="446.91" stroke="#00ff00" stroke-width="0.7"/><line x1="359.5" y1="437.27" x2="359.5" y2="449.66" stroke="#00ff00" stroke-width="1.0"/><line x1="358.4" y1="446.35" x2="359.5" y2="446.35" stroke="#00ff00" stroke-width="0.7"/><line x1="359.5" y1="444.1" x2="360.6" y2="444.1" stroke="#00ff00" stroke-width="0.7"/><line x1="362.75" y1="435.24" x2="362.75" y2="443.51" stroke="#10d010" stroke-width="1.0"/><line x1="361.65" y1="436.12" x2="362.75" y2="436.12" stroke="#10d010" stroke-width="0.7"/><line x1="362.75" y1="442.01" x2="363.85" y2="442.01" stroke="#10d010" stroke-width="0.7"/><line x1="365.5" y1="440.6" x2="365.5" y2="445.52" stroke="#00ff00" stroke-width="1.0"/><line x1="364.4" y1="442.53" x2="365.5" y2="442.53" stroke="#00ff00" stroke-width="0.7"/><line x1="365.5" y1="443.09" x2="366.6" y2="443.09" stroke="#00ff00" stroke-width="0.7"/><line x1="368.5" y1="442.09" x2="368.5" y2="445.39" stroke="#00ff00" stroke-width="1.0"/><line x1="367.4" y1="444.83" x2="368.5" y2="444.83" stroke="#00ff00" stroke-width="0.7"/><line x1="368.5" y1="444.42" x2="369.6" y2="444.42" stroke="#00ff00" stroke-width="0.7"/><line x1="371.19" y1="435.33" x2="371.19" y2="443.2" stroke="#10d010" stroke-width="1.0"/><line x1="370.09" y1="435.76" x2="371.19" y2="435.76" stroke="#10d010" stroke-width="0.7"/><line x1="371.19" y1="436.35" x2="372.29" y2="436.35" stroke="#10d010" stroke-width="0.7"/><line x1="374.5" y1="430.31" x2="374.5" y2="441.08" stroke="#00ff00" stroke-width="1.0"/><line x1="373.4" y1="432.07" x2="374.5" y2="432.07" stroke="#00ff00" stroke-width="0.7"/><line x1="374.5" y1="431.22" x2="375.6" y2="431.22" stroke="#00ff00" stroke-width="0.7"/><line x1="376.5" y1="434.12" x2="376.5" y2="448.38" stroke="#00ff00" stroke-width="1.0"/><line x1="375.4" y1="438.14" x2="376.5" y2="438.14" stroke="#00ff00" stroke-width="0.7"/><line x1="376.5" y1="437.58" x2="377.6" y2="437.58" stroke="#00ff00" stroke-width="0.7"/><line x1="379.62" y1="437.74" x2="379.62" y2="450.49" stroke="#10d010" stroke-width="1.0"/><line x1="378.52" y1="443.43" x2="379.62" y2="443.43" stroke="#10d010" stroke-width="0.7"/><line x1="379.62" y1="441.1" x2="380.73" y2="441.1" stroke="#10d010" stroke-width="0.7"/><line x1="382.5" y1="442.78" x2="382.5" y2="448.16" stroke="#00ff00" stroke-width="1.0"/><line x1="381.4" y1="444.09" x2="382.5" y2="444.09" stroke="#00ff00" stroke-width="0.7"/><line x1="382.5" y1="447.97" x2="383.6" y2="447.97" stroke="#00ff00" stroke-width="0.7"/><line x1="385.5" y1="439.06" x2="385.5" y2="444.92" stroke="#00ff00" stroke-width="1.0"/><line x1="384.4" y1="441.3" x2="385.5" y2="441.3" stroke="#00ff00" stroke-width="0.7"/><line x1="385.5" y1="441.84" x2="386.6" y2="441.84" stroke="#00ff00" stroke-width="0.7"/><line x1="388.06" y1="437.04" x2="388.06" y2="443.05" stroke="#10d010" stroke-width="1.0"/><line x1="386.96" y1="437.07" x2="388.06" y2="437.07" stroke="#10d010" stroke-width="0.7"/><line x1="388.06" y1="438.63" x2="389.16" y2="438.63" stroke="#10d010" stroke-width="0.7"/><line x1="390.5" y1="427.71" x2="390.5" y2="440.66" stroke="#00ff00" stroke-width="1.0"/><line x1="389.4" y1="428" x2="390.5" y2="428" stroke="#00ff00" stroke-width="0.7"/><line x1="390.5" y1="431.65" x2="391.6" y2="431.65" stroke="#00ff00" stroke-width="0.7"/><line x1="393.5" y1="430.05" x2="393.5" y2="440.78" stroke="#00ff00" stroke-width="1.0"/><line x1="392.4" y1="438.1" x2="393.5" y2="438.1" stroke="#00ff00" stroke-width="0.7"/><line x1="393.5" y1="437.1" x2="394.6" y2="437.1" stroke="#00ff00" stroke-width="0.7"/><line x1="396.5" y1="436.38" x2="396.5" y2="449.87" stroke="#10d010" stroke-width="1.0"/><line x1="395.4" y1="440.78" x2="396.5" y2="440.78" stroke="#10d010" stroke-width="0.7"/><line x1="396.5" y1="449.67" x2="397.6" y2="449.67" stroke="#10d010" stroke-width="0.7"/><line x1="399.5" y1="442.32" x2="399.5" y2="460.97" stroke="#00ff00" stroke-width="1.0"/><line x1="398.4" y1="443.13" x2="399.5" y2="443.13" stroke="#00ff00" stroke-width="0.7"/><line x1="399.5" y1="457.89" x2="400.6" y2="457.89" stroke="#00ff00" stroke-width="0.7"/><line x1="402.5" y1="458.31" x2="402.5" y2="470.16" stroke="#00ff00" stroke-width="1.0"/><line x1="401.4" y1="467.93" x2="402.5" y2="467.93" stroke="#00ff00" stroke-width="0.7"/><line x1="402.5" y1="459.96" x2="403.6" y2="459.96" stroke="#00ff00" stroke-width="0.7"/><line x1="404.94" y1="464.43" x2="404.94" y2="471.74" stroke="#10d010" stroke-width="1.0"/><line x1="403.84" y1="470.31" x2="404.94" y2="470.31" stroke="#10d010" stroke-width="0.7"/><line x1="404.94" y1="470.47" x2="406.04" y2="470.47" stroke="#10d010" stroke-width="0.7"/><line x1="407.5" y1="463.06" x2="407.5" y2="472.52" stroke="#00ff00" stroke-width="1.0"/><line x1="406.4" y1="469.62" x2="407.5" y2="469.62" stroke="#00ff00" stroke-width="0.7"/><line x1="407.5" y1="465.23" x2="408.6" y2="465.23" stroke="#00ff00" stroke-width="0.7"/><line x1="410.5" y1="460.97" x2="410.5" y2="473.21" stroke="#00ff00" stroke-width="1.0"/><line x1="409.4" y1="462.25" x2="410.5" y2="462.25" stroke="#00ff00" stroke-width="0.7"/><line x1="410.5" y1="471.2" x2="411.6" y2="471.2" stroke="#00ff00" stroke-width="0.7"/><line x1="413.38" y1="458.86" x2="413.38" y2="471.1" stroke="#10d010" stroke-width="1.0"/><line x1="412.27" y1="467.19" x2="413.38" y2="467.19" stroke="#10d010" stroke-width="0.7"/><line x1="413.38" y1="464.85" x2="414.48" y2="464.85" stroke="#10d010" stroke-width="0.7"/><line x1="416.5" y1="466.74" x2="416.5" y2="472.42" stroke="#00ff00" stroke-width="1.0"/><line x1="415.4" y1="469.59" x2="416.5" y2="469.59" stroke="#00ff00" stroke-width="0.7"/><line x1="416.5" y1="469.78" x2="417.6" y2="469.78" stroke="#00ff00" stroke-width="0.7"/><line x1="419.5" y1="469.65" x2="419.5" y2="474.23" stroke="#00ff00" stroke-width="1.0"/><line x1="418.4" y1="470.8" x2="419.5" y2="470.8" stroke="#00ff00" stroke-width="0.7"/><line x1="419.5" y1="469.99" x2="420.6" y2="469.99" stroke="#00ff00" stroke-width="0.7"/><line x1="421.81" y1="470.44" x2="421.81" y2="474.76" stroke="#10d010" stroke-width="1.0"/><line x1="420.71" y1="473.63" x2="421.81" y2="473.63" stroke="#10d010" stroke-width="0.7"/><line x1="421.81" y1="474.65" x2="422.91" y2="474.65" stroke="#10d010" stroke-width="0.7"/><line x1="424.5" y1="468.03" x2="424.5" y2="474.27" stroke="#00ff00" stroke-width="1.0"/><line x1="423.4" y1="472.3" x2="424.5" y2="472.3" stroke="#00ff00" stroke-width="0.7"/><line x1="424.5" y1="472.82" x2="425.6" y2="472.82" stroke="#00ff00" stroke-width="0.7"/><line x1="427.5" y1="462.79" x2="427.5" y2="472.15" stroke="#00ff00" stroke-width="1.0"/><line x1="426.4" y1="464.17" x2="427.5" y2="464.17" stroke="#00ff00" stroke-width="0.7"/><line x1="427.5" y1="465.17" x2="428.6" y2="465.17" stroke="#00ff00" stroke-width="0.7"/><line x1="430.25" y1="452.37" x2="430.25" y2="462.79" stroke="#10d010" stroke-width="1.0"/><line x1="429.15" y1="452.5" x2="430.25" y2="452.5" stroke="#10d010" stroke-width="0.7"/><line x1="430.25" y1="453" x2="431.35" y2="453" stroke="#10d010" stroke-width="0.7"/><line x1="433.5" y1="446.65" x2="433.5" y2="454.72" stroke="#00ff00" stroke-width="1.0"/><line x1="432.4" y1="452.11" x2="433.5" y2="452.11" stroke="#00ff00" stroke-width="0.7"/><line x1="433.5" y1="449" x2="434.6" y2="449" stroke="#00ff00" stroke-width="0.7"/><line x1="435.5" y1="446" x2="435.5" y2="453.33" stroke="#00ff00" stroke-width="1.0"/><line x1="434.4" y1="446.87" x2="435.5" y2="446.87" stroke="#00ff00" stroke-width="0.7"/><line x1="435.5" y1="452.55" x2="436.6" y2="452.55" stroke="#00ff00" stroke-width="0.7"/><line x1="438.69" y1="446.87" x2="438.69" y2="451.87" stroke="#10d010" stroke-width="1.0"/><line x1="437.59" y1="446.96" x2="438.69" y2="446.96" stroke="#10d010" stroke-width="0.7"/><line x1="438.69" y1="449.16" x2="439.79" y2="449.16" stroke="#10d010" stroke-width="0.7"/><line x1="441.5" y1="446.07" x2="441.5" y2="451.79" stroke="#00ff00" stroke-width="1.0"/><line x1="440.4" y1="447.61" x2="441.5" y2="447.61" stroke="#00ff00" stroke-width="0.7"/><line x1="441.5" y1="447.27" x2="442.6" y2="447.27" stroke="#00ff00" stroke-width="0.7"/><line x1="444.5" y1="441.61" x2="444.5" y2="453.66" stroke="#00ff00" stroke-width="1.0"/><line x1="443.4" y1="443.32" x2="444.5" y2="443.32" stroke="#00ff00" stroke-width="0.7"/><line x1="444.5" y1="447.93" x2="445.6" y2="447.93" stroke="#00ff00" stroke-width="0.7"/><line x1="447.12" y1="446.31" x2="447.12" y2="465.29" stroke="#10d010" stroke-width="1.0"/><line x1="446.02" y1="455.97" x2="447.12" y2="455.97" stroke="#10d010" stroke-width="0.7"/><line x1="447.12" y1="463.15" x2="448.23" y2="463.15" stroke="#10d010" stroke-width="0.7"/><line x1="449.5" y1="453.53" x2="449.5" y2="463.28" stroke="#00ff00" stroke-width="1.0"/><line x1="448.4" y1="458.27" x2="449.5" y2="458.27" stroke="#00ff00" stroke-width="0.7"/><line x1="449.5" y1="453.77" x2="450.6" y2="453.77" stroke="#00ff00" stroke-width="0.7"/><line x1="452.5" y1="454.94" x2="452.5" y2="464.05" stroke="#00ff00" stroke-width="1.0"/><line x1="451.4" y1="457.69" x2="452.5" y2="457.69" stroke="#00ff00" stroke-width="0.7"/><line x1="452.5" y1="456.22" x2="453.6" y2="456.22" stroke="#00ff00" stroke-width="0.7"/><line x1="455.56" y1="446.93" x2="455.56" y2="458.18" stroke="#10d010" stroke-width="1.0"/><line x1="454.46" y1="446.95" x2="455.56" y2="446.95" stroke="#10d010" stroke-width="0.7"/><line x1="455.56" y1="455.38" x2="456.66" y2="455.38" stroke="#10d010" stroke-width="0.7"/><line x1="458.5" y1="438.7" x2="458.5" y2="451.49" stroke="#00ff00" stroke-width="1.0"/><line x1="457.4" y1="447.82" x2="458.5" y2="447.82" stroke="#00ff00" stroke-width="0.7"/><line x1="458.5" y1="450.23" x2="459.6" y2="450.23" stroke="#00ff00" stroke-width="0.7"/><line x1="461.5" y1="436.11" x2="461.5" y2="451.21" stroke="#00ff00" stroke-width="1.0"/><line x1="460.4" y1="451.19" x2="461.5" y2="451.19" stroke="#00ff00" stroke-width="0.7"/><line x1="461.5" y1="445.01" x2="462.6" y2="445.01" stroke="#00ff00" stroke-width="0.7"/><line x1="464" y1="439.03" x2="464" y2="454.46" stroke="#10d010" stroke-width="1.0"/><line x1="462.9" y1="439.77" x2="464" y2="439.77" stroke="#10d010" stroke-width="0.7"/><line x1="464" y1="440.6" x2="465.1" y2="440.6" stroke="#10d010" stroke-width="0.7"/><line x1="466.5" y1="444.65" x2="466.5" y2="451.99" stroke="#00ff00" stroke-width="1.0"/><line x1="465.4" y1="446.48" x2="466.5" y2="446.48" stroke="#00ff00" stroke-width="0.7"/><line x1="466.5" y1="446.6" x2="467.6" y2="446.6" stroke="#00ff00" stroke-width="0.7"/><line x1="469.5" y1="445.18" x2="469.5" y2="450.59" stroke="#00ff00" stroke-width="1.0"/><line x1="468.4" y1="450.35" x2="469.5" y2="450.35" stroke="#00ff00" stroke-width="0.7"/><line x1="469.5" y1="449.96" x2="470.6" y2="449.96" stroke="#00ff00" stroke-width="0.7"/><line x1="472.44" y1="446.07" x2="472.44" y2="450.13" stroke="#10d010" stroke-width="1.0"/><line x1="471.34" y1="449.89" x2="472.44" y2="449.89" stroke="#10d010" stroke-width="0.7"/><line x1="472.44" y1="448.3" x2="473.54" y2="448.3" stroke="#10d010" stroke-width="0.7"/><line x1="475.5" y1="433.2" x2="475.5" y2="447.89" stroke="#00ff00" stroke-width="1.0"/><line x1="474.4" y1="439.82" x2="475.5" y2="439.82" stroke="#00ff00" stroke-width="0.7"/><line x1="475.5" y1="444.26" x2="476.6" y2="444.26" stroke="#00ff00" stroke-width="0.7"/><line x1="478.5" y1="435.93" x2="478.5" y2="450.74" stroke="#00ff00" stroke-width="1.0"/><line x1="477.4" y1="449.65" x2="478.5" y2="449.65" stroke="#00ff00" stroke-width="0.7"/><line x1="478.5" y1="437.81" x2="479.6" y2="437.81" stroke="#00ff00" stroke-width="0.7"/><line x1="480.88" y1="443.16" x2="480.88" y2="452.71" stroke="#10d010" stroke-width="1.0"/><line x1="479.77" y1="450.22" x2="480.88" y2="450.22" stroke="#10d010" stroke-width="0.7"/><line x1="480.88" y1="452.49" x2="481.98" y2="452.49" stroke="#10d010" stroke-width="0.7"/><line x1="483.5" y1="446.29" x2="483.5" y2="452.31" stroke="#00ff00" stroke-width="1.0"/><line x1="482.4" y1="449.65" x2="483.5" y2="449.65" stroke="#00ff00" stroke-width="0.7"/><line x1="483.5" y1="448.67" x2="484.6" y2="448.67" stroke="#00ff00" stroke-width="0.7"/><line x1="486.5" y1="444.89" x2="486.5" y2="451.71" stroke="#00ff00" stroke-width="1.0"/><line x1="485.4" y1="451.07" x2="486.5" y2="451.07" stroke="#00ff00" stroke-width="0.7"/><line x1="486.5" y1="448.28" x2="487.6" y2="448.28" stroke="#00ff00" stroke-width="0.7"/><line x1="489.31" y1="444.87" x2="489.31" y2="449.43" stroke="#10d010" stroke-width="1.0"/><line x1="488.21" y1="446.92" x2="489.31" y2="446.92" stroke="#10d010" stroke-width="0.7"/><line x1="489.31" y1="445.5" x2="490.41" y2="445.5" stroke="#10d010" stroke-width="0.7"/><line x1="492.5" y1="444.47" x2="492.5" y2="455.51" stroke="#00ff00" stroke-width="1.0"/><line x1="491.4" y1="445.48" x2="492.5" y2="445.48" stroke="#00ff00" stroke-width="0.7"/><line x1="492.5" y1="447.11" x2="493.6" y2="447.11" stroke="#00ff00" stroke-width="0.7"/><line x1="494.5" y1="460.66" x2="494.5" y2="470.51" stroke="#00ff00" stroke-width="1.0"/><line x1="493.4" y1="468.05" x2="494.5" y2="468.05" stroke="#00ff00" stroke-width="0.7"/><line x1="494.5" y1="464.73" x2="495.6" y2="464.73" stroke="#00ff00" stroke-width="0.7"/><line x1="497.75" y1="467.8" x2="497.75" y2="478.23" stroke="#10d010" stroke-width="1.0"/><line x1="496.65" y1="471.33" x2="497.75" y2="471.33" stroke="#10d010" stroke-width="0.7"/><line x1="497.75" y1="468.45" x2="498.85" y2="468.45" stroke="#10d010" stroke-width="0.7"/><line x1="500.5" y1="471.41" x2="500.5" y2="478.47" stroke="#00ff00" stroke-width="1.0"/><line x1="499.4" y1="474.97" x2="500.5" y2="474.97" stroke="#00ff00" stroke-width="0.7"/><line x1="500.5" y1="475.86" x2="501.6" y2="475.86" stroke="#00ff00" stroke-width="0.7"/></g><line x1="149.5" y1="497.4" x2="149.5" y2="539.59" stroke="#e8e8e8" stroke-width="1"/><line x1="151.5" y1="497.4" x2="151.5" y2="542.15" stroke="#9a9a9a" stroke-width="1"/><line x1="154.5" y1="497.4" x2="154.5" y2="544.7" stroke="#e8e8e8" stroke-width="1"/><line x1="157.5" y1="497.4" x2="157.5" y2="546.89" stroke="#9a9a9a" stroke-width="1"/><line x1="160.5" y1="497.4" x2="160.5" y2="547.59" stroke="#e8e8e8" stroke-width="1"/><line x1="163.5" y1="497.4" x2="163.5" y2="548.3" stroke="#9a9a9a" stroke-width="1"/><line x1="165.5" y1="497.4" x2="165.5" y2="548.58" stroke="#e8e8e8" stroke-width="1"/><line x1="168.5" y1="497.4" x2="168.5" y2="547.18" stroke="#9a9a9a" stroke-width="1"/><line x1="171.5" y1="497.4" x2="171.5" y2="545.77" stroke="#e8e8e8" stroke-width="1"/><line x1="174.5" y1="497.4" x2="174.5" y2="544.36" stroke="#9a9a9a" stroke-width="1"/><line x1="177.5" y1="497.4" x2="177.5" y2="542.96" stroke="#e8e8e8" stroke-width="1"/><line x1="179.5" y1="497.4" x2="179.5" y2="541.22" stroke="#9a9a9a" stroke-width="1"/><line x1="182.5" y1="497.4" x2="182.5" y2="539.35" stroke="#e8e8e8" stroke-width="1"/><line x1="185.5" y1="497.4" x2="185.5" y2="537.47" stroke="#9a9a9a" stroke-width="1"/><line x1="188.5" y1="497.4" x2="188.5" y2="535.6" stroke="#e8e8e8" stroke-width="1"/><line x1="191.5" y1="497.4" x2="191.5" y2="533.91" stroke="#9a9a9a" stroke-width="1"/><line x1="194.5" y1="497.4" x2="194.5" y2="532.97" stroke="#e8e8e8" stroke-width="1"/><line x1="196.5" y1="497.4" x2="196.5" y2="532.03" stroke="#9a9a9a" stroke-width="1"/><line x1="199.5" y1="497.4" x2="199.5" y2="531.1" stroke="#e8e8e8" stroke-width="1"/><line x1="202.5" y1="497.4" x2="202.5" y2="530.16" stroke="#9a9a9a" stroke-width="1"/><line x1="205.5" y1="497.4" x2="205.5" y2="529.87" stroke="#e8e8e8" stroke-width="1"/><line x1="208.5" y1="497.4" x2="208.5" y2="529.87" stroke="#9a9a9a" stroke-width="1"/><line x1="210.5" y1="497.4" x2="210.5" y2="529.87" stroke="#e8e8e8" stroke-width="1"/><line x1="213.5" y1="497.4" x2="213.5" y2="529.87" stroke="#9a9a9a" stroke-width="1"/><line x1="216.5" y1="497.4" x2="216.5" y2="529.69" stroke="#e8e8e8" stroke-width="1"/><line x1="219.5" y1="497.4" x2="219.5" y2="528.75" stroke="#9a9a9a" stroke-width="1"/><line x1="222.5" y1="497.4" x2="222.5" y2="527.81" stroke="#e8e8e8" stroke-width="1"/><line x1="224.5" y1="497.4" x2="224.5" y2="526.88" stroke="#9a9a9a" stroke-width="1"/><line x1="227.5" y1="497.4" x2="227.5" y2="525.94" stroke="#e8e8e8" stroke-width="1"/><line x1="230.5" y1="497.4" x2="230.5" y2="524.02" stroke="#9a9a9a" stroke-width="1"/><line x1="233.5" y1="497.4" x2="233.5" y2="521.68" stroke="#e8e8e8" stroke-width="1"/><line x1="236.5" y1="497.4" x2="236.5" y2="519.34" stroke="#9a9a9a" stroke-width="1"/><line x1="239.5" y1="497.4" x2="239.5" y2="516.99" stroke="#e8e8e8" stroke-width="1"/><line x1="241.5" y1="497.4" x2="241.5" y2="515.01" stroke="#9a9a9a" stroke-width="1"/><line x1="244.5" y1="497.4" x2="244.5" y2="514.55" stroke="#e8e8e8" stroke-width="1"/><line x1="247.5" y1="497.4" x2="247.5" y2="514.08" stroke="#9a9a9a" stroke-width="1"/><line x1="250.5" y1="497.4" x2="250.5" y2="513.61" stroke="#e8e8e8" stroke-width="1"/><line x1="253.5" y1="497.4" x2="253.5" y2="513.14" stroke="#9a9a9a" stroke-width="1"/><line x1="255.5" y1="497.4" x2="255.5" y2="512.67" stroke="#e8e8e8" stroke-width="1"/><line x1="258.5" y1="497.4" x2="258.5" y2="512.2" stroke="#9a9a9a" stroke-width="1"/><line x1="261.5" y1="497.4" x2="261.5" y2="511.73" stroke="#e8e8e8" stroke-width="1"/><line x1="264.5" y1="497.4" x2="264.5" y2="511.26" stroke="#9a9a9a" stroke-width="1"/><line x1="267.5" y1="497.4" x2="267.5" y2="511.34" stroke="#e8e8e8" stroke-width="1"/><line x1="269.5" y1="497.4" x2="269.5" y2="513.68" stroke="#9a9a9a" stroke-width="1"/><line x1="272.5" y1="497.4" x2="272.5" y2="516.03" stroke="#e8e8e8" stroke-width="1"/><line x1="275.5" y1="497.4" x2="275.5" y2="518.37" stroke="#9a9a9a" stroke-width="1"/><line x1="278.5" y1="497.4" x2="278.5" y2="520.71" stroke="#e8e8e8" stroke-width="1"/><line x1="281.5" y1="497.4" x2="281.5" y2="522.41" stroke="#9a9a9a" stroke-width="1"/><line x1="284.5" y1="497.4" x2="284.5" y2="523.81" stroke="#e8e8e8" stroke-width="1"/><line x1="286.5" y1="497.4" x2="286.5" y2="525.22" stroke="#9a9a9a" stroke-width="1"/><line x1="289.5" y1="497.4" x2="289.5" y2="526.63" stroke="#e8e8e8" stroke-width="1"/><line x1="292.5" y1="497.4" x2="292.5" y2="527.67" stroke="#9a9a9a" stroke-width="1"/><line x1="295.5" y1="497.4" x2="295.5" y2="527.21" stroke="#e8e8e8" stroke-width="1"/><line x1="298.5" y1="497.4" x2="298.5" y2="526.74" stroke="#9a9a9a" stroke-width="1"/><line x1="300.5" y1="497.4" x2="300.5" y2="526.27" stroke="#e8e8e8" stroke-width="1"/><line x1="303.5" y1="497.4" x2="303.5" y2="525.8" stroke="#9a9a9a" stroke-width="1"/><line x1="306.5" y1="497.4" x2="306.5" y2="524.03" stroke="#e8e8e8" stroke-width="1"/><line x1="309.5" y1="497.4" x2="309.5" y2="521.69" stroke="#9a9a9a" stroke-width="1"/><line x1="312.5" y1="497.4" x2="312.5" y2="519.35" stroke="#e8e8e8" stroke-width="1"/><line x1="314.5" y1="497.4" x2="314.5" y2="517" stroke="#9a9a9a" stroke-width="1"/><line x1="317.5" y1="497.4" x2="317.5" y2="514.84" stroke="#e8e8e8" stroke-width="1"/><line x1="320.5" y1="497.4" x2="320.5" y2="513.43" stroke="#9a9a9a" stroke-width="1"/><line x1="323.5" y1="497.4" x2="323.5" y2="512.03" stroke="#e8e8e8" stroke-width="1"/><line x1="326.5" y1="497.4" x2="326.5" y2="510.62" stroke="#9a9a9a" stroke-width="1"/><line x1="329.5" y1="497.4" x2="329.5" y2="509.21" stroke="#e8e8e8" stroke-width="1"/><line x1="331.5" y1="497.4" x2="331.5" y2="508.78" stroke="#9a9a9a" stroke-width="1"/><line x1="334.5" y1="497.4" x2="334.5" y2="508.78" stroke="#e8e8e8" stroke-width="1"/><line x1="337.5" y1="497.4" x2="337.5" y2="508.78" stroke="#9a9a9a" stroke-width="1"/><line x1="340.5" y1="497.4" x2="340.5" y2="508.78" stroke="#e8e8e8" stroke-width="1"/><line x1="343.5" y1="497.4" x2="343.5" y2="508.86" stroke="#9a9a9a" stroke-width="1"/><line x1="345.5" y1="497.4" x2="345.5" y2="509.33" stroke="#e8e8e8" stroke-width="1"/><line x1="348.5" y1="497.4" x2="348.5" y2="509.8" stroke="#9a9a9a" stroke-width="1"/><line x1="351.5" y1="497.4" x2="351.5" y2="510.27" stroke="#e8e8e8" stroke-width="1"/><line x1="354.5" y1="497.4" x2="354.5" y2="510.74" stroke="#9a9a9a" stroke-width="1"/><line x1="357.5" y1="497.4" x2="357.5" y2="511.21" stroke="#e8e8e8" stroke-width="1"/><line x1="359.5" y1="497.4" x2="359.5" y2="511.68" stroke="#9a9a9a" stroke-width="1"/><line x1="362.5" y1="497.4" x2="362.5" y2="512.15" stroke="#e8e8e8" stroke-width="1"/><line x1="365.5" y1="497.4" x2="365.5" y2="512.61" stroke="#9a9a9a" stroke-width="1"/><line x1="368.5" y1="497.4" x2="368.5" y2="512.82" stroke="#e8e8e8" stroke-width="1"/><line x1="371.5" y1="497.4" x2="371.5" y2="511.88" stroke="#9a9a9a" stroke-width="1"/><line x1="374.5" y1="497.4" x2="374.5" y2="510.95" stroke="#e8e8e8" stroke-width="1"/><line x1="376.5" y1="497.4" x2="376.5" y2="510.01" stroke="#9a9a9a" stroke-width="1"/><line x1="379.5" y1="497.4" x2="379.5" y2="509.07" stroke="#e8e8e8" stroke-width="1"/><line x1="382.5" y1="497.4" x2="382.5" y2="508.13" stroke="#9a9a9a" stroke-width="1"/><line x1="385.5" y1="497.4" x2="385.5" y2="507.2" stroke="#e8e8e8" stroke-width="1"/><line x1="388.5" y1="497.4" x2="388.5" y2="506.26" stroke="#9a9a9a" stroke-width="1"/><line x1="390.5" y1="497.4" x2="390.5" y2="505.32" stroke="#e8e8e8" stroke-width="1"/><line x1="393.5" y1="497.4" x2="393.5" y2="504.91" stroke="#9a9a9a" stroke-width="1"/><line x1="396.5" y1="497.4" x2="396.5" y2="506.78" stroke="#e8e8e8" stroke-width="1"/><line x1="399.5" y1="497.4" x2="399.5" y2="508.66" stroke="#9a9a9a" stroke-width="1"/><line x1="402.5" y1="497.4" x2="402.5" y2="510.53" stroke="#e8e8e8" stroke-width="1"/><line x1="404.5" y1="497.4" x2="404.5" y2="512.41" stroke="#9a9a9a" stroke-width="1"/><line x1="407.5" y1="497.4" x2="407.5" y2="513.96" stroke="#e8e8e8" stroke-width="1"/><line x1="410.5" y1="497.4" x2="410.5" y2="515.37" stroke="#9a9a9a" stroke-width="1"/><line x1="413.5" y1="497.4" x2="413.5" y2="516.77" stroke="#e8e8e8" stroke-width="1"/><line x1="416.5" y1="497.4" x2="416.5" y2="518.18" stroke="#9a9a9a" stroke-width="1"/><line x1="419.5" y1="497.4" x2="419.5" y2="519.24" stroke="#e8e8e8" stroke-width="1"/><line x1="421.5" y1="497.4" x2="421.5" y2="518.77" stroke="#9a9a9a" stroke-width="1"/><line x1="424.5" y1="497.4" x2="424.5" y2="518.3" stroke="#e8e8e8" stroke-width="1"/><line x1="427.5" y1="497.4" x2="427.5" y2="517.83" stroke="#9a9a9a" stroke-width="1"/><line x1="430.5" y1="497.4" x2="430.5" y2="517.36" stroke="#e8e8e8" stroke-width="1"/><line x1="433.5" y1="497.4" x2="433.5" y2="515.61" stroke="#9a9a9a" stroke-width="1"/><line x1="435.5" y1="497.4" x2="435.5" y2="513.27" stroke="#e8e8e8" stroke-width="1"/><line x1="438.5" y1="497.4" x2="438.5" y2="510.92" stroke="#9a9a9a" stroke-width="1"/><line x1="441.5" y1="497.4" x2="441.5" y2="508.58" stroke="#e8e8e8" stroke-width="1"/><line x1="444.5" y1="497.4" x2="444.5" y2="506.41" stroke="#9a9a9a" stroke-width="1"/><line x1="447.5" y1="497.4" x2="447.5" y2="505" stroke="#e8e8e8" stroke-width="1"/><line x1="449.5" y1="497.4" x2="449.5" y2="503.6" stroke="#9a9a9a" stroke-width="1"/><line x1="452.5" y1="497.4" x2="452.5" y2="502.19" stroke="#e8e8e8" stroke-width="1"/><line x1="455.5" y1="497.4" x2="455.5" y2="500.78" stroke="#9a9a9a" stroke-width="1"/><line x1="458.5" y1="497.4" x2="458.5" y2="499.83" stroke="#e8e8e8" stroke-width="1"/><line x1="461.5" y1="497.4" x2="461.5" y2="499.08" stroke="#9a9a9a" stroke-width="1"/><line x1="464.5" y1="497.4" x2="464.5" y2="498.33" stroke="#e8e8e8" stroke-width="1"/><line x1="466.5" y1="497.4" x2="466.5" y2="497.58" stroke="#9a9a9a" stroke-width="1"/><line x1="469.5" y1="497.4" x2="469.5" y2="496.89" stroke="#e8e8e8" stroke-width="1"/><line x1="472.5" y1="497.4" x2="472.5" y2="496.52" stroke="#9a9a9a" stroke-width="1"/><line x1="475.5" y1="497.4" x2="475.5" y2="496.14" stroke="#e8e8e8" stroke-width="1"/><line x1="478.5" y1="497.4" x2="478.5" y2="495.77" stroke="#9a9a9a" stroke-width="1"/><line x1="480.5" y1="497.4" x2="480.5" y2="495.39" stroke="#e8e8e8" stroke-width="1"/><line x1="483.5" y1="497.4" x2="483.5" y2="495.27" stroke="#9a9a9a" stroke-width="1"/><line x1="486.5" y1="497.4" x2="486.5" y2="495.27" stroke="#e8e8e8" stroke-width="1"/><line x1="489.5" y1="497.4" x2="489.5" y2="495.27" stroke="#9a9a9a" stroke-width="1"/><line x1="492.5" y1="497.4" x2="492.5" y2="495.27" stroke="#e8e8e8" stroke-width="1"/><line x1="494.5" y1="497.4" x2="494.5" y2="496.14" stroke="#9a9a9a" stroke-width="1"/><line x1="497.5" y1="497.4" x2="497.5" y2="500.92" stroke="#e8e8e8" stroke-width="1"/><line x1="500.5" y1="497.4" x2="500.5" y2="504.84" stroke="#9a9a9a" stroke-width="1"/><polyline points="147.59,536.2 161.1,542.53 173.76,546.75 186.41,542.53 199.07,536.2 211.73,531.98 224.39,531.98 237.05,523.54 249.7,515.11 262.36,513 275.02,515.11 287.68,523.54 300.34,527.76 313,521.43 325.65,510.89 338.31,506.67 350.97,508.78 363.63,513 376.29,510.89 388.95,506.67 401.6,508.78 414.26,517.22 426.92,519.32 439.58,513 452.24,504.56 464.89,496.96 477.55,496.12 490.21,494.01 498.65,496.12" fill="none" stroke="#ff1010" stroke-width="1.3" stroke-dasharray="1.3 2.2"/><line x1="509" y1="356.1" x2="512" y2="356.1" stroke="#a0a0a0" stroke-width="1"/><text transform="translate(514 358.7) scale(0.9 1)" fill="#fff" font-size="7.3" text-anchor="start" >0.9315</text><line x1="509" y1="381.3" x2="512" y2="381.3" stroke="#a0a0a0" stroke-width="1"/><text transform="translate(514 383.9) scale(0.9 1)" fill="#fff" font-size="7.3" text-anchor="start" >0.9265</text><line x1="509" y1="406.6" x2="512" y2="406.6" stroke="#a0a0a0" stroke-width="1"/><text transform="translate(514 409.2) scale(0.9 1)" fill="#fff" font-size="7.3" text-anchor="start" >0.9215</text><line x1="509" y1="431.9" x2="512" y2="431.9" stroke="#a0a0a0" stroke-width="1"/><text transform="translate(514 434.5) scale(0.9 1)" fill="#fff" font-size="7.3" text-anchor="start" >0.9165</text><line x1="509" y1="457.2" x2="512" y2="457.2" stroke="#a0a0a0" stroke-width="1"/><text transform="translate(514 459.8) scale(0.9 1)" fill="#fff" font-size="7.3" text-anchor="start" >0.9115</text><line x1="509" y1="483" x2="512" y2="483" stroke="#a0a0a0" stroke-width="1"/><text transform="translate(514 485.6) scale(0.9 1)" fill="#fff" font-size="7.3" text-anchor="start" >0.9065</text><rect x="511.3" y="470.1" width="25.6" height="7.8" fill="#fff"/><text transform="translate(514 476.6) scale(0.9 1)" fill="#000" font-size="7.3" text-anchor="start" >0.9083</text><text transform="translate(514 495.2) scale(0.9 1)" fill="#fff" font-size="7.3" text-anchor="start" >0.00062</text><text transform="translate(514 499.9) scale(0.9 1)" fill="#fff" font-size="7.3" text-anchor="start" >0.00</text><text transform="translate(514 551) scale(0.9 1)" fill="#fff" font-size="7.3" text-anchor="start" >-0.00403</text><line x1="147.6" y1="552" x2="147.6" y2="555" stroke="#a0a0a0" stroke-width="1"/><text transform="translate(147.6 561.6) scale(0.9 1)" fill="#fff" font-size="7.3" text-anchor="start" >7 Apr 2021</text><line x1="192.7" y1="552" x2="192.7" y2="555" stroke="#a0a0a0" stroke-width="1"/><text transform="translate(192.7 561.6) scale(0.9 1)" fill="#fff" font-size="7.3" text-anchor="start" >12 Apr 15:00</text><line x1="238" y1="552" x2="238" y2="555" stroke="#a0a0a0" stroke-width="1"/><text transform="translate(238 561.6) scale(0.9 1)" fill="#fff" font-size="7.3" text-anchor="start" >15 Apr 07:00</text><line x1="283.5" y1="552" x2="283.5" y2="555" stroke="#a0a0a0" stroke-width="1"/><text transform="translate(283.5 561.6) scale(0.9 1)" fill="#fff" font-size="7.3" text-anchor="start" >19 Apr 23:00</text><line x1="328.5" y1="552" x2="328.5" y2="555" stroke="#a0a0a0" stroke-width="1"/><text transform="translate(328.5 561.6) scale(0.9 1)" fill="#fff" font-size="7.3" text-anchor="start" >22 Apr 15:00</text><line x1="373.5" y1="552" x2="373.5" y2="555" stroke="#a0a0a0" stroke-width="1"/><text transform="translate(373.5 561.6) scale(0.9 1)" fill="#fff" font-size="7.3" text-anchor="start" >27 Apr 07:00</text><line x1="418.5" y1="552" x2="418.5" y2="555" stroke="#a0a0a0" stroke-width="1"/><text transform="translate(418.5 561.6) scale(0.9 1)" fill="#fff" font-size="7.3" text-anchor="start" >29 Apr 23:00</text><line x1="463.5" y1="552" x2="463.5" y2="555" stroke="#a0a0a0" stroke-width="1"/><text transform="translate(463.5 561.6) scale(0.9 1)" fill="#fff" font-size="7.3" text-anchor="start" >4 May 15:00</text><text transform="translate(151 359.5) scale(0.9 1)" fill="#fff" font-size="7.3" text-anchor="start" >USDCHF,H4&#160;&#160;0.9076 0.9087 0.9073 0.9083</text><text transform="translate(151 495) scale(0.9 1)" fill="#fff" font-size="7.3" text-anchor="start" >MACD(12,26,9) -0.00081 0.00002</text><rect x="551.5" y="350" width="393.5" height="217.8" fill="#000"/><path d="M551 567.8V349.5H945" fill="none" stroke="#707070" stroke-width="1"/><path d="M551.5 568.3H945.5V350" fill="none" stroke="#f4f8fc" stroke-width="1"/><line x1="577.5" y1="352.7" x2="577.5" y2="553" stroke="#95a0b0" stroke-width="1" stroke-dasharray="2.4 2.1"/><line x1="600.06" y1="352.7" x2="600.06" y2="553" stroke="#95a0b0" stroke-width="1" stroke-dasharray="2.4 2.1"/><line x1="622.62" y1="352.7" x2="622.62" y2="553" stroke="#95a0b0" stroke-width="1" stroke-dasharray="2.4 2.1"/><line x1="645.18" y1="352.7" x2="645.18" y2="553" stroke="#95a0b0" stroke-width="1" stroke-dasharray="2.4 2.1"/><line x1="667.74" y1="352.7" x2="667.74" y2="553" stroke="#95a0b0" stroke-width="1" stroke-dasharray="2.4 2.1"/><line x1="690.3" y1="352.7" x2="690.3" y2="553" stroke="#95a0b0" stroke-width="1" stroke-dasharray="2.4 2.1"/><line x1="712.86" y1="352.7" x2="712.86" y2="553" stroke="#95a0b0" stroke-width="1" stroke-dasharray="2.4 2.1"/><line x1="735.42" y1="352.7" x2="735.42" y2="553" stroke="#95a0b0" stroke-width="1" stroke-dasharray="2.4 2.1"/><line x1="757.98" y1="352.7" x2="757.98" y2="553" stroke="#95a0b0" stroke-width="1" stroke-dasharray="2.4 2.1"/><line x1="780.54" y1="352.7" x2="780.54" y2="553" stroke="#95a0b0" stroke-width="1" stroke-dasharray="2.4 2.1"/><line x1="803.1" y1="352.7" x2="803.1" y2="553" stroke="#95a0b0" stroke-width="1" stroke-dasharray="2.4 2.1"/><line x1="825.66" y1="352.7" x2="825.66" y2="553" stroke="#95a0b0" stroke-width="1" stroke-dasharray="2.4 2.1"/><line x1="848.22" y1="352.7" x2="848.22" y2="553" stroke="#95a0b0" stroke-width="1" stroke-dasharray="2.4 2.1"/><line x1="870.78" y1="352.7" x2="870.78" y2="553" stroke="#95a0b0" stroke-width="1" stroke-dasharray="2.4 2.1"/><line x1="893.34" y1="352.7" x2="893.34" y2="553" stroke="#95a0b0" stroke-width="1" stroke-dasharray="2.4 2.1"/><line x1="554.7" y1="364" x2="916.6" y2="364" stroke="#95a0b0" stroke-width="1" stroke-dasharray="2.4 2.1"/><line x1="554.7" y1="387.9" x2="916.6" y2="387.9" stroke="#95a0b0" stroke-width="1" stroke-dasharray="2.4 2.1"/><line x1="554.7" y1="411.8" x2="916.6" y2="411.8" stroke="#95a0b0" stroke-width="1" stroke-dasharray="2.4 2.1"/><line x1="554.7" y1="435.7" x2="916.6" y2="435.7" stroke="#95a0b0" stroke-width="1" stroke-dasharray="2.4 2.1"/><line x1="554.7" y1="459.6" x2="916.6" y2="459.6" stroke="#95a0b0" stroke-width="1" stroke-dasharray="2.4 2.1"/><line x1="554.7" y1="483.5" x2="916.6" y2="483.5" stroke="#95a0b0" stroke-width="1" stroke-dasharray="2.4 2.1"/><rect x="554.2" y="352.7" width="362.4" height="200.3" fill="none" stroke="#a0a0a0" stroke-width="1"/><line x1="554.2" y1="485.3" x2="916.6" y2="485.3" stroke="#808080" stroke-width="1"/><line x1="554.2" y1="487.6" x2="916.6" y2="487.6" stroke="#f0f0f0" stroke-width="1.1"/><line x1="554.2" y1="396" x2="916.6" y2="396" stroke="#9a9a9a" stroke-width="1"/><g clip-path="url(#c4)"><line x1="554.9" y1="440" x2="554.9" y2="458" stroke="#00ff00" stroke-width="0.8"/><rect x="553.4" y="442" width="3" height="15" fill="#000" stroke="#00ff00" stroke-width="0.8"/><line x1="560.55" y1="441" x2="560.55" y2="457.3" stroke="#00ff00" stroke-width="0.8"/><rect x="559.05" y="443.6" width="3" height="12.7" fill="#fff" stroke="#00ff00" stroke-width="0.8"/><line x1="566.2" y1="453.2" x2="566.2" y2="461.8" stroke="#00ff00" stroke-width="0.8"/><rect x="564.7" y="456.3" width="3" height="4.1" fill="#fff" stroke="#00ff00" stroke-width="0.8"/><line x1="571.84" y1="455.3" x2="571.84" y2="464.5" stroke="#00ff00" stroke-width="0.8"/><rect x="570.34" y="459.4" width="3" height="1" fill="#000" stroke="#00ff00" stroke-width="0.8"/><line x1="577.49" y1="454.2" x2="577.49" y2="463.4" stroke="#00ff00" stroke-width="0.8"/><rect x="575.99" y="458" width="3" height="1" fill="#000" stroke="#00ff00" stroke-width="0.8"/><line x1="583.14" y1="456.9" x2="583.14" y2="481.4" stroke="#00ff00" stroke-width="0.8"/><rect x="581.64" y="458.3" width="3" height="21.5" fill="#fff" stroke="#00ff00" stroke-width="0.8"/><line x1="588.79" y1="446.1" x2="588.79" y2="480.2" stroke="#00ff00" stroke-width="0.8"/><rect x="587.29" y="454.9" width="3" height="24.9" fill="#000" stroke="#00ff00" stroke-width="0.8"/><line x1="594.44" y1="454.2" x2="594.44" y2="461.8" stroke="#00ff00" stroke-width="0.8"/><rect x="592.94" y="455.3" width="3" height="5.7" fill="#fff" stroke="#00ff00" stroke-width="0.8"/><line x1="600.08" y1="455.3" x2="600.08" y2="465.5" stroke="#00ff00" stroke-width="0.8"/><rect x="598.58" y="456.9" width="3" height="3.5" fill="#fff" stroke="#00ff00" stroke-width="0.8"/><line x1="605.73" y1="459.4" x2="605.73" y2="472.6" stroke="#00ff00" stroke-width="0.8"/><rect x="604.23" y="460.4" width="3" height="8.8" fill="#fff" stroke="#00ff00" stroke-width="0.8"/><line x1="611.38" y1="461.8" x2="611.38" y2="472.6" stroke="#00ff00" stroke-width="0.8"/><rect x="609.88" y="468.2" width="3" height="0.8" fill="#fff" stroke="#00ff00" stroke-width="0.8"/><line x1="617.03" y1="445.1" x2="617.03" y2="471.6" stroke="#00ff00" stroke-width="0.8"/><rect x="615.53" y="450.2" width="3" height="19" fill="#000" stroke="#00ff00" stroke-width="0.8"/><line x1="622.68" y1="442" x2="622.68" y2="459.4" stroke="#00ff00" stroke-width="0.8"/><rect x="621.18" y="447.1" width="3" height="3.1" fill="#000" stroke="#00ff00" stroke-width="0.8"/><line x1="628.32" y1="445.1" x2="628.32" y2="450.2" stroke="#00ff00" stroke-width="0.8"/><rect x="626.82" y="446.7" width="3" height="2.4" fill="#fff" stroke="#00ff00" stroke-width="0.8"/><line x1="633.97" y1="442" x2="633.97" y2="450.8" stroke="#00ff00" stroke-width="0.8"/><rect x="632.47" y="447.1" width="3" height="2.5" fill="#000" stroke="#00ff00" stroke-width="0.8"/><line x1="639.62" y1="433.2" x2="639.62" y2="448.1" stroke="#00ff00" stroke-width="0.8"/><rect x="638.12" y="442" width="3" height="5.1" fill="#000" stroke="#00ff00" stroke-width="0.8"/><line x1="645.27" y1="433.2" x2="645.27" y2="447.1" stroke="#00ff00" stroke-width="0.8"/><rect x="643.77" y="434.9" width="3" height="7.7" fill="#000" stroke="#00ff00" stroke-width="0.8"/><line x1="650.92" y1="430.8" x2="650.92" y2="442.6" stroke="#00ff00" stroke-width="0.8"/><rect x="649.42" y="434.9" width="3" height="4.4" fill="#fff" stroke="#00ff00" stroke-width="0.8"/><line x1="656.56" y1="417.5" x2="656.56" y2="440.6" stroke="#00ff00" stroke-width="0.8"/><rect x="655.06" y="418.1" width="3" height="21.9" fill="#000" stroke="#00ff00" stroke-width="0.8"/><line x1="662.21" y1="413.4" x2="662.21" y2="421" stroke="#00ff00" stroke-width="0.8"/><rect x="660.71" y="416.1" width="3" height="2.8" fill="#000" stroke="#00ff00" stroke-width="0.8"/><line x1="667.86" y1="404.6" x2="667.86" y2="419.5" stroke="#00ff00" stroke-width="0.8"/><rect x="666.36" y="405.2" width="3" height="13.3" fill="#000" stroke="#00ff00" stroke-width="0.8"/><line x1="673.51" y1="403.2" x2="673.51" y2="411.4" stroke="#00ff00" stroke-width="0.8"/><rect x="672.01" y="405.2" width="3" height="4.7" fill="#fff" stroke="#00ff00" stroke-width="0.8"/><line x1="679.16" y1="397.1" x2="679.16" y2="411.4" stroke="#00ff00" stroke-width="0.8"/><rect x="677.66" y="405.2" width="3" height="4.7" fill="#000" stroke="#00ff00" stroke-width="0.8"/><line x1="684.8" y1="401.2" x2="684.8" y2="409.9" stroke="#00ff00" stroke-width="0.8"/><rect x="683.3" y="403.2" width="3" height="2.2" fill="#000" stroke="#00ff00" stroke-width="0.8"/><line x1="690.45" y1="400.5" x2="690.45" y2="417.5" stroke="#00ff00" stroke-width="0.8"/><rect x="688.95" y="403.2" width="3" height="5.5" fill="#fff" stroke="#00ff00" stroke-width="0.8"/><line x1="696.1" y1="401.2" x2="696.1" y2="423.6" stroke="#00ff00" stroke-width="0.8"/><rect x="694.6" y="409.3" width="3" height="13.9" fill="#fff" stroke="#00ff00" stroke-width="0.8"/><line x1="701.75" y1="421" x2="701.75" y2="430.8" stroke="#00ff00" stroke-width="0.8"/><rect x="700.25" y="422.6" width="3" height="7.8" fill="#fff" stroke="#00ff00" stroke-width="0.8"/><line x1="707.4" y1="418.5" x2="707.4" y2="431.2" stroke="#00ff00" stroke-width="0.8"/><rect x="705.9" y="422.6" width="3" height="7.8" fill="#000" stroke="#00ff00" stroke-width="0.8"/><line x1="713.04" y1="401.2" x2="713.04" y2="424.2" stroke="#00ff00" stroke-width="0.8"/><rect x="711.54" y="402.2" width="3" height="21.4" fill="#000" stroke="#00ff00" stroke-width="0.8"/><line x1="718.69" y1="397.7" x2="718.69" y2="409.9" stroke="#00ff00" stroke-width="0.8"/><rect x="717.19" y="402.8" width="3" height="3.5" fill="#fff" stroke="#00ff00" stroke-width="0.8"/><line x1="724.34" y1="388.9" x2="724.34" y2="412" stroke="#00ff00" stroke-width="0.8"/><rect x="722.84" y="405.6" width="3" height="0.8" fill="#fff" stroke="#00ff00" stroke-width="0.8"/><line x1="729.99" y1="403.2" x2="729.99" y2="408.3" stroke="#00ff00" stroke-width="0.8"/><rect x="728.49" y="404.2" width="3" height="3.1" fill="#000" stroke="#00ff00" stroke-width="0.8"/><line x1="735.64" y1="398.1" x2="735.64" y2="409.9" stroke="#00ff00" stroke-width="0.8"/><rect x="734.14" y="405" width="3" height="0.8" fill="#fff" stroke="#00ff00" stroke-width="0.8"/><line x1="741.28" y1="403.8" x2="741.28" y2="416.5" stroke="#00ff00" stroke-width="0.8"/><rect x="739.78" y="404.6" width="3" height="6.8" fill="#fff" stroke="#00ff00" stroke-width="0.8"/><line x1="746.93" y1="405.2" x2="746.93" y2="414.4" stroke="#00ff00" stroke-width="0.8"/><rect x="745.43" y="406.3" width="3" height="5.1" fill="#000" stroke="#00ff00" stroke-width="0.8"/><line x1="752.58" y1="400.1" x2="752.58" y2="413.4" stroke="#00ff00" stroke-width="0.8"/><rect x="751.08" y="402.2" width="3" height="4.1" fill="#000" stroke="#00ff00" stroke-width="0.8"/><line x1="758.23" y1="382.8" x2="758.23" y2="408.3" stroke="#00ff00" stroke-width="0.8"/><rect x="756.73" y="384.8" width="3" height="18.4" fill="#000" stroke="#00ff00" stroke-width="0.8"/><line x1="763.88" y1="382.8" x2="763.88" y2="386.9" stroke="#00ff00" stroke-width="0.8"/><rect x="762.38" y="383.4" width="3" height="2" fill="#000" stroke="#00ff00" stroke-width="0.8"/><line x1="769.52" y1="379.7" x2="769.52" y2="386.9" stroke="#00ff00" stroke-width="0.8"/><rect x="768.02" y="382.8" width="3" height="3" fill="#000" stroke="#00ff00" stroke-width="0.8"/><line x1="775.17" y1="369.5" x2="775.17" y2="384.2" stroke="#00ff00" stroke-width="0.8"/><rect x="773.67" y="370.5" width="3" height="12.9" fill="#000" stroke="#00ff00" stroke-width="0.8"/><line x1="780.82" y1="364.4" x2="780.82" y2="374.6" stroke="#00ff00" stroke-width="0.8"/><rect x="779.32" y="367.5" width="3" height="3" fill="#000" stroke="#00ff00" stroke-width="0.8"/><line x1="786.47" y1="366.4" x2="786.47" y2="384.8" stroke="#00ff00" stroke-width="0.8"/><rect x="784.97" y="367.5" width="3" height="14.3" fill="#fff" stroke="#00ff00" stroke-width="0.8"/><line x1="792.12" y1="380.7" x2="792.12" y2="407.3" stroke="#00ff00" stroke-width="0.8"/><rect x="790.62" y="381.8" width="3" height="12.2" fill="#fff" stroke="#00ff00" stroke-width="0.8"/><line x1="797.76" y1="394" x2="797.76" y2="398.5" stroke="#00ff00" stroke-width="0.8"/><rect x="796.26" y="394.4" width="3" height="3.3" fill="#fff" stroke="#00ff00" stroke-width="0.8"/><line x1="803.41" y1="392" x2="803.41" y2="400.1" stroke="#00ff00" stroke-width="0.8"/><rect x="801.91" y="396" width="3" height="1.7" fill="#000" stroke="#00ff00" stroke-width="0.8"/><line x1="809.06" y1="385.8" x2="809.06" y2="396" stroke="#00ff00" stroke-width="0.8"/><rect x="807.56" y="386.9" width="3" height="8.1" fill="#000" stroke="#00ff00" stroke-width="0.8"/><line x1="814.71" y1="375.2" x2="814.71" y2="387.9" stroke="#00ff00" stroke-width="0.8"/><rect x="813.21" y="378.7" width="3" height="8.2" fill="#000" stroke="#00ff00" stroke-width="0.8"/><line x1="820.36" y1="375.6" x2="820.36" y2="398.5" stroke="#00ff00" stroke-width="0.8"/><rect x="818.86" y="378.7" width="3" height="18.4" fill="#fff" stroke="#00ff00" stroke-width="0.8"/><line x1="826" y1="377.7" x2="826" y2="400.1" stroke="#00ff00" stroke-width="0.8"/><rect x="824.5" y="386.9" width="3" height="10.2" fill="#000" stroke="#00ff00" stroke-width="0.8"/><line x1="831.65" y1="381.8" x2="831.65" y2="388.9" stroke="#00ff00" stroke-width="0.8"/><rect x="830.15" y="384.2" width="3" height="2.7" fill="#000" stroke="#00ff00" stroke-width="0.8"/><line x1="837.3" y1="380.7" x2="837.3" y2="385.8" stroke="#00ff00" stroke-width="0.8"/><rect x="835.8" y="383.2" width="3" height="0.8" fill="#fff" stroke="#00ff00" stroke-width="0.8"/><line x1="842.95" y1="380.7" x2="842.95" y2="389.9" stroke="#00ff00" stroke-width="0.8"/><rect x="841.45" y="382.6" width="3" height="0.8" fill="#fff" stroke="#00ff00" stroke-width="0.8"/><line x1="848.6" y1="374.6" x2="848.6" y2="386.9" stroke="#00ff00" stroke-width="0.8"/><rect x="847.1" y="382.6" width="3" height="0.8" fill="#fff" stroke="#00ff00" stroke-width="0.8"/><line x1="854.24" y1="380.1" x2="854.24" y2="387.9" stroke="#00ff00" stroke-width="0.8"/><rect x="852.74" y="381.8" width="3" height="2.4" fill="#fff" stroke="#00ff00" stroke-width="0.8"/><line x1="859.89" y1="382.8" x2="859.89" y2="393.6" stroke="#00ff00" stroke-width="0.8"/><rect x="858.39" y="384.2" width="3" height="1.2" fill="#fff" stroke="#00ff00" stroke-width="0.8"/><line x1="865.54" y1="383.8" x2="865.54" y2="392.4" stroke="#00ff00" stroke-width="0.8"/><rect x="864.04" y="384.8" width="3" height="6.1" fill="#fff" stroke="#00ff00" stroke-width="0.8"/><line x1="871.19" y1="382.8" x2="871.19" y2="392.4" stroke="#00ff00" stroke-width="0.8"/><rect x="869.69" y="384.8" width="3" height="6.1" fill="#000" stroke="#00ff00" stroke-width="0.8"/><line x1="876.84" y1="378.7" x2="876.84" y2="385.8" stroke="#00ff00" stroke-width="0.8"/><rect x="875.34" y="380.1" width="3" height="5.3" fill="#000" stroke="#00ff00" stroke-width="0.8"/><line x1="882.48" y1="379.3" x2="882.48" y2="392.4" stroke="#00ff00" stroke-width="0.8"/><rect x="880.98" y="380.1" width="3" height="8.8" fill="#fff" stroke="#00ff00" stroke-width="0.8"/><line x1="888.13" y1="383.4" x2="888.13" y2="397.7" stroke="#00ff00" stroke-width="0.8"/><rect x="886.63" y="384.8" width="3" height="4.7" fill="#000" stroke="#00ff00" stroke-width="0.8"/><line x1="893.78" y1="379.7" x2="893.78" y2="399.7" stroke="#00ff00" stroke-width="0.8"/><rect x="892.28" y="384.8" width="3" height="9.2" fill="#fff" stroke="#00ff00" stroke-width="0.8"/><line x1="899.43" y1="387.9" x2="899.43" y2="396.5" stroke="#00ff00" stroke-width="0.8"/><rect x="897.93" y="389.9" width="3" height="6.1" fill="#fff" stroke="#00ff00" stroke-width="0.8"/></g><line x1="554.2" y1="504.3" x2="916.6" y2="504.3" stroke="#95a0b0" stroke-width="1" stroke-dasharray="2.4 2.1"/><line x1="554.2" y1="517.6" x2="916.6" y2="517.6" stroke="#95a0b0" stroke-width="1" stroke-dasharray="2.4 2.1"/><line x1="554.2" y1="531" x2="916.6" y2="531" stroke="#95a0b0" stroke-width="1" stroke-dasharray="2.4 2.1"/><polyline points="555.06,515.86 560.55,522.19 566.03,541.18 571.1,541.18 575.32,536.96 578.69,532.74 582.91,549.62 587.97,528.52 592.19,524.3 598.52,523.46 602.74,530.63 606.96,534.01 611.18,532.74 615.4,520.08 619.62,507.43 625.95,501.94 634.39,498.99 640.72,496.03 644.94,497.72 651.27,501.94 657.59,496.03 663.92,494.77 670.25,496.88 676.58,498.99 685.02,503.21 691.35,507.43 697.68,515.86 702.74,519.24 708.23,517.97 712.45,511.65 718.78,507.43 723,505.32 729.32,508.69 735.65,509.54 741.98,518.82 748.31,515.86 754.64,509.54 758.86,494.77 763.08,491.81 767.3,494.77 773.63,494.77 782.07,498.99 790.51,513.76 796.84,519.24 803.16,520.08 809.49,515.86 813.71,510.38 820.04,519.24 828.48,517.97 836.92,515.86 841.14,517.13 849.58,512.91 855.91,515.86 864.35,520.08 870.68,517.13 877,504.47 881.22,517.97 887.55,529.79 893.88,532.74 899.37,539.07" fill="none" stroke="#20b2aa" stroke-width="1"/><line x1="915" y1="364" x2="918" y2="364" stroke="#a0a0a0" stroke-width="1"/><text transform="translate(920 366.6) scale(0.9 1)" fill="#fff" font-size="7.3" text-anchor="start" >109.70</text><line x1="915" y1="387.7" x2="918" y2="387.7" stroke="#a0a0a0" stroke-width="1"/><text transform="translate(920 390.3) scale(0.9 1)" fill="#fff" font-size="7.3" text-anchor="start" >109.25</text><line x1="915" y1="411.7" x2="918" y2="411.7" stroke="#a0a0a0" stroke-width="1"/><text transform="translate(920 414.3) scale(0.9 1)" fill="#fff" font-size="7.3" text-anchor="start" >108.80</text><line x1="915" y1="435.4" x2="918" y2="435.4" stroke="#a0a0a0" stroke-width="1"/><text transform="translate(920 438) scale(0.9 1)" fill="#fff" font-size="7.3" text-anchor="start" >108.35</text><line x1="915" y1="459.4" x2="918" y2="459.4" stroke="#a0a0a0" stroke-width="1"/><text transform="translate(920 462) scale(0.9 1)" fill="#fff" font-size="7.3" text-anchor="start" >107.90</text><line x1="915" y1="483.5" x2="918" y2="483.5" stroke="#a0a0a0" stroke-width="1"/><text transform="translate(920 486.1) scale(0.9 1)" fill="#fff" font-size="7.3" text-anchor="start" >107.45</text><rect x="917.3" y="392.1" width="25.6" height="7.8" fill="#fff"/><text transform="translate(920 398.6) scale(0.9 1)" fill="#000" font-size="7.3" text-anchor="start" >109.09</text><text transform="translate(920 495.3) scale(0.9 1)" fill="#fff" font-size="7.3" text-anchor="start" >221.4487</text><text transform="translate(920 507.2) scale(0.9 1)" fill="#fff" font-size="7.3" text-anchor="start" >100</text><text transform="translate(920 520.2) scale(0.9 1)" fill="#fff" font-size="7.3" text-anchor="start" >0.00</text><text transform="translate(920 533.7) scale(0.9 1)" fill="#fff" font-size="7.3" text-anchor="start" >-100</text><text transform="translate(920 551) scale(0.9 1)" fill="#fff" font-size="7.3" text-anchor="start" >-266.874</text><line x1="554.2" y1="552" x2="554.2" y2="555" stroke="#a0a0a0" stroke-width="1"/><text transform="translate(554.2 561.6) scale(0.9 1)" fill="#fff" font-size="7.3" text-anchor="start" >22 Apr 2021</text><line x1="599.4" y1="552" x2="599.4" y2="555" stroke="#a0a0a0" stroke-width="1"/><text transform="translate(599.4 561.6) scale(0.9 1)" fill="#fff" font-size="7.3" text-anchor="start" >25 Apr 23:00</text><line x1="644.9" y1="552" x2="644.9" y2="555" stroke="#a0a0a0" stroke-width="1"/><text transform="translate(644.9 561.6) scale(0.9 1)" fill="#fff" font-size="7.3" text-anchor="start" >27 Apr 07:00</text><line x1="690.1" y1="552" x2="690.1" y2="555" stroke="#a0a0a0" stroke-width="1"/><text transform="translate(690.1 561.6) scale(0.9 1)" fill="#fff" font-size="7.3" text-anchor="start" >28 Apr 15:00</text><line x1="735.7" y1="552" x2="735.7" y2="555" stroke="#a0a0a0" stroke-width="1"/><text transform="translate(735.7 561.6) scale(0.9 1)" fill="#fff" font-size="7.3" text-anchor="start" >29 Apr 23:00</text><line x1="781.2" y1="552" x2="781.2" y2="555" stroke="#a0a0a0" stroke-width="1"/><text transform="translate(781.2 561.6) scale(0.9 1)" fill="#fff" font-size="7.3" text-anchor="start" >3 May 07:00</text><line x1="825.5" y1="552" x2="825.5" y2="555" stroke="#a0a0a0" stroke-width="1"/><text transform="translate(825.5 561.6) scale(0.9 1)" fill="#fff" font-size="7.3" text-anchor="start" >4 May 15:00</text><line x1="870.7" y1="552" x2="870.7" y2="555" stroke="#a0a0a0" stroke-width="1"/><text transform="translate(870.7 561.6) scale(0.9 1)" fill="#fff" font-size="7.3" text-anchor="start" >5 May 23:00</text><text transform="translate(557.5 360) scale(0.9 1)" fill="#fff" font-size="7.3" text-anchor="start" >USDJPY,H4&#160;&#160;109.22 109.25 109.09 109.09</text><text transform="translate(557.5 495.5) scale(0.9 1)" fill="#fff" font-size="7.3" text-anchor="start" >CCI(14) -173.5043</text></svg><div style="position:absolute;left:139px;top:577px;width:813px;height:1px;background:#6e6e6e;"></div><div style="position:absolute;left:142.7px;top:578px;width:59px;height:12px;background:#fff;border:1px solid #444;border-top:none;box-sizing:border-box;"></div><div style="position:absolute;left:6px;top:591.3px;width:948px;height:2.6px;background:#e2e2e2;"></div><div style="position:absolute;left:149.3px;top:578.2px;font-size:8.6px;line-height:10.32px;color:#111;white-space:nowrap;transform:scaleX(0.9);transform-origin:0 0;">EURUSD,H4</div><div style="position:absolute;left:208.3px;top:578.2px;font-size:8.6px;line-height:10.32px;color:#888;white-space:nowrap;transform:scaleX(0.9);transform-origin:0 0;">USDCHF,H4</div><div style="position:absolute;left:260px;top:580px;width:1px;height:9px;background:#888;"></div><div style="position:absolute;left:268.3px;top:578.2px;font-size:8.6px;line-height:10.32px;color:#888;white-space:nowrap;transform:scaleX(0.9);transform-origin:0 0;">GBPUSD,H4</div><div style="position:absolute;left:320px;top:580px;width:1px;height:9px;background:#888;"></div><div style="position:absolute;left:327.7px;top:578.2px;font-size:8.6px;line-height:10.32px;color:#888;white-space:nowrap;transform:scaleX(0.9);transform-origin:0 0;">USDJPY,H4</div><div style="position:absolute;left:376.7px;top:580px;width:1px;height:9px;background:#888;"></div><svg style="position:absolute;left:929px;top:580px" width="20" height="8" viewBox="0 0 20 8"><path d="M3.5 1.2L0.8 3.8L3.5 6.4Z" fill="#9a9a9a"/><path d="M16.5 1.2L19.2 3.8L16.5 6.4Z" fill="#9a9a9a"/></svg><div style="position:absolute;left:7px;top:604px;width:9px;height:80px;background:linear-gradient(to bottom,#c9d9ea,#dce6f1);"></div><svg style="position:absolute;left:8px;top:595px" width="6" height="6" viewBox="0 0 6 6"><path d="M1 1L5 5M5 1L1 5" stroke="#000" stroke-width="1.4"/></svg><div style="position:absolute;left:7.5px;top:684px;width:9px;height:30px;transform-origin:0 0;transform:rotate(-90deg);font-size:7.5px;line-height:9px;color:#333;white-space:nowrap;">Terminal</div><div style="position:absolute;left:16.2px;top:594.3px;width:935px;height:73.5px;background:#fff;border-left:1px solid #c0c0c0;border-top:1px solid #c0c0c0;box-sizing:border-box;"></div><div style="position:absolute;left:615px;top:595px;width:1px;height:73px;background:#d8d8d8;"></div><div style="position:absolute;left:882px;top:595px;width:1px;height:73px;background:#d8d8d8;"></div><div style="position:absolute;left:21.8px;top:597.5px;font-size:8.2px;line-height:9.84px;color:#222;white-space:nowrap;">Name</div><div style="position:absolute;left:620.6px;top:597.5px;font-size:8.2px;line-height:9.84px;color:#222;white-space:nowrap;">Category</div><div style="position:absolute;left:903.7px;top:597.5px;font-size:8.2px;line-height:9.84px;color:#222;white-space:nowrap;">Date</div><svg style="position:absolute;left:927px;top:600px" width="7" height="6" viewBox="0 0 7 6"><path d="M1 1H6L3.5 4Z" fill="none" stroke="#999" stroke-width="0.7"/></svg><svg style="position:absolute;left:20.7px;top:614.5px" width="6" height="7" viewBox="0 0 6 7"><path d="M0.5 0.5H3.8L5.5 2.2V6.5H0.5Z" fill="#fbf3d0" stroke="#c8a860" stroke-width="0.8"/></svg><div style="position:absolute;left:32.3px;top:613.8px;font-size:8.3px;line-height:9.96px;color:#111;white-space:nowrap;">Better Programmer (Part 02): Stop doing these 5 things to become a successful MQL5 programmer</div><div style="position:absolute;left:618.7px;top:613.8px;font-size:8.3px;line-height:9.96px;color:#111;white-space:nowrap;">Trading Systems, Indicators, Expert Advisors, Statistics and analysis</div><div style="position:absolute;left:880px;top:613.8px;font-size:8.2px;line-height:9.84px;color:#111;white-space:nowrap;"><div style="width:56.5px;text-align:right">2021.08.06</div></div><div style="position:absolute;left:17px;top:625.5px;width:922px;height:13.6px;background:#ebebeb;"></div><svg style="position:absolute;left:20.7px;top:628.5px" width="6" height="7" viewBox="0 0 6 7"><path d="M0.5 0.5H3.8L5.5 2.2V6.5H0.5Z" fill="#fbf3d0" stroke="#c8a860" stroke-width="0.8"/></svg><div style="position:absolute;left:32.3px;top:627.8px;font-size:8.3px;line-height:9.96px;color:#111;white-space:nowrap;">Graphics in DoEasy library (part 78): Animation principles in the library. Image slicing</div><div style="position:absolute;left:618.7px;top:627.8px;font-size:8.3px;line-height:9.96px;color:#111;white-space:nowrap;">Examples</div><div style="position:absolute;left:880px;top:627.8px;font-size:8.2px;line-height:9.84px;color:#111;white-space:nowrap;"><div style="width:56.5px;text-align:right">2021.08.03</div></div><svg style="position:absolute;left:20.7px;top:642.5px" width="6" height="7" viewBox="0 0 6 7"><path d="M0.5 0.5H3.8L5.5 2.2V6.5H0.5Z" fill="#fbf3d0" stroke="#c8a860" stroke-width="0.8"/></svg><div style="position:absolute;left:32.3px;top:641.8px;font-size:8.3px;line-height:9.96px;color:#111;white-space:nowrap;">Better Programmer (Part 01): You must stop doing these 5 things to become a successful MQL5 programmer</div><div style="position:absolute;left:618.7px;top:641.8px;font-size:8.3px;line-height:9.96px;color:#111;white-space:nowrap;">Trading Systems, Indicators, Expert Advisors</div><div style="position:absolute;left:880px;top:641.8px;font-size:8.2px;line-height:9.84px;color:#111;white-space:nowrap;"><div style="width:56.5px;text-align:right">2021.07.27</div></div><div style="position:absolute;left:17px;top:653.5px;width:922px;height:13.6px;background:#ebebeb;"></div><svg style="position:absolute;left:20.7px;top:656.5px" width="6" height="7" viewBox="0 0 6 7"><path d="M0.5 0.5H3.8L5.5 2.2V6.5H0.5Z" fill="#fbf3d0" stroke="#c8a860" stroke-width="0.8"/></svg><div style="position:absolute;left:32.3px;top:655.8px;font-size:8.3px;line-height:9.96px;color:#111;white-space:nowrap;">Graphics in DoEasy library (part 77): Shadow object class</div><div style="position:absolute;left:618.7px;top:655.8px;font-size:8.3px;line-height:9.96px;color:#111;white-space:nowrap;">Examples</div><div style="position:absolute;left:880px;top:655.8px;font-size:8.2px;line-height:9.84px;color:#111;white-space:nowrap;"><div style="width:56.5px;text-align:right">2021.07.26</div></div><div style="position:absolute;left:17px;top:667.5px;width:922px;height:1px;background:#9a9a9a;"></div><div style="position:absolute;left:939px;top:595px;width:12px;height:73px;background:#f0f0f0;"></div><svg style="position:absolute;left:940px;top:598px" width="10" height="6" viewBox="0 0 10 6"><path d="M2 4.5L5 1.8L8 4.5" fill="none" stroke="#505050" stroke-width="1.3"/></svg><div style="position:absolute;left:941.5px;top:606.7px;width:7px;height:12px;background:#cdcdcd;"></div><svg style="position:absolute;left:940px;top:659.5px" width="10" height="6" viewBox="0 0 10 6"><path d="M2 1.5L5 4.2L8 1.5" fill="none" stroke="#505050" stroke-width="1.3"/></svg><div style="position:absolute;left:155.7px;top:668px;width:56.6px;height:14.5px;background:#fff;border:1px solid #444;border-top:none;box-sizing:border-box;"></div><div style="position:absolute;left:26px;top:671.4px;font-size:8.2px;line-height:9.84px;color:#888;white-space:nowrap;">Alerts</div><div style="position:absolute;left:61px;top:671.4px;font-size:8.2px;line-height:9.84px;color:#888;white-space:nowrap;">Mailbox</div><div style="position:absolute;left:93.3px;top:675.5px;font-size:6.3px;line-height:7.56px;color:#e02020;white-space:nowrap;font-weight:bold;">6</div><div style="position:absolute;left:110.7px;top:671.4px;font-size:8.2px;line-height:9.84px;color:#888;white-space:nowrap;">Market</div><div style="position:absolute;left:137.3px;top:675.5px;font-size:6.3px;line-height:7.56px;color:#e02020;white-space:nowrap;font-weight:bold;">129</div><div style="position:absolute;left:162.7px;top:671.4px;font-size:8.2px;line-height:9.84px;color:#111;white-space:nowrap;">Articles</div><div style="position:absolute;left:191.7px;top:675.5px;font-size:6.3px;line-height:7.56px;color:#e02020;white-space:nowrap;font-weight:bold;">1042</div><div style="position:absolute;left:220px;top:671.4px;font-size:8.2px;line-height:9.84px;color:#888;white-space:nowrap;">Code Base</div><div style="position:absolute;left:272.3px;top:671.4px;font-size:8.2px;line-height:9.84px;color:#888;white-space:nowrap;">Experts</div><div style="position:absolute;left:313.3px;top:671.4px;font-size:8.2px;line-height:9.84px;color:#888;white-space:nowrap;">Journal</div><div style="position:absolute;left:54.3px;top:671px;width:1px;height:10px;background:#777;"></div><div style="position:absolute;left:103.3px;top:671px;width:1px;height:10px;background:#777;"></div><div style="position:absolute;left:265.7px;top:671px;width:1px;height:10px;background:#777;"></div><div style="position:absolute;left:306px;top:671px;width:1px;height:10px;background:#777;"></div><div style="position:absolute;left:348px;top:671px;width:1px;height:10px;background:#777;"></div><div style="position:absolute;left:6px;top:685.5px;width:948px;height:1px;background:#a8a8a8;"></div><div style="position:absolute;left:6px;top:686.5px;width:948px;height:1px;background:#fff;"></div><div style="position:absolute;left:7.3px;top:691.2px;font-size:8.2px;line-height:9.84px;color:#111;white-space:nowrap;">For Help, press F1</div><div style="position:absolute;left:451.3px;top:688px;width:1px;height:14px;background:#c8c8c8;"></div><div style="position:absolute;left:533.3px;top:688px;width:1px;height:14px;background:#c8c8c8;"></div><div style="position:absolute;left:605.5px;top:688px;width:1px;height:14px;background:#c8c8c8;"></div><div style="position:absolute;left:655.5px;top:688px;width:1px;height:14px;background:#c8c8c8;"></div><div style="position:absolute;left:705.7px;top:688px;width:1px;height:14px;background:#c8c8c8;"></div><div style="position:absolute;left:753.7px;top:688px;width:1px;height:14px;background:#c8c8c8;"></div><div style="position:absolute;left:802.5px;top:688px;width:1px;height:14px;background:#c8c8c8;"></div><div style="position:absolute;left:849.4px;top:688px;width:1px;height:14px;background:#c8c8c8;"></div><div style="position:absolute;left:455.4px;top:691.2px;font-size:8.2px;line-height:9.84px;color:#111;white-space:nowrap;">Default</div><svg style="position:absolute;left:853px;top:690.5px" width="17" height="10" viewBox="0 0 17 10"><rect x="0" y="0" width="16.5" height="9.5" fill="#b02818"/><path d="M1 8.5L7 4M8.5 1V9M10.5 1V9M12.5 1V9M14.5 1V9" stroke="#f0d8d0" stroke-width="0.7"/></svg><svg style="position:absolute;left:940px;top:690px" width="14" height="13" viewBox="0 0 14 13"><path d="M13 3L3 13M13 7L7 13M13 11L11 13" stroke="#b8b8b8" stroke-width="1"/></svg><div style="position:absolute;left:872.6px;top:691.2px;font-size:8.2px;line-height:9.84px;color:#111;white-space:nowrap;">No connection</div></body></html>
